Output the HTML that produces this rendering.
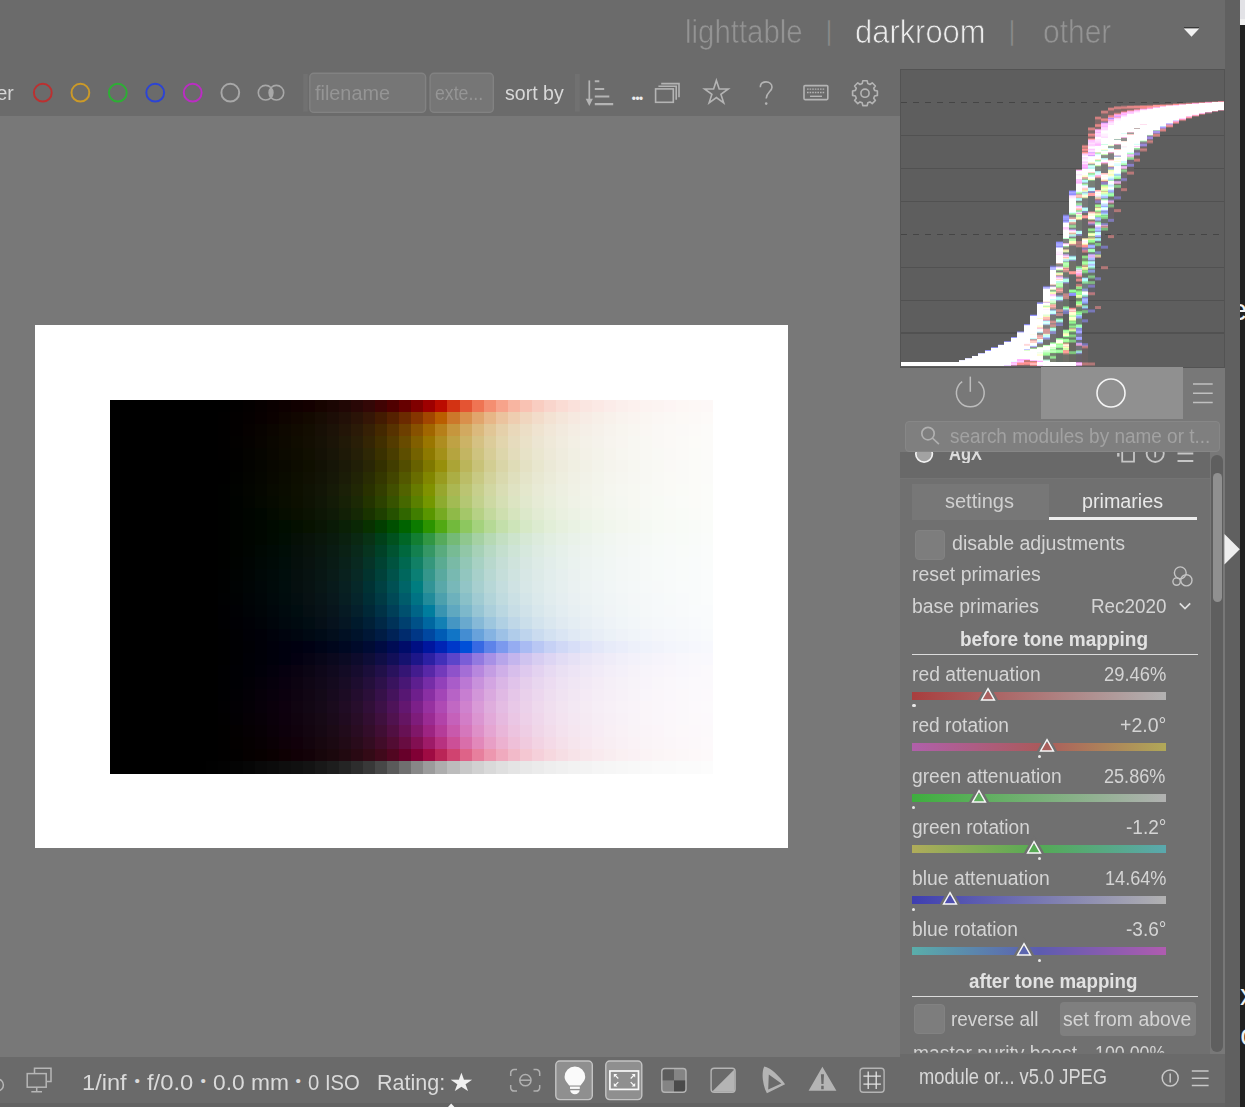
<!DOCTYPE html>
<html lang="en"><head><meta charset="utf-8"><title>darktable</title>
<style>
html,body{margin:0;padding:0}
body{width:1245px;height:1107px;position:relative;overflow:hidden;background:#787878;font-family:"Liberation Sans",sans-serif}
.a{position:absolute}
span.t{position:absolute;white-space:nowrap;line-height:1;transform-origin:0 0;display:block}
svg{position:absolute;overflow:visible}
.ic{fill:none;stroke:#b4b4b4;stroke-width:1.6}

</style></head><body>
<!-- top header -->
<div class="a" style="left:0;top:0;width:1225px;height:70px;background:#6b6b6b"></div>
<!-- filter bar -->
<div class="a" style="left:0;top:69px;width:900px;height:47px;background:#6b6b6b"></div>
<!-- right strip + other window -->
<div class="a" style="left:1240px;top:0;width:5px;height:1107px;background:#212121"></div>
<div class="a" style="left:1240px;top:0;width:5px;height:19px;background:#e2e2e6"></div>
<div class="a" style="left:1240px;top:19px;width:5px;height:6px;background:#f0f0f0"></div>
<!-- header dropdown triangle -->
<svg style="left:1183px;top:26px" width="18" height="12" viewBox="0 0 18 12"><path d="M1 1.6H16" stroke="#3a3a3a" stroke-width="1.2"/><path d="M0.8 2.4H16.2L8.5 10.8Z" fill="#f2f2f2"/></svg>

<!-- filter bar widgets -->
<svg style="left:0;top:70px" width="900" height="46" viewBox="0 70 900 46">
 <g fill="none" stroke-width="1.95">
  <circle cx="42.8" cy="92.7" r="8.9" stroke="#bc3030"/>
  <circle cx="80.4" cy="92.7" r="8.9" stroke="#cc9a28"/>
  <circle cx="117.8" cy="92.7" r="8.9" stroke="#2cb034"/>
  <circle cx="155.2" cy="92.7" r="8.9" stroke="#2c44d4"/>
  <circle cx="192.7" cy="92.7" r="8.9" stroke="#bc2cc4"/>
  <circle cx="230.3" cy="92.7" r="8.9" stroke="#a8a8a8"/>
 </g>
 <g fill="none" stroke="#a8a8a8" stroke-width="1.6">
  <circle cx="265.6" cy="92.7" r="7.3"/><circle cx="276.4" cy="92.7" r="7.3"/>
 </g>
 <path d="M271 87.8a7.3 7.3 0 0 1 0 9.8a7.3 7.3 0 0 1 0-9.8Z" fill="#a8a8a8"/>
 <rect x="303.1" y="74" width="4.6" height="37.6" fill="#717171"/>
 <rect x="309.8" y="73.3" width="115.8" height="39.1" rx="4" fill="#767676" stroke="#828282" stroke-width="1.4"/>
 <rect x="430.1" y="73.3" width="63.2" height="39.1" rx="4" fill="#767676" stroke="#828282" stroke-width="1.4"/>
 <rect x="575" y="74" width="4.8" height="37.6" fill="#717171"/>
 <!-- sort icon -->
 <path d="M589.3 80.4V100" stroke="#b4b4b4" stroke-width="1.7" fill="none"/>
 <path d="M585.7 98.8H592.9L589.3 106Z" fill="#b4b4b4"/>
 <path d="M594.8 81.3H599.3M594.8 89H604.2M594.8 96.5H609.3M594.8 104.1H613.2" stroke="#b4b4b4" stroke-width="2.1" fill="none"/>
 <!-- stack icon -->
 <g class="ic" stroke-width="1.7">
  <rect x="655.6" y="88.9" width="17.7" height="13.4"/>
  <path d="M658.4 86.2H676.2V99.8"/>
  <path d="M661.2 83.6H679V97.2"/>
 </g>
 <!-- star -->
 <path class="ic" stroke-width="1.85" stroke-linejoin="miter" stroke-miterlimit="10" d="M716.4 80.4L719.2 89.0L728.2 89.0L720.9 94.3L723.7 102.8L716.4 97.5L709.1 102.8L711.9 94.3L704.6 89.0L713.6 89.0Z"/>
 <!-- question -->
 <path class="ic" stroke-width="1.7" d="M760.3 87.3C760.3 83.5 763 81.9 766 81.9C769.3 81.9 772 84 772 87.2C772 91.6 766.2 92.3 766.2 98.6"/>
 <circle cx="766.2" cy="103.6" r="1.3" fill="#b4b4b4"/>
 <!-- keyboard -->
 <g class="ic" stroke-width="1.5">
  <rect x="804" y="85.6" width="23.8" height="14" rx="1"/>
  <path d="M807 89.2H825" stroke-dasharray="1.6 1" stroke-width="1.3"/>
  <path d="M807 92.5H825" stroke-dasharray="1.6 1" stroke-width="1.3"/>
  <path d="M810 96.3H822" stroke-width="1.4"/>
 </g>
 <!-- gear -->
 <g class="ic" stroke-width="1.6" transform="translate(865 93.2)">
  <circle r="4.1"/>
  <path id="gearp" d="M-2.2 -12.4H2.2L2.8 -9.6L5 -8.7L7.2 -10.4L10.4 -7.2L8.7 -5L9.6 -2.8L12.4 -2.2V2.2L9.6 2.8L8.7 5L10.4 7.2L7.2 10.4L5 8.7L2.8 9.6L2.2 12.4H-2.2L-2.8 9.6L-5 8.7L-7.2 10.4L-10.4 7.2L-8.7 5L-9.6 2.8L-12.4 2.2V-2.2L-9.6 -2.8L-8.7 -5L-10.4 -7.2L-7.2 -10.4L-5 -8.7L-2.8 -9.6Z" stroke-linejoin="round"/>
 </g>
</svg>

<!-- white canvas -->
<div class="a" style="left:34.6px;top:324.6px;width:753.5px;height:523.8px;background:#fff"></div>

<!-- right panel -->
<div class="a" style="left:900px;top:70px;width:325px;height:1037px;background:#787878"></div>
<svg style="left:900px;top:69px" width="325" height="299" viewBox="900 69 325 299" shape-rendering="crispEdges"><rect x="900" y="69.5" width="325" height="297.8" fill="#5e5e5e"/><path d="M901 102.5H1224" stroke="#454545" stroke-width="1.25" stroke-dasharray="5.9 6.1" fill="none"/><path d="M901 135.5H1224" stroke="#515151" stroke-width="1.2" fill="none"/><path d="M901 168.4H1224" stroke="#515151" stroke-width="1.2" fill="none"/><path d="M901 201.3H1224" stroke="#515151" stroke-width="1.2" fill="none"/><path d="M901 234.2H1224" stroke="#454545" stroke-width="1.25" stroke-dasharray="5.9 6.1" fill="none"/><path d="M901 267.2H1224" stroke="#515151" stroke-width="1.2" fill="none"/><path d="M901 300.1H1224" stroke="#515151" stroke-width="1.2" fill="none"/><path d="M901 333.0H1224" stroke="#515151" stroke-width="1.2" fill="none"/><g style="filter:blur(0.45px)"><rect x="900.5" y="362" width="6.53" height="4" fill="#ffffff"/><rect x="907.0" y="362" width="6.53" height="4" fill="#ffffff"/><rect x="913.5" y="362" width="6.53" height="4" fill="#ffffff"/><rect x="919.9" y="362" width="6.53" height="4" fill="#ffffff"/><rect x="926.4" y="362" width="6.53" height="4" fill="#ffffff"/><rect x="932.9" y="362" width="6.53" height="4" fill="#ffffff"/><rect x="939.4" y="362" width="6.53" height="4" fill="#ffffff"/><rect x="945.9" y="362" width="6.53" height="4" fill="#ffffff"/><rect x="952.3" y="362" width="6.53" height="4" fill="#ffffff"/><rect x="958.8" y="360" width="6.53" height="1" fill="#f0f0ff"/><rect x="958.8" y="361" width="6.53" height="5" fill="#ffffff"/><rect x="965.3" y="358" width="6.53" height="1" fill="#e0e0ff"/><rect x="965.3" y="359" width="6.53" height="7" fill="#ffffff"/><rect x="971.8" y="355" width="6.53" height="1" fill="#606070"/><rect x="971.8" y="356" width="6.53" height="10" fill="#ffffff"/><rect x="978.3" y="353" width="6.53" height="1" fill="#d0d0ff"/><rect x="978.3" y="354" width="6.53" height="12" fill="#ffffff"/><rect x="984.7" y="350" width="6.53" height="1" fill="#9898ff"/><rect x="984.7" y="351" width="6.53" height="15" fill="#ffffff"/><rect x="991.2" y="347" width="6.53" height="1" fill="#8888e8"/><rect x="991.2" y="348" width="6.53" height="18" fill="#ffffff"/><rect x="997.7" y="344" width="6.53" height="1" fill="#707098"/><rect x="997.7" y="345" width="6.53" height="21" fill="#ffffff"/><rect x="1004.2" y="341" width="6.53" height="1" fill="#8888e0"/><rect x="1004.2" y="342" width="6.53" height="23" fill="#ffffff"/><rect x="1004.2" y="365" width="6.53" height="1" fill="#e8d0ff"/><rect x="1010.7" y="337" width="6.53" height="1" fill="#9898ff"/><rect x="1010.7" y="338" width="6.53" height="23" fill="#ffffff"/><rect x="1010.7" y="361" width="6.53" height="1" fill="#f0ffff"/><rect x="1010.7" y="362" width="6.53" height="1" fill="#ffb8ff"/><rect x="1010.7" y="363" width="6.53" height="2" fill="#ffc8ff"/><rect x="1010.7" y="365" width="6.53" height="1" fill="#b880a0"/><rect x="1017.1" y="331" width="6.53" height="1" fill="#7878b0"/><rect x="1017.1" y="332" width="6.53" height="1" fill="#d0d0ff"/><rect x="1017.1" y="333" width="6.53" height="26" fill="#ffffff"/><rect x="1017.1" y="359" width="6.53" height="1" fill="#ffb8ff"/><rect x="1017.1" y="360" width="6.53" height="1" fill="#ffb0ff"/><rect x="1017.1" y="361" width="6.53" height="1" fill="#ffc8ff"/><rect x="1017.1" y="362" width="6.53" height="1" fill="#ffa8d0"/><rect x="1017.1" y="363" width="6.53" height="1" fill="#ff9090"/><rect x="1017.1" y="364" width="6.53" height="1" fill="#f89090"/><rect x="1017.1" y="365" width="6.53" height="1" fill="#886868"/><rect x="1023.6" y="324" width="6.53" height="1" fill="#8888e8"/><rect x="1023.6" y="325" width="6.53" height="1" fill="#e8e8ff"/><rect x="1023.6" y="326" width="6.53" height="17" fill="#ffffff"/><rect x="1023.6" y="343" width="6.53" height="1" fill="#fff8ff"/><rect x="1023.6" y="344" width="6.53" height="1" fill="#ffd8d8"/><rect x="1023.6" y="345" width="6.53" height="1" fill="#ffe0e0"/><rect x="1023.6" y="346" width="6.53" height="3" fill="#ffffff"/><rect x="1023.6" y="349" width="6.53" height="1" fill="#c0c8ff"/><rect x="1023.6" y="350" width="6.53" height="1" fill="#e0ffd0"/><rect x="1023.6" y="351" width="6.53" height="8" fill="#ffffff"/><rect x="1023.6" y="359" width="6.53" height="1" fill="#ffb8ff"/><rect x="1023.6" y="360" width="6.53" height="1" fill="#d08080"/><rect x="1023.6" y="361" width="6.53" height="1" fill="#c07878"/><rect x="1023.6" y="362" width="6.53" height="2" fill="#ff9090"/><rect x="1023.6" y="364" width="6.53" height="1" fill="#e08888"/><rect x="1023.6" y="365" width="6.53" height="1" fill="#886868"/><rect x="1030.1" y="314" width="6.53" height="1" fill="#686888"/><rect x="1030.1" y="315" width="6.53" height="1" fill="#9898ff"/><rect x="1030.1" y="316" width="6.53" height="18" fill="#ffffff"/><rect x="1030.1" y="334" width="6.53" height="1" fill="#fffff0"/><rect x="1030.1" y="335" width="6.53" height="3" fill="#ffffff"/><rect x="1030.1" y="338" width="6.53" height="1" fill="#c8ffff"/><rect x="1030.1" y="339" width="6.53" height="1" fill="#b8a8a8"/><rect x="1030.1" y="340" width="6.53" height="1" fill="#e8b0b0"/><rect x="1030.1" y="341" width="6.53" height="2" fill="#ffd0c8"/><rect x="1030.1" y="343" width="6.53" height="2" fill="#ffffff"/><rect x="1030.1" y="345" width="6.53" height="1" fill="#e8ffff"/><rect x="1030.1" y="346" width="6.53" height="1" fill="#b0b0f8"/><rect x="1030.1" y="347" width="6.53" height="1" fill="#909098"/><rect x="1030.1" y="348" width="6.53" height="1" fill="#a0d098"/><rect x="1030.1" y="349" width="6.53" height="1" fill="#fffff8"/><rect x="1030.1" y="350" width="6.53" height="10" fill="#ffffff"/><rect x="1030.1" y="360" width="6.53" height="1" fill="#ffc0ff"/><rect x="1030.1" y="361" width="6.53" height="1" fill="#c88080"/><rect x="1030.1" y="362" width="6.53" height="1" fill="#ff9090"/><rect x="1030.1" y="363" width="6.53" height="2" fill="#ffb8b8"/><rect x="1030.1" y="365" width="6.53" height="1" fill="#d88080"/><rect x="1036.6" y="302" width="6.53" height="1" fill="#8080c0"/><rect x="1036.6" y="303" width="6.53" height="1" fill="#a0a0ff"/><rect x="1036.6" y="304" width="6.53" height="14" fill="#ffffff"/><rect x="1036.6" y="318" width="6.53" height="1" fill="#ffffd8"/><rect x="1036.6" y="319" width="6.53" height="6" fill="#ffffff"/><rect x="1036.6" y="325" width="6.53" height="1" fill="#ffffe8"/><rect x="1036.6" y="326" width="6.53" height="1" fill="#ffffd8"/><rect x="1036.6" y="327" width="6.53" height="1" fill="#ffd8d0"/><rect x="1036.6" y="328" width="6.53" height="1" fill="#ffc8d8"/><rect x="1036.6" y="329" width="6.53" height="1" fill="#f0ffff"/><rect x="1036.6" y="330" width="6.53" height="1" fill="#ffffff"/><rect x="1036.6" y="331" width="6.53" height="1" fill="#e8ffff"/><rect x="1036.6" y="332" width="6.53" height="1" fill="#b0d8e8"/><rect x="1036.6" y="333" width="6.53" height="1" fill="#909090"/><rect x="1036.6" y="334" width="6.53" height="1" fill="#989090"/><rect x="1036.6" y="335" width="6.53" height="1" fill="#e0a8a0"/><rect x="1036.6" y="336" width="6.53" height="1" fill="#e8a8a8"/><rect x="1036.6" y="337" width="6.53" height="1" fill="#ffb8b8"/><rect x="1036.6" y="338" width="6.53" height="1" fill="#e8b0a8"/><rect x="1036.6" y="339" width="6.53" height="1" fill="#fffff0"/><rect x="1036.6" y="340" width="6.53" height="2" fill="#d8ffff"/><rect x="1036.6" y="342" width="6.53" height="1" fill="#b0c0ff"/><rect x="1036.6" y="343" width="6.53" height="1" fill="#9090c0"/><rect x="1036.6" y="344" width="6.53" height="2" fill="#808078"/><rect x="1036.6" y="346" width="6.53" height="1" fill="#809080"/><rect x="1036.6" y="347" width="6.53" height="1" fill="#e0ffc8"/><rect x="1036.6" y="348" width="6.53" height="4" fill="#ffffff"/><rect x="1036.6" y="352" width="6.53" height="1" fill="#f0fff0"/><rect x="1036.6" y="353" width="6.53" height="1" fill="#f8fff0"/><rect x="1036.6" y="354" width="6.53" height="2" fill="#ffffd8"/><rect x="1036.6" y="356" width="6.53" height="4" fill="#ffffff"/><rect x="1036.6" y="360" width="6.53" height="1" fill="#ffe8ff"/><rect x="1036.6" y="361" width="6.53" height="1" fill="#ffb0ff"/><rect x="1036.6" y="362" width="6.53" height="3" fill="#ffffff"/><rect x="1036.6" y="365" width="6.53" height="1" fill="#ffd8ff"/><rect x="1043.1" y="285" width="6.53" height="1" fill="#606068"/><rect x="1043.1" y="286" width="6.53" height="1" fill="#7878b8"/><rect x="1043.1" y="287" width="6.53" height="1" fill="#b0b0ff"/><rect x="1043.1" y="288" width="6.53" height="1" fill="#c8c8ff"/><rect x="1043.1" y="289" width="6.53" height="12" fill="#ffffff"/><rect x="1043.1" y="301" width="6.53" height="1" fill="#fff0e0"/><rect x="1043.1" y="302" width="6.53" height="1" fill="#e0c0e8"/><rect x="1043.1" y="303" width="6.53" height="2" fill="#ffffff"/><rect x="1043.1" y="305" width="6.53" height="1" fill="#f0ffd0"/><rect x="1043.1" y="306" width="6.53" height="1" fill="#c0f8b8"/><rect x="1043.1" y="307" width="6.53" height="1" fill="#ffffc8"/><rect x="1043.1" y="308" width="6.53" height="1" fill="#ffffff"/><rect x="1043.1" y="309" width="6.53" height="1" fill="#fff0ff"/><rect x="1043.1" y="310" width="6.53" height="4" fill="#ffffff"/><rect x="1043.1" y="314" width="6.53" height="1" fill="#f0ffe8"/><rect x="1043.1" y="315" width="6.53" height="1" fill="#e0ffd8"/><rect x="1043.1" y="316" width="6.53" height="1" fill="#f8f8b8"/><rect x="1043.1" y="317" width="6.53" height="2" fill="#ffc0b8"/><rect x="1043.1" y="319" width="6.53" height="1" fill="#f0b0a8"/><rect x="1043.1" y="320" width="6.53" height="1" fill="#c8b0d0"/><rect x="1043.1" y="321" width="6.53" height="1" fill="#c0ffff"/><rect x="1043.1" y="322" width="6.53" height="1" fill="#e8ffff"/><rect x="1043.1" y="323" width="6.53" height="1" fill="#d0ffff"/><rect x="1043.1" y="324" width="6.53" height="1" fill="#a8c8e0"/><rect x="1043.1" y="325" width="6.53" height="1" fill="#888890"/><rect x="1043.1" y="326" width="6.53" height="2" fill="#808080"/><rect x="1043.1" y="328" width="6.53" height="1" fill="#988888"/><rect x="1043.1" y="329" width="6.53" height="1" fill="#d09898"/><rect x="1043.1" y="330" width="6.53" height="1" fill="#d89898"/><rect x="1043.1" y="331" width="6.53" height="2" fill="#d09898"/><rect x="1043.1" y="333" width="6.53" height="1" fill="#d8a8a0"/><rect x="1043.1" y="334" width="6.53" height="1" fill="#e0ffd8"/><rect x="1043.1" y="335" width="6.53" height="1" fill="#c0ffff"/><rect x="1043.1" y="336" width="6.53" height="1" fill="#c8ffff"/><rect x="1043.1" y="337" width="6.53" height="1" fill="#a8c8ff"/><rect x="1043.1" y="338" width="6.53" height="1" fill="#9090d0"/><rect x="1043.1" y="339" width="6.53" height="1" fill="#8888a8"/><rect x="1043.1" y="340" width="6.53" height="4" fill="#707070"/><rect x="1043.1" y="344" width="6.53" height="1" fill="#787870"/><rect x="1043.1" y="345" width="6.53" height="1" fill="#b8ffb8"/><rect x="1043.1" y="346" width="6.53" height="1" fill="#fffff8"/><rect x="1043.1" y="347" width="6.53" height="3" fill="#ffffff"/><rect x="1043.1" y="350" width="6.53" height="1" fill="#e0ffe0"/><rect x="1043.1" y="351" width="6.53" height="1" fill="#d8ffd8"/><rect x="1043.1" y="352" width="6.53" height="1" fill="#c0ffb8"/><rect x="1043.1" y="353" width="6.53" height="1" fill="#a8ffa8"/><rect x="1043.1" y="354" width="6.53" height="1" fill="#a0ff98"/><rect x="1043.1" y="355" width="6.53" height="1" fill="#90d090"/><rect x="1043.1" y="356" width="6.53" height="1" fill="#788878"/><rect x="1043.1" y="357" width="6.53" height="2" fill="#788078"/><rect x="1043.1" y="359" width="6.53" height="1" fill="#90b8a0"/><rect x="1043.1" y="360" width="6.53" height="1" fill="#d0f8e8"/><rect x="1043.1" y="361" width="6.53" height="5" fill="#ffffff"/><rect x="1049.5" y="265" width="6.53" height="1" fill="#686880"/><rect x="1049.5" y="266" width="6.53" height="1" fill="#7878c0"/><rect x="1049.5" y="267" width="6.53" height="1" fill="#a8a8ff"/><rect x="1049.5" y="268" width="6.53" height="2" fill="#b8b8ff"/><rect x="1049.5" y="270" width="6.53" height="14" fill="#ffffff"/><rect x="1049.5" y="284" width="6.53" height="1" fill="#f0d0c8"/><rect x="1049.5" y="285" width="6.53" height="1" fill="#a09890"/><rect x="1049.5" y="286" width="6.53" height="1" fill="#b8a8d0"/><rect x="1049.5" y="287" width="6.53" height="1" fill="#fff8ff"/><rect x="1049.5" y="288" width="6.53" height="1" fill="#ffffff"/><rect x="1049.5" y="289" width="6.53" height="1" fill="#e0f0c0"/><rect x="1049.5" y="290" width="6.53" height="1" fill="#98b090"/><rect x="1049.5" y="291" width="6.53" height="1" fill="#a8e0a0"/><rect x="1049.5" y="292" width="6.53" height="1" fill="#f8ffc0"/><rect x="1049.5" y="293" width="6.53" height="1" fill="#fff8b8"/><rect x="1049.5" y="294" width="6.53" height="1" fill="#ffc8f0"/><rect x="1049.5" y="295" width="6.53" height="1" fill="#ffc8ff"/><rect x="1049.5" y="296" width="6.53" height="1" fill="#fff0ff"/><rect x="1049.5" y="297" width="6.53" height="2" fill="#ffffff"/><rect x="1049.5" y="299" width="6.53" height="1" fill="#d0ffff"/><rect x="1049.5" y="300" width="6.53" height="1" fill="#d8ffe8"/><rect x="1049.5" y="301" width="6.53" height="1" fill="#d8ffd0"/><rect x="1049.5" y="302" width="6.53" height="1" fill="#c8ffc8"/><rect x="1049.5" y="303" width="6.53" height="1" fill="#a8d898"/><rect x="1049.5" y="304" width="6.53" height="1" fill="#e0c0a8"/><rect x="1049.5" y="305" width="6.53" height="1" fill="#f8a8a0"/><rect x="1049.5" y="306" width="6.53" height="1" fill="#ffb0b0"/><rect x="1049.5" y="307" width="6.53" height="1" fill="#d8a098"/><rect x="1049.5" y="308" width="6.53" height="1" fill="#b89890"/><rect x="1049.5" y="309" width="6.53" height="1" fill="#8890a8"/><rect x="1049.5" y="310" width="6.53" height="1" fill="#a0c8e0"/><rect x="1049.5" y="311" width="6.53" height="1" fill="#c8ffff"/><rect x="1049.5" y="312" width="6.53" height="1" fill="#d0ffff"/><rect x="1049.5" y="313" width="6.53" height="1" fill="#b8fff8"/><rect x="1049.5" y="314" width="6.53" height="1" fill="#9090c0"/><rect x="1049.5" y="315" width="6.53" height="5" fill="#787878"/><rect x="1049.5" y="320" width="6.53" height="1" fill="#988080"/><rect x="1049.5" y="321" width="6.53" height="1" fill="#c89090"/><rect x="1049.5" y="322" width="6.53" height="1" fill="#d09090"/><rect x="1049.5" y="323" width="6.53" height="1" fill="#a08888"/><rect x="1049.5" y="324" width="6.53" height="1" fill="#b88888"/><rect x="1049.5" y="325" width="6.53" height="1" fill="#c89090"/><rect x="1049.5" y="326" width="6.53" height="1" fill="#c09090"/><rect x="1049.5" y="327" width="6.53" height="1" fill="#98c090"/><rect x="1049.5" y="328" width="6.53" height="1" fill="#b0ffe8"/><rect x="1049.5" y="329" width="6.53" height="1" fill="#b8fff8"/><rect x="1049.5" y="330" width="6.53" height="1" fill="#a0e8e0"/><rect x="1049.5" y="331" width="6.53" height="1" fill="#9098c8"/><rect x="1049.5" y="332" width="6.53" height="1" fill="#8888c8"/><rect x="1049.5" y="333" width="6.53" height="1" fill="#8888c0"/><rect x="1049.5" y="334" width="6.53" height="1" fill="#707078"/><rect x="1049.5" y="335" width="6.53" height="7" fill="#707070"/><rect x="1049.5" y="342" width="6.53" height="1" fill="#88c088"/><rect x="1049.5" y="343" width="6.53" height="1" fill="#b8ffb8"/><rect x="1049.5" y="344" width="6.53" height="2" fill="#ffffff"/><rect x="1049.5" y="346" width="6.53" height="1" fill="#fffff0"/><rect x="1049.5" y="347" width="6.53" height="1" fill="#d8ffd0"/><rect x="1049.5" y="348" width="6.53" height="1" fill="#e0ffd8"/><rect x="1049.5" y="349" width="6.53" height="1" fill="#a8ffa8"/><rect x="1049.5" y="350" width="6.53" height="1" fill="#b8ffb0"/><rect x="1049.5" y="351" width="6.53" height="1" fill="#c0ffc0"/><rect x="1049.5" y="352" width="6.53" height="1" fill="#a8ffa0"/><rect x="1049.5" y="353" width="6.53" height="1" fill="#789078"/><rect x="1049.5" y="354" width="6.53" height="1" fill="#788070"/><rect x="1049.5" y="355" width="6.53" height="1" fill="#789078"/><rect x="1049.5" y="356" width="6.53" height="1" fill="#90d088"/><rect x="1049.5" y="357" width="6.53" height="1" fill="#90e890"/><rect x="1049.5" y="358" width="6.53" height="1" fill="#88c088"/><rect x="1049.5" y="359" width="6.53" height="3" fill="#788070"/><rect x="1049.5" y="362" width="6.53" height="4" fill="#ffffff"/><rect x="1056.0" y="241" width="6.53" height="1" fill="#707098"/><rect x="1056.0" y="242" width="6.53" height="1" fill="#9090ff"/><rect x="1056.0" y="243" width="6.53" height="1" fill="#a0a0ff"/><rect x="1056.0" y="244" width="6.53" height="2" fill="#a8a8ff"/><rect x="1056.0" y="246" width="6.53" height="1" fill="#9090f8"/><rect x="1056.0" y="247" width="6.53" height="1" fill="#c8c8ff"/><rect x="1056.0" y="248" width="6.53" height="3" fill="#ffffff"/><rect x="1056.0" y="251" width="6.53" height="1" fill="#fff8ff"/><rect x="1056.0" y="252" width="6.53" height="2" fill="#fff0ff"/><rect x="1056.0" y="254" width="6.53" height="1" fill="#ffe0ff"/><rect x="1056.0" y="255" width="6.53" height="8" fill="#ffffff"/><rect x="1056.0" y="263" width="6.53" height="1" fill="#d0b0a8"/><rect x="1056.0" y="264" width="6.53" height="2" fill="#888880"/><rect x="1056.0" y="266" width="6.53" height="1" fill="#a8a0c0"/><rect x="1056.0" y="267" width="6.53" height="1" fill="#f8d8ff"/><rect x="1056.0" y="268" width="6.53" height="1" fill="#ffffff"/><rect x="1056.0" y="269" width="6.53" height="1" fill="#e8ffc8"/><rect x="1056.0" y="270" width="6.53" height="1" fill="#90b890"/><rect x="1056.0" y="271" width="6.53" height="1" fill="#888080"/><rect x="1056.0" y="272" width="6.53" height="1" fill="#a0d098"/><rect x="1056.0" y="273" width="6.53" height="1" fill="#f0f8b8"/><rect x="1056.0" y="274" width="6.53" height="1" fill="#f8f0b8"/><rect x="1056.0" y="275" width="6.53" height="1" fill="#d0a0a0"/><rect x="1056.0" y="276" width="6.53" height="1" fill="#b8a8d8"/><rect x="1056.0" y="277" width="6.53" height="1" fill="#f8b8f0"/><rect x="1056.0" y="278" width="6.53" height="1" fill="#ffe0ff"/><rect x="1056.0" y="279" width="6.53" height="1" fill="#ffe0c8"/><rect x="1056.0" y="280" width="6.53" height="1" fill="#ffffff"/><rect x="1056.0" y="281" width="6.53" height="1" fill="#c0f8f0"/><rect x="1056.0" y="282" width="6.53" height="1" fill="#b8ffe8"/><rect x="1056.0" y="283" width="6.53" height="2" fill="#c0ffb8"/><rect x="1056.0" y="285" width="6.53" height="1" fill="#c0ffc0"/><rect x="1056.0" y="286" width="6.53" height="1" fill="#a8ffa0"/><rect x="1056.0" y="287" width="6.53" height="1" fill="#a0d098"/><rect x="1056.0" y="288" width="6.53" height="1" fill="#d0a098"/><rect x="1056.0" y="289" width="6.53" height="1" fill="#e09898"/><rect x="1056.0" y="290" width="6.53" height="1" fill="#ffa8a8"/><rect x="1056.0" y="291" width="6.53" height="1" fill="#d09890"/><rect x="1056.0" y="292" width="6.53" height="1" fill="#c09090"/><rect x="1056.0" y="293" width="6.53" height="2" fill="#787878"/><rect x="1056.0" y="295" width="6.53" height="1" fill="#8888a8"/><rect x="1056.0" y="296" width="6.53" height="1" fill="#98b8d8"/><rect x="1056.0" y="297" width="6.53" height="1" fill="#b8fff0"/><rect x="1056.0" y="298" width="6.53" height="1" fill="#c0ffff"/><rect x="1056.0" y="299" width="6.53" height="1" fill="#b0fff0"/><rect x="1056.0" y="300" width="6.53" height="1" fill="#9098c8"/><rect x="1056.0" y="301" width="6.53" height="1" fill="#787888"/><rect x="1056.0" y="302" width="6.53" height="7" fill="#707070"/><rect x="1056.0" y="309" width="6.53" height="1" fill="#b08888"/><rect x="1056.0" y="310" width="6.53" height="1" fill="#c89088"/><rect x="1056.0" y="311" width="6.53" height="1" fill="#c08888"/><rect x="1056.0" y="312" width="6.53" height="1" fill="#807878"/><rect x="1056.0" y="313" width="6.53" height="1" fill="#b88888"/><rect x="1056.0" y="314" width="6.53" height="1" fill="#c08888"/><rect x="1056.0" y="315" width="6.53" height="1" fill="#b88888"/><rect x="1056.0" y="316" width="6.53" height="1" fill="#707070"/><rect x="1056.0" y="317" width="6.53" height="1" fill="#687070"/><rect x="1056.0" y="318" width="6.53" height="1" fill="#80b080"/><rect x="1056.0" y="319" width="6.53" height="1" fill="#98f0a8"/><rect x="1056.0" y="320" width="6.53" height="1" fill="#b0fff0"/><rect x="1056.0" y="321" width="6.53" height="1" fill="#a0e8e0"/><rect x="1056.0" y="322" width="6.53" height="1" fill="#88a8b0"/><rect x="1056.0" y="323" width="6.53" height="1" fill="#7878b0"/><rect x="1056.0" y="324" width="6.53" height="2" fill="#8080b8"/><rect x="1056.0" y="326" width="6.53" height="12" fill="#686868"/><rect x="1056.0" y="338" width="6.53" height="1" fill="#88d888"/><rect x="1056.0" y="339" width="6.53" height="1" fill="#c0ffc0"/><rect x="1056.0" y="340" width="6.53" height="1" fill="#ffffe8"/><rect x="1056.0" y="341" width="6.53" height="2" fill="#fffff0"/><rect x="1056.0" y="343" width="6.53" height="1" fill="#d8ffb0"/><rect x="1056.0" y="344" width="6.53" height="1" fill="#a0ff98"/><rect x="1056.0" y="345" width="6.53" height="1" fill="#b8ffb8"/><rect x="1056.0" y="346" width="6.53" height="1" fill="#b0ffb0"/><rect x="1056.0" y="347" width="6.53" height="1" fill="#90f090"/><rect x="1056.0" y="348" width="6.53" height="1" fill="#789878"/><rect x="1056.0" y="349" width="6.53" height="1" fill="#80b880"/><rect x="1056.0" y="350" width="6.53" height="1" fill="#a0ffa0"/><rect x="1056.0" y="351" width="6.53" height="1" fill="#a8ffa8"/><rect x="1056.0" y="352" width="6.53" height="1" fill="#90f090"/><rect x="1056.0" y="353" width="6.53" height="1" fill="#708870"/><rect x="1056.0" y="354" width="6.53" height="8" fill="#687068"/><rect x="1056.0" y="362" width="6.53" height="4" fill="#ffffff"/><rect x="1062.5" y="214" width="6.53" height="1" fill="#686888"/><rect x="1062.5" y="215" width="6.53" height="1" fill="#8080d0"/><rect x="1062.5" y="216" width="6.53" height="1" fill="#9898ff"/><rect x="1062.5" y="217" width="6.53" height="1" fill="#a0a0ff"/><rect x="1062.5" y="218" width="6.53" height="2" fill="#9898ff"/><rect x="1062.5" y="220" width="6.53" height="1" fill="#8888e0"/><rect x="1062.5" y="221" width="6.53" height="1" fill="#9898ff"/><rect x="1062.5" y="222" width="6.53" height="1" fill="#c8c8ff"/><rect x="1062.5" y="223" width="6.53" height="4" fill="#ffffff"/><rect x="1062.5" y="227" width="6.53" height="2" fill="#ffd0ff"/><rect x="1062.5" y="229" width="6.53" height="1" fill="#ffe0ff"/><rect x="1062.5" y="230" width="6.53" height="8" fill="#ffffff"/><rect x="1062.5" y="238" width="6.53" height="1" fill="#b8ffd0"/><rect x="1062.5" y="239" width="6.53" height="4" fill="#808080"/><rect x="1062.5" y="243" width="6.53" height="1" fill="#e0b0d8"/><rect x="1062.5" y="244" width="6.53" height="1" fill="#fff0ff"/><rect x="1062.5" y="245" width="6.53" height="1" fill="#ffffff"/><rect x="1062.5" y="246" width="6.53" height="1" fill="#a0d8a0"/><rect x="1062.5" y="247" width="6.53" height="1" fill="#889880"/><rect x="1062.5" y="248" width="6.53" height="1" fill="#808078"/><rect x="1062.5" y="249" width="6.53" height="1" fill="#c8b098"/><rect x="1062.5" y="250" width="6.53" height="1" fill="#f0e8b0"/><rect x="1062.5" y="251" width="6.53" height="1" fill="#e8f0b0"/><rect x="1062.5" y="252" width="6.53" height="1" fill="#98b090"/><rect x="1062.5" y="253" width="6.53" height="1" fill="#808088"/><rect x="1062.5" y="254" width="6.53" height="1" fill="#b0a0d0"/><rect x="1062.5" y="255" width="6.53" height="1" fill="#e8b0e8"/><rect x="1062.5" y="256" width="6.53" height="1" fill="#ffd8ff"/><rect x="1062.5" y="257" width="6.53" height="1" fill="#ffc0c0"/><rect x="1062.5" y="258" width="6.53" height="1" fill="#fff0c8"/><rect x="1062.5" y="259" width="6.53" height="1" fill="#c0f0e8"/><rect x="1062.5" y="260" width="6.53" height="1" fill="#b0e8e8"/><rect x="1062.5" y="261" width="6.53" height="1" fill="#98b8c0"/><rect x="1062.5" y="262" width="6.53" height="1" fill="#a0f098"/><rect x="1062.5" y="263" width="6.53" height="1" fill="#b8ffb8"/><rect x="1062.5" y="264" width="6.53" height="1" fill="#b8ffb0"/><rect x="1062.5" y="265" width="6.53" height="1" fill="#a8ffa8"/><rect x="1062.5" y="266" width="6.53" height="1" fill="#a0f898"/><rect x="1062.5" y="267" width="6.53" height="1" fill="#d8d0a0"/><rect x="1062.5" y="268" width="6.53" height="1" fill="#d09090"/><rect x="1062.5" y="269" width="6.53" height="1" fill="#ffa0a0"/><rect x="1062.5" y="270" width="6.53" height="1" fill="#d09090"/><rect x="1062.5" y="271" width="6.53" height="1" fill="#c09088"/><rect x="1062.5" y="272" width="6.53" height="1" fill="#888078"/><rect x="1062.5" y="273" width="6.53" height="4" fill="#707870"/><rect x="1062.5" y="277" width="6.53" height="1" fill="#8080a0"/><rect x="1062.5" y="278" width="6.53" height="1" fill="#98b0d0"/><rect x="1062.5" y="279" width="6.53" height="1" fill="#b0ffe8"/><rect x="1062.5" y="280" width="6.53" height="1" fill="#b8fff0"/><rect x="1062.5" y="281" width="6.53" height="1" fill="#b0ffe8"/><rect x="1062.5" y="282" width="6.53" height="1" fill="#90a0d0"/><rect x="1062.5" y="283" width="6.53" height="1" fill="#807898"/><rect x="1062.5" y="284" width="6.53" height="9" fill="#707070"/><rect x="1062.5" y="293" width="6.53" height="1" fill="#a08080"/><rect x="1062.5" y="294" width="6.53" height="2" fill="#c08888"/><rect x="1062.5" y="296" width="6.53" height="1" fill="#d08888"/><rect x="1062.5" y="297" width="6.53" height="1" fill="#c08888"/><rect x="1062.5" y="298" width="6.53" height="1" fill="#b88880"/><rect x="1062.5" y="299" width="6.53" height="1" fill="#787070"/><rect x="1062.5" y="300" width="6.53" height="6" fill="#687068"/><rect x="1062.5" y="306" width="6.53" height="1" fill="#80b880"/><rect x="1062.5" y="307" width="6.53" height="1" fill="#90f090"/><rect x="1062.5" y="308" width="6.53" height="1" fill="#a8ffd0"/><rect x="1062.5" y="309" width="6.53" height="1" fill="#98d0d0"/><rect x="1062.5" y="310" width="6.53" height="1" fill="#8898c0"/><rect x="1062.5" y="311" width="6.53" height="1" fill="#8080c8"/><rect x="1062.5" y="312" width="6.53" height="1" fill="#7878b8"/><rect x="1062.5" y="313" width="6.53" height="1" fill="#7878b0"/><rect x="1062.5" y="314" width="6.53" height="1" fill="#606068"/><rect x="1062.5" y="329" width="6.53" height="1" fill="#709070"/><rect x="1062.5" y="330" width="6.53" height="1" fill="#98ff98"/><rect x="1062.5" y="331" width="6.53" height="2" fill="#b8ffb0"/><rect x="1062.5" y="333" width="6.53" height="1" fill="#e8ffb0"/><rect x="1062.5" y="334" width="6.53" height="1" fill="#ffffc0"/><rect x="1062.5" y="335" width="6.53" height="1" fill="#ffffd0"/><rect x="1062.5" y="336" width="6.53" height="1" fill="#98ff98"/><rect x="1062.5" y="337" width="6.53" height="1" fill="#709870"/><rect x="1062.5" y="338" width="6.53" height="1" fill="#789870"/><rect x="1062.5" y="339" width="6.53" height="1" fill="#98ff98"/><rect x="1062.5" y="340" width="6.53" height="1" fill="#b0ffa8"/><rect x="1062.5" y="341" width="6.53" height="1" fill="#a0ff98"/><rect x="1062.5" y="342" width="6.53" height="1" fill="#98b080"/><rect x="1062.5" y="343" width="6.53" height="1" fill="#c0a080"/><rect x="1062.5" y="344" width="6.53" height="1" fill="#ffe0c8"/><rect x="1062.5" y="345" width="6.53" height="1" fill="#fff8e0"/><rect x="1062.5" y="346" width="6.53" height="1" fill="#ffe0c0"/><rect x="1062.5" y="347" width="6.53" height="1" fill="#ffffb8"/><rect x="1062.5" y="348" width="6.53" height="1" fill="#d0ffb0"/><rect x="1062.5" y="349" width="6.53" height="1" fill="#d8ffa8"/><rect x="1062.5" y="350" width="6.53" height="1" fill="#f0a890"/><rect x="1062.5" y="351" width="6.53" height="2" fill="#ffa098"/><rect x="1062.5" y="353" width="6.53" height="1" fill="#c08880"/><rect x="1062.5" y="354" width="6.53" height="1" fill="#907870"/><rect x="1062.5" y="355" width="6.53" height="7" fill="#707068"/><rect x="1062.5" y="362" width="6.53" height="4" fill="#ffffff"/><rect x="1069.0" y="190" width="6.53" height="1" fill="#7070a0"/><rect x="1069.0" y="191" width="6.53" height="1" fill="#9090ff"/><rect x="1069.0" y="192" width="6.53" height="1" fill="#a8a8ff"/><rect x="1069.0" y="193" width="6.53" height="1" fill="#9898ff"/><rect x="1069.0" y="194" width="6.53" height="1" fill="#9090ff"/><rect x="1069.0" y="195" width="6.53" height="1" fill="#e0c0ff"/><rect x="1069.0" y="196" width="6.53" height="1" fill="#ffe0ff"/><rect x="1069.0" y="197" width="6.53" height="1" fill="#ffe8ff"/><rect x="1069.0" y="198" width="6.53" height="1" fill="#fff8ff"/><rect x="1069.0" y="199" width="6.53" height="13" fill="#ffffff"/><rect x="1069.0" y="212" width="6.53" height="1" fill="#e0ffff"/><rect x="1069.0" y="213" width="6.53" height="1" fill="#a8f8c0"/><rect x="1069.0" y="214" width="6.53" height="1" fill="#98d898"/><rect x="1069.0" y="215" width="6.53" height="2" fill="#808880"/><rect x="1069.0" y="217" width="6.53" height="1" fill="#c09890"/><rect x="1069.0" y="218" width="6.53" height="1" fill="#d8a0a0"/><rect x="1069.0" y="219" width="6.53" height="1" fill="#f8f0f8"/><rect x="1069.0" y="220" width="6.53" height="1" fill="#c8fff8"/><rect x="1069.0" y="221" width="6.53" height="1" fill="#e0f8f0"/><rect x="1069.0" y="222" width="6.53" height="1" fill="#e0b0a0"/><rect x="1069.0" y="223" width="6.53" height="1" fill="#c89890"/><rect x="1069.0" y="224" width="6.53" height="1" fill="#a09888"/><rect x="1069.0" y="225" width="6.53" height="1" fill="#90d090"/><rect x="1069.0" y="226" width="6.53" height="1" fill="#98d898"/><rect x="1069.0" y="227" width="6.53" height="1" fill="#90c090"/><rect x="1069.0" y="228" width="6.53" height="1" fill="#808088"/><rect x="1069.0" y="229" width="6.53" height="1" fill="#a098d0"/><rect x="1069.0" y="230" width="6.53" height="1" fill="#ffc0ff"/><rect x="1069.0" y="231" width="6.53" height="1" fill="#fff0ff"/><rect x="1069.0" y="232" width="6.53" height="1" fill="#ffe0d8"/><rect x="1069.0" y="233" width="6.53" height="1" fill="#e0b8a0"/><rect x="1069.0" y="234" width="6.53" height="1" fill="#c8e8d0"/><rect x="1069.0" y="235" width="6.53" height="1" fill="#b0f0e8"/><rect x="1069.0" y="236" width="6.53" height="1" fill="#a0c0d0"/><rect x="1069.0" y="237" width="6.53" height="1" fill="#888890"/><rect x="1069.0" y="238" width="6.53" height="1" fill="#98d890"/><rect x="1069.0" y="239" width="6.53" height="2" fill="#b8ffb0"/><rect x="1069.0" y="241" width="6.53" height="2" fill="#ffffc0"/><rect x="1069.0" y="243" width="6.53" height="1" fill="#fff0b8"/><rect x="1069.0" y="244" width="6.53" height="1" fill="#d09090"/><rect x="1069.0" y="245" width="6.53" height="1" fill="#988080"/><rect x="1069.0" y="246" width="6.53" height="9" fill="#707070"/><rect x="1069.0" y="255" width="6.53" height="1" fill="#788090"/><rect x="1069.0" y="256" width="6.53" height="1" fill="#98d0d8"/><rect x="1069.0" y="257" width="6.53" height="1" fill="#b8fff8"/><rect x="1069.0" y="258" width="6.53" height="1" fill="#c8ffff"/><rect x="1069.0" y="259" width="6.53" height="1" fill="#a0e8e0"/><rect x="1069.0" y="260" width="6.53" height="1" fill="#8888c0"/><rect x="1069.0" y="261" width="6.53" height="1" fill="#707070"/><rect x="1069.0" y="262" width="6.53" height="9" fill="#707068"/><rect x="1069.0" y="271" width="6.53" height="1" fill="#e09090"/><rect x="1069.0" y="272" width="6.53" height="1" fill="#ffa098"/><rect x="1069.0" y="273" width="6.53" height="1" fill="#ff9898"/><rect x="1069.0" y="274" width="6.53" height="1" fill="#907878"/><rect x="1069.0" y="275" width="6.53" height="14" fill="#606868"/><rect x="1069.0" y="289" width="6.53" height="1" fill="#78a878"/><rect x="1069.0" y="290" width="6.53" height="2" fill="#90ff98"/><rect x="1069.0" y="292" width="6.53" height="1" fill="#80c890"/><rect x="1069.0" y="293" width="6.53" height="1" fill="#9098ff"/><rect x="1069.0" y="294" width="6.53" height="1" fill="#9090ff"/><rect x="1069.0" y="295" width="6.53" height="1" fill="#8888f0"/><rect x="1069.0" y="307" width="6.53" height="1" fill="#806868"/><rect x="1069.0" y="308" width="6.53" height="1" fill="#f08888"/><rect x="1069.0" y="309" width="6.53" height="1" fill="#ffc0c0"/><rect x="1069.0" y="310" width="6.53" height="1" fill="#ffd8d8"/><rect x="1069.0" y="311" width="6.53" height="1" fill="#ffb8b8"/><rect x="1069.0" y="312" width="6.53" height="1" fill="#ffffd0"/><rect x="1069.0" y="313" width="6.53" height="1" fill="#ffffd8"/><rect x="1069.0" y="314" width="6.53" height="1" fill="#ffffc8"/><rect x="1069.0" y="315" width="6.53" height="1" fill="#d0ffb8"/><rect x="1069.0" y="316" width="6.53" height="1" fill="#c0ffa8"/><rect x="1069.0" y="317" width="6.53" height="2" fill="#ffffd0"/><rect x="1069.0" y="319" width="6.53" height="1" fill="#ffffc8"/><rect x="1069.0" y="320" width="6.53" height="1" fill="#c8f098"/><rect x="1069.0" y="321" width="6.53" height="1" fill="#90e088"/><rect x="1069.0" y="322" width="6.53" height="1" fill="#90f890"/><rect x="1069.0" y="323" width="6.53" height="1" fill="#88d888"/><rect x="1069.0" y="324" width="6.53" height="1" fill="#78a878"/><rect x="1069.0" y="325" width="6.53" height="1" fill="#80c080"/><rect x="1069.0" y="326" width="6.53" height="1" fill="#90e888"/><rect x="1069.0" y="327" width="6.53" height="1" fill="#88d080"/><rect x="1069.0" y="328" width="6.53" height="1" fill="#c0b088"/><rect x="1069.0" y="329" width="6.53" height="1" fill="#d8e098"/><rect x="1069.0" y="330" width="6.53" height="1" fill="#d8f8a0"/><rect x="1069.0" y="331" width="6.53" height="1" fill="#90d080"/><rect x="1069.0" y="332" width="6.53" height="1" fill="#709070"/><rect x="1069.0" y="333" width="6.53" height="1" fill="#688068"/><rect x="1069.0" y="334" width="6.53" height="1" fill="#78a878"/><rect x="1069.0" y="335" width="6.53" height="1" fill="#88d880"/><rect x="1069.0" y="336" width="6.53" height="1" fill="#80c880"/><rect x="1069.0" y="337" width="6.53" height="1" fill="#789870"/><rect x="1069.0" y="338" width="6.53" height="1" fill="#687868"/><rect x="1069.0" y="339" width="6.53" height="1" fill="#709070"/><rect x="1069.0" y="340" width="6.53" height="2" fill="#80c880"/><rect x="1069.0" y="342" width="6.53" height="1" fill="#789870"/><rect x="1069.0" y="343" width="6.53" height="8" fill="#686860"/><rect x="1069.0" y="351" width="6.53" height="1" fill="#78b078"/><rect x="1069.0" y="352" width="6.53" height="1" fill="#80c880"/><rect x="1069.0" y="353" width="6.53" height="1" fill="#80c078"/><rect x="1069.0" y="354" width="6.53" height="1" fill="#687868"/><rect x="1069.0" y="355" width="6.53" height="7" fill="#686860"/><rect x="1069.0" y="362" width="6.53" height="4" fill="#ffffff"/><rect x="1075.5" y="169" width="6.53" height="1" fill="#a07888"/><rect x="1075.5" y="170" width="6.53" height="1" fill="#ffc0ff"/><rect x="1075.5" y="171" width="6.53" height="3" fill="#ffffff"/><rect x="1075.5" y="174" width="6.53" height="1" fill="#ffe8ff"/><rect x="1075.5" y="175" width="6.53" height="1" fill="#fff8ff"/><rect x="1075.5" y="176" width="6.53" height="3" fill="#ffffff"/><rect x="1075.5" y="179" width="6.53" height="2" fill="#ffc8ff"/><rect x="1075.5" y="181" width="6.53" height="1" fill="#ffc0ff"/><rect x="1075.5" y="182" width="6.53" height="1" fill="#ffb8ff"/><rect x="1075.5" y="183" width="6.53" height="1" fill="#ffd0ff"/><rect x="1075.5" y="184" width="6.53" height="7" fill="#ffffff"/><rect x="1075.5" y="191" width="6.53" height="1" fill="#e8ffff"/><rect x="1075.5" y="192" width="6.53" height="1" fill="#b8ffb8"/><rect x="1075.5" y="193" width="6.53" height="1" fill="#a0d8a0"/><rect x="1075.5" y="194" width="6.53" height="1" fill="#c8b0a0"/><rect x="1075.5" y="195" width="6.53" height="2" fill="#ffc0b8"/><rect x="1075.5" y="197" width="6.53" height="1" fill="#e8b8a8"/><rect x="1075.5" y="198" width="6.53" height="1" fill="#b0f0f0"/><rect x="1075.5" y="199" width="6.53" height="1" fill="#b8fff8"/><rect x="1075.5" y="200" width="6.53" height="1" fill="#a8d8e0"/><rect x="1075.5" y="201" width="6.53" height="1" fill="#808080"/><rect x="1075.5" y="202" width="6.53" height="1" fill="#88a088"/><rect x="1075.5" y="203" width="6.53" height="1" fill="#98d098"/><rect x="1075.5" y="204" width="6.53" height="1" fill="#98e0a0"/><rect x="1075.5" y="205" width="6.53" height="1" fill="#a8d0e0"/><rect x="1075.5" y="206" width="6.53" height="1" fill="#ffb8f8"/><rect x="1075.5" y="207" width="6.53" height="1" fill="#ffd8ff"/><rect x="1075.5" y="208" width="6.53" height="1" fill="#ffd0c8"/><rect x="1075.5" y="209" width="6.53" height="1" fill="#ffb8a8"/><rect x="1075.5" y="210" width="6.53" height="1" fill="#b0d898"/><rect x="1075.5" y="211" width="6.53" height="1" fill="#a0e0b8"/><rect x="1075.5" y="212" width="6.53" height="1" fill="#e8e8f0"/><rect x="1075.5" y="213" width="6.53" height="1" fill="#f0b0e8"/><rect x="1075.5" y="214" width="6.53" height="1" fill="#f8ffd8"/><rect x="1075.5" y="215" width="6.53" height="1" fill="#c8ffb8"/><rect x="1075.5" y="216" width="6.53" height="1" fill="#c0ffc0"/><rect x="1075.5" y="217" width="6.53" height="1" fill="#f0ffc0"/><rect x="1075.5" y="218" width="6.53" height="1" fill="#f8ffb8"/><rect x="1075.5" y="219" width="6.53" height="1" fill="#d0c098"/><rect x="1075.5" y="220" width="6.53" height="1" fill="#807878"/><rect x="1075.5" y="221" width="6.53" height="9" fill="#707870"/><rect x="1075.5" y="230" width="6.53" height="1" fill="#8088a0"/><rect x="1075.5" y="231" width="6.53" height="1" fill="#b8fff0"/><rect x="1075.5" y="232" width="6.53" height="2" fill="#c0ffff"/><rect x="1075.5" y="234" width="6.53" height="1" fill="#8888c0"/><rect x="1075.5" y="235" width="6.53" height="1" fill="#8080a8"/><rect x="1075.5" y="236" width="6.53" height="5" fill="#706868"/><rect x="1075.5" y="241" width="6.53" height="1" fill="#b08080"/><rect x="1075.5" y="242" width="6.53" height="1" fill="#c08080"/><rect x="1075.5" y="243" width="6.53" height="1" fill="#b88080"/><rect x="1075.5" y="244" width="6.53" height="1" fill="#a88078"/><rect x="1075.5" y="245" width="6.53" height="2" fill="#b88080"/><rect x="1075.5" y="247" width="6.53" height="1" fill="#807070"/><rect x="1075.5" y="248" width="6.53" height="17" fill="#686868"/><rect x="1075.5" y="265" width="6.53" height="1" fill="#687068"/><rect x="1075.5" y="266" width="6.53" height="1" fill="#80b880"/><rect x="1075.5" y="267" width="6.53" height="1" fill="#88e088"/><rect x="1075.5" y="268" width="6.53" height="1" fill="#a8ffd0"/><rect x="1075.5" y="269" width="6.53" height="1" fill="#c8d8e0"/><rect x="1075.5" y="270" width="6.53" height="1" fill="#ffd8f0"/><rect x="1075.5" y="271" width="6.53" height="1" fill="#ffc8d8"/><rect x="1075.5" y="272" width="6.53" height="1" fill="#ffd0f0"/><rect x="1075.5" y="273" width="6.53" height="1" fill="#ffb0e8"/><rect x="1075.5" y="274" width="6.53" height="1" fill="#f8a0d8"/><rect x="1075.5" y="275" width="6.53" height="1" fill="#ff98b0"/><rect x="1075.5" y="276" width="6.53" height="1" fill="#e08888"/><rect x="1075.5" y="277" width="6.53" height="1" fill="#907070"/><rect x="1075.5" y="278" width="6.53" height="1" fill="#a07070"/><rect x="1075.5" y="279" width="6.53" height="2" fill="#e08888"/><rect x="1075.5" y="281" width="6.53" height="1" fill="#a07070"/><rect x="1075.5" y="282" width="6.53" height="1" fill="#686060"/><rect x="1075.5" y="283" width="6.53" height="1" fill="#706868"/><rect x="1075.5" y="284" width="6.53" height="1" fill="#b87878"/><rect x="1075.5" y="285" width="6.53" height="1" fill="#c07878"/><rect x="1075.5" y="286" width="6.53" height="1" fill="#c0c088"/><rect x="1075.5" y="287" width="6.53" height="2" fill="#90e888"/><rect x="1075.5" y="289" width="6.53" height="1" fill="#789870"/><rect x="1075.5" y="290" width="6.53" height="1" fill="#80b878"/><rect x="1075.5" y="291" width="6.53" height="1" fill="#90e888"/><rect x="1075.5" y="292" width="6.53" height="2" fill="#98ff98"/><rect x="1075.5" y="294" width="6.53" height="1" fill="#a0f890"/><rect x="1075.5" y="295" width="6.53" height="1" fill="#f0ffb0"/><rect x="1075.5" y="296" width="6.53" height="1" fill="#e0ffa8"/><rect x="1075.5" y="297" width="6.53" height="1" fill="#d0e898"/><rect x="1075.5" y="298" width="6.53" height="1" fill="#789870"/><rect x="1075.5" y="299" width="6.53" height="1" fill="#708868"/><rect x="1075.5" y="300" width="6.53" height="1" fill="#789070"/><rect x="1075.5" y="301" width="6.53" height="1" fill="#88d880"/><rect x="1075.5" y="302" width="6.53" height="1" fill="#98ff90"/><rect x="1075.5" y="303" width="6.53" height="1" fill="#98ff98"/><rect x="1075.5" y="304" width="6.53" height="1" fill="#d0f8a0"/><rect x="1075.5" y="305" width="6.53" height="1" fill="#d0c090"/><rect x="1075.5" y="306" width="6.53" height="1" fill="#b89080"/><rect x="1075.5" y="307" width="6.53" height="1" fill="#708068"/><rect x="1075.5" y="308" width="6.53" height="2" fill="#687868"/><rect x="1075.5" y="310" width="6.53" height="1" fill="#688068"/><rect x="1075.5" y="311" width="6.53" height="1" fill="#80c880"/><rect x="1075.5" y="312" width="6.53" height="1" fill="#88e888"/><rect x="1075.5" y="313" width="6.53" height="1" fill="#98ff98"/><rect x="1075.5" y="314" width="6.53" height="1" fill="#90e0b0"/><rect x="1075.5" y="315" width="6.53" height="1" fill="#a0e0f0"/><rect x="1075.5" y="316" width="6.53" height="1" fill="#a0a8ff"/><rect x="1075.5" y="317" width="6.53" height="1" fill="#90a0f0"/><rect x="1075.5" y="318" width="6.53" height="1" fill="#8090b0"/><rect x="1075.5" y="319" width="6.53" height="5" fill="#708078"/><rect x="1075.5" y="324" width="6.53" height="1" fill="#80c090"/><rect x="1075.5" y="325" width="6.53" height="2" fill="#a0ffb0"/><rect x="1075.5" y="327" width="6.53" height="1" fill="#a0e0e0"/><rect x="1075.5" y="328" width="6.53" height="1" fill="#8888d0"/><rect x="1075.5" y="329" width="6.53" height="1" fill="#8888e0"/><rect x="1075.5" y="330" width="6.53" height="1" fill="#9090e8"/><rect x="1075.5" y="331" width="6.53" height="1" fill="#a8a8ff"/><rect x="1075.5" y="332" width="6.53" height="1" fill="#a0a0ff"/><rect x="1075.5" y="333" width="6.53" height="1" fill="#8080c0"/><rect x="1075.5" y="334" width="6.53" height="2" fill="#787898"/><rect x="1075.5" y="336" width="6.53" height="1" fill="#7878b0"/><rect x="1075.5" y="337" width="6.53" height="2" fill="#a8a8ff"/><rect x="1075.5" y="339" width="6.53" height="1" fill="#9898ff"/><rect x="1075.5" y="340" width="6.53" height="2" fill="#707080"/><rect x="1075.5" y="342" width="6.53" height="1" fill="#7880b0"/><rect x="1075.5" y="343" width="6.53" height="1" fill="#d0a0e8"/><rect x="1075.5" y="344" width="6.53" height="1" fill="#d8a0e0"/><rect x="1075.5" y="345" width="6.53" height="1" fill="#c890b0"/><rect x="1075.5" y="346" width="6.53" height="4" fill="#707078"/><rect x="1075.5" y="350" width="6.53" height="1" fill="#88b890"/><rect x="1075.5" y="351" width="6.53" height="1" fill="#98d0d8"/><rect x="1075.5" y="352" width="6.53" height="1" fill="#a0d0e0"/><rect x="1075.5" y="353" width="6.53" height="1" fill="#8080b8"/><rect x="1075.5" y="354" width="6.53" height="1" fill="#686870"/><rect x="1075.5" y="355" width="6.53" height="7" fill="#686068"/><rect x="1075.5" y="362" width="6.53" height="1" fill="#d090d0"/><rect x="1075.5" y="363" width="6.53" height="2" fill="#ffc0ff"/><rect x="1075.5" y="365" width="6.53" height="1" fill="#c890c8"/><rect x="1081.9" y="144" width="6.53" height="1" fill="#706060"/><rect x="1081.9" y="145" width="6.53" height="1" fill="#b07878"/><rect x="1081.9" y="146" width="6.53" height="1" fill="#e88888"/><rect x="1081.9" y="147" width="6.53" height="1" fill="#d88080"/><rect x="1081.9" y="148" width="6.53" height="1" fill="#c88080"/><rect x="1081.9" y="149" width="6.53" height="1" fill="#ff9090"/><rect x="1081.9" y="150" width="6.53" height="1" fill="#e88888"/><rect x="1081.9" y="151" width="6.53" height="1" fill="#b87878"/><rect x="1081.9" y="152" width="6.53" height="1" fill="#ff9090"/><rect x="1081.9" y="153" width="6.53" height="1" fill="#ffb8d0"/><rect x="1081.9" y="154" width="6.53" height="1" fill="#ffd0ff"/><rect x="1081.9" y="155" width="6.53" height="1" fill="#ffe8ff"/><rect x="1081.9" y="156" width="6.53" height="1" fill="#ffffff"/><rect x="1081.9" y="157" width="6.53" height="1" fill="#ffe0ff"/><rect x="1081.9" y="158" width="6.53" height="1" fill="#ffe8ff"/><rect x="1081.9" y="159" width="6.53" height="1" fill="#fff0ff"/><rect x="1081.9" y="160" width="6.53" height="1" fill="#fff8ff"/><rect x="1081.9" y="161" width="6.53" height="1" fill="#ffe0ff"/><rect x="1081.9" y="162" width="6.53" height="1" fill="#ffd0ff"/><rect x="1081.9" y="163" width="6.53" height="1" fill="#ffe8ff"/><rect x="1081.9" y="164" width="6.53" height="1" fill="#ffc0ff"/><rect x="1081.9" y="165" width="6.53" height="1" fill="#ffb0ff"/><rect x="1081.9" y="166" width="6.53" height="1" fill="#ffb8ff"/><rect x="1081.9" y="167" width="6.53" height="1" fill="#ffa8ff"/><rect x="1081.9" y="168" width="6.53" height="1" fill="#e8b8f8"/><rect x="1081.9" y="169" width="6.53" height="6" fill="#ffffff"/><rect x="1081.9" y="175" width="6.53" height="1" fill="#ffffe0"/><rect x="1081.9" y="176" width="6.53" height="1" fill="#ffffc8"/><rect x="1081.9" y="177" width="6.53" height="1" fill="#e8b0a8"/><rect x="1081.9" y="178" width="6.53" height="1" fill="#d0a8a0"/><rect x="1081.9" y="179" width="6.53" height="1" fill="#98c098"/><rect x="1081.9" y="180" width="6.53" height="1" fill="#b8fff8"/><rect x="1081.9" y="181" width="6.53" height="1" fill="#b8f8ff"/><rect x="1081.9" y="182" width="6.53" height="1" fill="#a8c8e0"/><rect x="1081.9" y="183" width="6.53" height="1" fill="#98b898"/><rect x="1081.9" y="184" width="6.53" height="1" fill="#a8f0b0"/><rect x="1081.9" y="185" width="6.53" height="1" fill="#d0f8f8"/><rect x="1081.9" y="186" width="6.53" height="1" fill="#fff8ff"/><rect x="1081.9" y="187" width="6.53" height="1" fill="#ffe8ff"/><rect x="1081.9" y="188" width="6.53" height="1" fill="#ffd0d0"/><rect x="1081.9" y="189" width="6.53" height="1" fill="#ffd0b8"/><rect x="1081.9" y="190" width="6.53" height="1" fill="#f8f0b0"/><rect x="1081.9" y="191" width="6.53" height="1" fill="#d8f8d0"/><rect x="1081.9" y="192" width="6.53" height="1" fill="#a8c8e0"/><rect x="1081.9" y="193" width="6.53" height="1" fill="#b8f0f0"/><rect x="1081.9" y="194" width="6.53" height="1" fill="#d0ffe8"/><rect x="1081.9" y="195" width="6.53" height="1" fill="#ffffe0"/><rect x="1081.9" y="196" width="6.53" height="1" fill="#ffffd8"/><rect x="1081.9" y="197" width="6.53" height="1" fill="#e0e0a8"/><rect x="1081.9" y="198" width="6.53" height="1" fill="#889880"/><rect x="1081.9" y="199" width="6.53" height="8" fill="#787878"/><rect x="1081.9" y="207" width="6.53" height="1" fill="#90b0c8"/><rect x="1081.9" y="208" width="6.53" height="1" fill="#c0fff8"/><rect x="1081.9" y="209" width="6.53" height="1" fill="#c0ffff"/><rect x="1081.9" y="210" width="6.53" height="1" fill="#b0fff0"/><rect x="1081.9" y="211" width="6.53" height="1" fill="#8888c0"/><rect x="1081.9" y="212" width="6.53" height="1" fill="#8080b0"/><rect x="1081.9" y="213" width="6.53" height="2" fill="#707068"/><rect x="1081.9" y="215" width="6.53" height="1" fill="#d88888"/><rect x="1081.9" y="216" width="6.53" height="1" fill="#ffa098"/><rect x="1081.9" y="217" width="6.53" height="1" fill="#ff9898"/><rect x="1081.9" y="218" width="6.53" height="1" fill="#a07878"/><rect x="1081.9" y="219" width="6.53" height="19" fill="#686868"/><rect x="1081.9" y="238" width="6.53" height="1" fill="#d8c098"/><rect x="1081.9" y="239" width="6.53" height="1" fill="#ffffd0"/><rect x="1081.9" y="240" width="6.53" height="1" fill="#ffffff"/><rect x="1081.9" y="241" width="6.53" height="1" fill="#fff0ff"/><rect x="1081.9" y="242" width="6.53" height="1" fill="#fff8f8"/><rect x="1081.9" y="243" width="6.53" height="1" fill="#ffffe0"/><rect x="1081.9" y="244" width="6.53" height="1" fill="#ffe0a8"/><rect x="1081.9" y="245" width="6.53" height="1" fill="#ff9898"/><rect x="1081.9" y="246" width="6.53" height="1" fill="#ff9090"/><rect x="1081.9" y="247" width="6.53" height="1" fill="#b888a8"/><rect x="1081.9" y="248" width="6.53" height="1" fill="#8078b0"/><rect x="1081.9" y="249" width="6.53" height="1" fill="#a080b8"/><rect x="1081.9" y="250" width="6.53" height="1" fill="#c88098"/><rect x="1081.9" y="251" width="6.53" height="1" fill="#c88080"/><rect x="1081.9" y="252" width="6.53" height="1" fill="#a07070"/><rect x="1081.9" y="253" width="6.53" height="2" fill="#686060"/><rect x="1081.9" y="255" width="6.53" height="1" fill="#789870"/><rect x="1081.9" y="256" width="6.53" height="2" fill="#90e088"/><rect x="1081.9" y="258" width="6.53" height="1" fill="#80a878"/><rect x="1081.9" y="259" width="6.53" height="1" fill="#789070"/><rect x="1081.9" y="260" width="6.53" height="1" fill="#789870"/><rect x="1081.9" y="261" width="6.53" height="1" fill="#90e088"/><rect x="1081.9" y="262" width="6.53" height="2" fill="#a8ffa0"/><rect x="1081.9" y="264" width="6.53" height="1" fill="#a8e090"/><rect x="1081.9" y="265" width="6.53" height="1" fill="#c8b088"/><rect x="1081.9" y="266" width="6.53" height="1" fill="#c8a088"/><rect x="1081.9" y="267" width="6.53" height="1" fill="#fff0a8"/><rect x="1081.9" y="268" width="6.53" height="1" fill="#e0ffa0"/><rect x="1081.9" y="269" width="6.53" height="1" fill="#d8e898"/><rect x="1081.9" y="270" width="6.53" height="1" fill="#90d080"/><rect x="1081.9" y="271" width="6.53" height="1" fill="#88e088"/><rect x="1081.9" y="272" width="6.53" height="1" fill="#80c880"/><rect x="1081.9" y="273" width="6.53" height="1" fill="#709070"/><rect x="1081.9" y="274" width="6.53" height="3" fill="#687868"/><rect x="1081.9" y="277" width="6.53" height="1" fill="#8090a0"/><rect x="1081.9" y="278" width="6.53" height="1" fill="#a8e8ff"/><rect x="1081.9" y="279" width="6.53" height="1" fill="#c0ffff"/><rect x="1081.9" y="280" width="6.53" height="1" fill="#b0ffff"/><rect x="1081.9" y="281" width="6.53" height="1" fill="#98e8c0"/><rect x="1081.9" y="282" width="6.53" height="1" fill="#90d898"/><rect x="1081.9" y="283" width="6.53" height="1" fill="#80b890"/><rect x="1081.9" y="284" width="6.53" height="4" fill="#708080"/><rect x="1081.9" y="288" width="6.53" height="1" fill="#7888a0"/><rect x="1081.9" y="289" width="6.53" height="1" fill="#8898d0"/><rect x="1081.9" y="290" width="6.53" height="1" fill="#9098d8"/><rect x="1081.9" y="291" width="6.53" height="1" fill="#c8d8d0"/><rect x="1081.9" y="292" width="6.53" height="2" fill="#ffffff"/><rect x="1081.9" y="294" width="6.53" height="1" fill="#e0ffff"/><rect x="1081.9" y="295" width="6.53" height="1" fill="#98e8d0"/><rect x="1081.9" y="296" width="6.53" height="1" fill="#88c0b8"/><rect x="1081.9" y="297" width="6.53" height="1" fill="#8088b8"/><rect x="1081.9" y="298" width="6.53" height="1" fill="#90a0f8"/><rect x="1081.9" y="299" width="6.53" height="2" fill="#a8b8ff"/><rect x="1081.9" y="301" width="6.53" height="1" fill="#a0b0ff"/><rect x="1081.9" y="302" width="6.53" height="1" fill="#90a0f8"/><rect x="1081.9" y="303" width="6.53" height="1" fill="#8090c8"/><rect x="1081.9" y="304" width="6.53" height="1" fill="#707888"/><rect x="1081.9" y="305" width="6.53" height="1" fill="#80c098"/><rect x="1081.9" y="306" width="6.53" height="1" fill="#98d8d0"/><rect x="1081.9" y="307" width="6.53" height="1" fill="#98d8e8"/><rect x="1081.9" y="308" width="6.53" height="1" fill="#8090c0"/><rect x="1081.9" y="309" width="6.53" height="1" fill="#707088"/><rect x="1081.9" y="310" width="6.53" height="1" fill="#78a878"/><rect x="1081.9" y="311" width="6.53" height="1" fill="#78b880"/><rect x="1081.9" y="312" width="6.53" height="1" fill="#78b080"/><rect x="1081.9" y="313" width="6.53" height="1" fill="#687068"/><rect x="1081.9" y="319" width="6.53" height="1" fill="#707098"/><rect x="1081.9" y="320" width="6.53" height="2" fill="#7878b8"/><rect x="1081.9" y="322" width="6.53" height="1" fill="#686880"/><rect x="1081.9" y="343" width="6.53" height="1" fill="#7070a0"/><rect x="1081.9" y="344" width="6.53" height="1" fill="#7878b8"/><rect x="1081.9" y="345" width="6.53" height="1" fill="#a080b8"/><rect x="1081.9" y="346" width="6.53" height="1" fill="#c08090"/><rect x="1081.9" y="347" width="6.53" height="1" fill="#b87878"/><rect x="1081.9" y="348" width="6.53" height="1" fill="#886868"/><rect x="1081.9" y="349" width="6.53" height="13" fill="#686060"/><rect x="1081.9" y="362" width="6.53" height="1" fill="#907070"/><rect x="1081.9" y="363" width="6.53" height="2" fill="#b87878"/><rect x="1081.9" y="365" width="6.53" height="1" fill="#886868"/><rect x="1088.4" y="127" width="6.53" height="1" fill="#987070"/><rect x="1088.4" y="128" width="6.53" height="2" fill="#d08080"/><rect x="1088.4" y="130" width="6.53" height="1" fill="#987070"/><rect x="1088.4" y="131" width="6.53" height="2" fill="#806868"/><rect x="1088.4" y="133" width="6.53" height="1" fill="#a87878"/><rect x="1088.4" y="134" width="6.53" height="1" fill="#f08888"/><rect x="1088.4" y="135" width="6.53" height="1" fill="#d88080"/><rect x="1088.4" y="136" width="6.53" height="1" fill="#b07878"/><rect x="1088.4" y="137" width="6.53" height="1" fill="#886868"/><rect x="1088.4" y="138" width="6.53" height="1" fill="#c07878"/><rect x="1088.4" y="139" width="6.53" height="1" fill="#ffa8b0"/><rect x="1088.4" y="140" width="6.53" height="1" fill="#ffc0ff"/><rect x="1088.4" y="141" width="6.53" height="1" fill="#ffc8ff"/><rect x="1088.4" y="142" width="6.53" height="1" fill="#ffd0ff"/><rect x="1088.4" y="143" width="6.53" height="1" fill="#ffe0ff"/><rect x="1088.4" y="144" width="6.53" height="2" fill="#ffd0ff"/><rect x="1088.4" y="146" width="6.53" height="1" fill="#fff0ff"/><rect x="1088.4" y="147" width="6.53" height="1" fill="#ffffff"/><rect x="1088.4" y="148" width="6.53" height="1" fill="#fff0ff"/><rect x="1088.4" y="149" width="6.53" height="1" fill="#ffc8ff"/><rect x="1088.4" y="150" width="6.53" height="2" fill="#ffe0ff"/><rect x="1088.4" y="152" width="6.53" height="1" fill="#e0b0ff"/><rect x="1088.4" y="153" width="6.53" height="1" fill="#ffb0ff"/><rect x="1088.4" y="154" width="6.53" height="1" fill="#ffc0ff"/><rect x="1088.4" y="155" width="6.53" height="1" fill="#d8a0ff"/><rect x="1088.4" y="156" width="6.53" height="1" fill="#f8f0ff"/><rect x="1088.4" y="157" width="6.53" height="5" fill="#ffffff"/><rect x="1088.4" y="162" width="6.53" height="1" fill="#ffffd8"/><rect x="1088.4" y="163" width="6.53" height="1" fill="#e8d0b8"/><rect x="1088.4" y="164" width="6.53" height="1" fill="#98b0a0"/><rect x="1088.4" y="165" width="6.53" height="1" fill="#b8f8d8"/><rect x="1088.4" y="166" width="6.53" height="1" fill="#d0ffff"/><rect x="1088.4" y="167" width="6.53" height="1" fill="#c0f8f8"/><rect x="1088.4" y="168" width="6.53" height="1" fill="#c0f8f0"/><rect x="1088.4" y="169" width="6.53" height="3" fill="#ffffff"/><rect x="1088.4" y="172" width="6.53" height="1" fill="#ffd8d0"/><rect x="1088.4" y="173" width="6.53" height="1" fill="#a0e0a0"/><rect x="1088.4" y="174" width="6.53" height="1" fill="#a8f0b0"/><rect x="1088.4" y="175" width="6.53" height="1" fill="#c0fff0"/><rect x="1088.4" y="176" width="6.53" height="1" fill="#d0ffff"/><rect x="1088.4" y="177" width="6.53" height="1" fill="#ffffff"/><rect x="1088.4" y="178" width="6.53" height="1" fill="#fffff0"/><rect x="1088.4" y="179" width="6.53" height="1" fill="#ffffc8"/><rect x="1088.4" y="180" width="6.53" height="1" fill="#88b888"/><rect x="1088.4" y="181" width="6.53" height="6" fill="#788078"/><rect x="1088.4" y="187" width="6.53" height="1" fill="#90a8c0"/><rect x="1088.4" y="188" width="6.53" height="1" fill="#c0ffff"/><rect x="1088.4" y="189" width="6.53" height="1" fill="#c8ffff"/><rect x="1088.4" y="190" width="6.53" height="1" fill="#c0ffff"/><rect x="1088.4" y="191" width="6.53" height="1" fill="#9088c8"/><rect x="1088.4" y="192" width="6.53" height="1" fill="#8888b8"/><rect x="1088.4" y="193" width="6.53" height="3" fill="#ffa0a0"/><rect x="1088.4" y="196" width="6.53" height="1" fill="#707070"/><rect x="1088.4" y="197" width="6.53" height="14" fill="#687070"/><rect x="1088.4" y="211" width="6.53" height="1" fill="#a08080"/><rect x="1088.4" y="212" width="6.53" height="1" fill="#ffb8b8"/><rect x="1088.4" y="213" width="6.53" height="1" fill="#ffe8d8"/><rect x="1088.4" y="214" width="6.53" height="1" fill="#ffffe8"/><rect x="1088.4" y="215" width="6.53" height="1" fill="#ffffd8"/><rect x="1088.4" y="216" width="6.53" height="2" fill="#ffffff"/><rect x="1088.4" y="218" width="6.53" height="1" fill="#fffff0"/><rect x="1088.4" y="219" width="6.53" height="1" fill="#c0c890"/><rect x="1088.4" y="220" width="6.53" height="1" fill="#887870"/><rect x="1088.4" y="221" width="6.53" height="1" fill="#c08080"/><rect x="1088.4" y="222" width="6.53" height="1" fill="#e090b8"/><rect x="1088.4" y="223" width="6.53" height="1" fill="#c090c8"/><rect x="1088.4" y="224" width="6.53" height="1" fill="#8078b0"/><rect x="1088.4" y="225" width="6.53" height="1" fill="#706880"/><rect x="1088.4" y="226" width="6.53" height="1" fill="#686060"/><rect x="1088.4" y="227" width="6.53" height="1" fill="#686860"/><rect x="1088.4" y="228" width="6.53" height="1" fill="#80b078"/><rect x="1088.4" y="229" width="6.53" height="1" fill="#90e888"/><rect x="1088.4" y="230" width="6.53" height="1" fill="#90e088"/><rect x="1088.4" y="231" width="6.53" height="1" fill="#789870"/><rect x="1088.4" y="232" width="6.53" height="1" fill="#80b078"/><rect x="1088.4" y="233" width="6.53" height="1" fill="#e0ffa8"/><rect x="1088.4" y="234" width="6.53" height="1" fill="#ffffc8"/><rect x="1088.4" y="235" width="6.53" height="1" fill="#f0ffb0"/><rect x="1088.4" y="236" width="6.53" height="1" fill="#90b880"/><rect x="1088.4" y="237" width="6.53" height="1" fill="#b8a880"/><rect x="1088.4" y="238" width="6.53" height="1" fill="#d0d090"/><rect x="1088.4" y="239" width="6.53" height="1" fill="#e0ffa0"/><rect x="1088.4" y="240" width="6.53" height="1" fill="#a0ff98"/><rect x="1088.4" y="241" width="6.53" height="1" fill="#98ff90"/><rect x="1088.4" y="242" width="6.53" height="1" fill="#88d080"/><rect x="1088.4" y="243" width="6.53" height="1" fill="#709070"/><rect x="1088.4" y="244" width="6.53" height="1" fill="#809098"/><rect x="1088.4" y="245" width="6.53" height="1" fill="#98a8ff"/><rect x="1088.4" y="246" width="6.53" height="1" fill="#a8b8ff"/><rect x="1088.4" y="247" width="6.53" height="1" fill="#98a8f8"/><rect x="1088.4" y="248" width="6.53" height="1" fill="#8090a0"/><rect x="1088.4" y="249" width="6.53" height="1" fill="#a0ffb0"/><rect x="1088.4" y="250" width="6.53" height="1" fill="#b0ffb8"/><rect x="1088.4" y="251" width="6.53" height="1" fill="#a0ffb0"/><rect x="1088.4" y="252" width="6.53" height="1" fill="#789888"/><rect x="1088.4" y="253" width="6.53" height="1" fill="#788090"/><rect x="1088.4" y="254" width="6.53" height="1" fill="#b0a0e0"/><rect x="1088.4" y="255" width="6.53" height="1" fill="#e0b0f8"/><rect x="1088.4" y="256" width="6.53" height="1" fill="#e0b0f0"/><rect x="1088.4" y="257" width="6.53" height="1" fill="#d0b8ff"/><rect x="1088.4" y="258" width="6.53" height="1" fill="#b0c0ff"/><rect x="1088.4" y="259" width="6.53" height="1" fill="#a8b8ff"/><rect x="1088.4" y="260" width="6.53" height="1" fill="#8898c0"/><rect x="1088.4" y="261" width="6.53" height="1" fill="#a0e0d8"/><rect x="1088.4" y="262" width="6.53" height="1" fill="#b0ffff"/><rect x="1088.4" y="263" width="6.53" height="1" fill="#b8f0ff"/><rect x="1088.4" y="264" width="6.53" height="1" fill="#b0c0ff"/><rect x="1088.4" y="265" width="6.53" height="1" fill="#b8d0ff"/><rect x="1088.4" y="266" width="6.53" height="1" fill="#b0f8ff"/><rect x="1088.4" y="267" width="6.53" height="1" fill="#98e0c8"/><rect x="1088.4" y="268" width="6.53" height="1" fill="#80b898"/><rect x="1088.4" y="269" width="6.53" height="1" fill="#788098"/><rect x="1088.4" y="270" width="6.53" height="2" fill="#8898d8"/><rect x="1088.4" y="272" width="6.53" height="1" fill="#8088b0"/><rect x="1088.4" y="273" width="6.53" height="2" fill="#687868"/><rect x="1088.4" y="275" width="6.53" height="1" fill="#78a078"/><rect x="1088.4" y="276" width="6.53" height="1" fill="#80c888"/><rect x="1088.4" y="277" width="6.53" height="1" fill="#80b880"/><rect x="1088.4" y="278" width="6.53" height="1" fill="#709078"/><rect x="1088.4" y="279" width="6.53" height="2" fill="#686868"/><rect x="1088.4" y="281" width="6.53" height="1" fill="#78a880"/><rect x="1088.4" y="282" width="6.53" height="1" fill="#80b880"/><rect x="1088.4" y="283" width="6.53" height="1" fill="#80b080"/><rect x="1088.4" y="284" width="6.53" height="1" fill="#707888"/><rect x="1088.4" y="285" width="6.53" height="1" fill="#8078b8"/><rect x="1088.4" y="286" width="6.53" height="1" fill="#8078c0"/><rect x="1088.4" y="287" width="6.53" height="1" fill="#707098"/><rect x="1088.4" y="288" width="6.53" height="4" fill="#606068"/><rect x="1088.4" y="292" width="6.53" height="1" fill="#a07078"/><rect x="1088.4" y="293" width="6.53" height="1" fill="#b87880"/><rect x="1088.4" y="294" width="6.53" height="1" fill="#b07878"/><rect x="1088.4" y="295" width="6.53" height="1" fill="#706868"/><rect x="1088.4" y="309" width="6.53" height="1" fill="#686890"/><rect x="1088.4" y="310" width="6.53" height="2" fill="#7878b8"/><rect x="1088.4" y="312" width="6.53" height="1" fill="#686888"/><rect x="1088.4" y="362" width="6.53" height="1" fill="#886868"/><rect x="1088.4" y="363" width="6.53" height="2" fill="#b07878"/><rect x="1088.4" y="365" width="6.53" height="1" fill="#886868"/><rect x="1094.9" y="116" width="6.53" height="1" fill="#886868"/><rect x="1094.9" y="117" width="6.53" height="2" fill="#d08080"/><rect x="1094.9" y="119" width="6.53" height="1" fill="#a07070"/><rect x="1094.9" y="120" width="6.53" height="3" fill="#806868"/><rect x="1094.9" y="123" width="6.53" height="1" fill="#886868"/><rect x="1094.9" y="124" width="6.53" height="1" fill="#d08080"/><rect x="1094.9" y="125" width="6.53" height="1" fill="#e88888"/><rect x="1094.9" y="126" width="6.53" height="1" fill="#d08080"/><rect x="1094.9" y="127" width="6.53" height="1" fill="#886868"/><rect x="1094.9" y="128" width="6.53" height="1" fill="#887078"/><rect x="1094.9" y="129" width="6.53" height="1" fill="#e898d0"/><rect x="1094.9" y="130" width="6.53" height="1" fill="#ffc8ff"/><rect x="1094.9" y="131" width="6.53" height="1" fill="#ffd0ff"/><rect x="1094.9" y="132" width="6.53" height="1" fill="#ffb8ff"/><rect x="1094.9" y="133" width="6.53" height="2" fill="#ffd8ff"/><rect x="1094.9" y="135" width="6.53" height="1" fill="#ffd0ff"/><rect x="1094.9" y="136" width="6.53" height="1" fill="#ffd8ff"/><rect x="1094.9" y="137" width="6.53" height="2" fill="#ffffff"/><rect x="1094.9" y="139" width="6.53" height="2" fill="#ffe8ff"/><rect x="1094.9" y="141" width="6.53" height="1" fill="#ffe0ff"/><rect x="1094.9" y="142" width="6.53" height="1" fill="#ffd8ff"/><rect x="1094.9" y="143" width="6.53" height="1" fill="#ffc8ff"/><rect x="1094.9" y="144" width="6.53" height="1" fill="#ffb8ff"/><rect x="1094.9" y="145" width="6.53" height="1" fill="#ffc0ff"/><rect x="1094.9" y="146" width="6.53" height="6" fill="#ffffff"/><rect x="1094.9" y="152" width="6.53" height="1" fill="#e0e8c0"/><rect x="1094.9" y="153" width="6.53" height="1" fill="#b8f0c0"/><rect x="1094.9" y="154" width="6.53" height="1" fill="#d8ffff"/><rect x="1094.9" y="155" width="6.53" height="1" fill="#f8ffff"/><rect x="1094.9" y="156" width="6.53" height="3" fill="#ffffff"/><rect x="1094.9" y="159" width="6.53" height="1" fill="#ffe8c8"/><rect x="1094.9" y="160" width="6.53" height="1" fill="#b0f0a8"/><rect x="1094.9" y="161" width="6.53" height="1" fill="#c8ffe8"/><rect x="1094.9" y="162" width="6.53" height="3" fill="#ffffff"/><rect x="1094.9" y="165" width="6.53" height="1" fill="#d0f8b0"/><rect x="1094.9" y="166" width="6.53" height="1" fill="#88a888"/><rect x="1094.9" y="167" width="6.53" height="3" fill="#808880"/><rect x="1094.9" y="170" width="6.53" height="1" fill="#808888"/><rect x="1094.9" y="171" width="6.53" height="1" fill="#b0e8e8"/><rect x="1094.9" y="172" width="6.53" height="1" fill="#c8ffff"/><rect x="1094.9" y="173" width="6.53" height="1" fill="#d8ffff"/><rect x="1094.9" y="174" width="6.53" height="1" fill="#e8f8ff"/><rect x="1094.9" y="175" width="6.53" height="1" fill="#ffb8f0"/><rect x="1094.9" y="176" width="6.53" height="1" fill="#ffb0c8"/><rect x="1094.9" y="177" width="6.53" height="1" fill="#d89090"/><rect x="1094.9" y="178" width="6.53" height="1" fill="#807878"/><rect x="1094.9" y="179" width="6.53" height="10" fill="#707070"/><rect x="1094.9" y="189" width="6.53" height="1" fill="#787070"/><rect x="1094.9" y="190" width="6.53" height="1" fill="#ffb0b0"/><rect x="1094.9" y="191" width="6.53" height="1" fill="#ffd8d8"/><rect x="1094.9" y="192" width="6.53" height="1" fill="#ffffff"/><rect x="1094.9" y="193" width="6.53" height="1" fill="#ffffe8"/><rect x="1094.9" y="194" width="6.53" height="1" fill="#ffffff"/><rect x="1094.9" y="195" width="6.53" height="1" fill="#fff0ff"/><rect x="1094.9" y="196" width="6.53" height="1" fill="#e8e8e8"/><rect x="1094.9" y="197" width="6.53" height="1" fill="#d8d8b8"/><rect x="1094.9" y="198" width="6.53" height="1" fill="#e8c0a0"/><rect x="1094.9" y="199" width="6.53" height="1" fill="#c08088"/><rect x="1094.9" y="200" width="6.53" height="1" fill="#9878a8"/><rect x="1094.9" y="201" width="6.53" height="1" fill="#8880c0"/><rect x="1094.9" y="202" width="6.53" height="1" fill="#8880b8"/><rect x="1094.9" y="203" width="6.53" height="1" fill="#787080"/><rect x="1094.9" y="204" width="6.53" height="1" fill="#88b880"/><rect x="1094.9" y="205" width="6.53" height="2" fill="#a0f890"/><rect x="1094.9" y="207" width="6.53" height="1" fill="#c8b890"/><rect x="1094.9" y="208" width="6.53" height="1" fill="#f8ffb0"/><rect x="1094.9" y="209" width="6.53" height="1" fill="#ffffc8"/><rect x="1094.9" y="210" width="6.53" height="1" fill="#c0ffb0"/><rect x="1094.9" y="211" width="6.53" height="1" fill="#98d888"/><rect x="1094.9" y="212" width="6.53" height="1" fill="#c8b090"/><rect x="1094.9" y="213" width="6.53" height="1" fill="#d8e8a0"/><rect x="1094.9" y="214" width="6.53" height="1" fill="#f0ffb8"/><rect x="1094.9" y="215" width="6.53" height="1" fill="#a8ffa8"/><rect x="1094.9" y="216" width="6.53" height="1" fill="#90f090"/><rect x="1094.9" y="217" width="6.53" height="1" fill="#98b8d8"/><rect x="1094.9" y="218" width="6.53" height="1" fill="#a8b8ff"/><rect x="1094.9" y="219" width="6.53" height="1" fill="#a8c0ff"/><rect x="1094.9" y="220" width="6.53" height="1" fill="#90a0d0"/><rect x="1094.9" y="221" width="6.53" height="1" fill="#809890"/><rect x="1094.9" y="222" width="6.53" height="1" fill="#90e0a8"/><rect x="1094.9" y="223" width="6.53" height="1" fill="#a8ffc0"/><rect x="1094.9" y="224" width="6.53" height="1" fill="#c8ffd0"/><rect x="1094.9" y="225" width="6.53" height="1" fill="#f8ffff"/><rect x="1094.9" y="226" width="6.53" height="1" fill="#f0d0ff"/><rect x="1094.9" y="227" width="6.53" height="1" fill="#c8b8ff"/><rect x="1094.9" y="228" width="6.53" height="1" fill="#a8b8ff"/><rect x="1094.9" y="229" width="6.53" height="1" fill="#b8c8ff"/><rect x="1094.9" y="230" width="6.53" height="1" fill="#a8b8ff"/><rect x="1094.9" y="231" width="6.53" height="1" fill="#90a0d0"/><rect x="1094.9" y="232" width="6.53" height="1" fill="#b8ffff"/><rect x="1094.9" y="233" width="6.53" height="1" fill="#c8ffff"/><rect x="1094.9" y="234" width="6.53" height="1" fill="#d8ffff"/><rect x="1094.9" y="235" width="6.53" height="1" fill="#b8c0ff"/><rect x="1094.9" y="236" width="6.53" height="1" fill="#a0a8ff"/><rect x="1094.9" y="237" width="6.53" height="1" fill="#788898"/><rect x="1094.9" y="238" width="6.53" height="1" fill="#a0e0e0"/><rect x="1094.9" y="239" width="6.53" height="1" fill="#a8f8ff"/><rect x="1094.9" y="240" width="6.53" height="1" fill="#a0e0d8"/><rect x="1094.9" y="241" width="6.53" height="1" fill="#788090"/><rect x="1094.9" y="242" width="6.53" height="1" fill="#687870"/><rect x="1094.9" y="243" width="6.53" height="1" fill="#80c080"/><rect x="1094.9" y="244" width="6.53" height="1" fill="#80c888"/><rect x="1094.9" y="245" width="6.53" height="1" fill="#80b880"/><rect x="1094.9" y="246" width="6.53" height="1" fill="#687870"/><rect x="1094.9" y="247" width="6.53" height="4" fill="#686868"/><rect x="1094.9" y="251" width="6.53" height="1" fill="#7880a8"/><rect x="1094.9" y="252" width="6.53" height="1" fill="#8088c0"/><rect x="1094.9" y="253" width="6.53" height="1" fill="#8080b8"/><rect x="1094.9" y="254" width="6.53" height="1" fill="#88b090"/><rect x="1094.9" y="255" width="6.53" height="1" fill="#d0d098"/><rect x="1094.9" y="256" width="6.53" height="1" fill="#d0c898"/><rect x="1094.9" y="257" width="6.53" height="1" fill="#b08880"/><rect x="1094.9" y="277" width="6.53" height="1" fill="#707098"/><rect x="1094.9" y="278" width="6.53" height="1" fill="#7878b8"/><rect x="1094.9" y="279" width="6.53" height="1" fill="#7878b0"/><rect x="1094.9" y="280" width="6.53" height="1" fill="#686878"/><rect x="1094.9" y="306" width="6.53" height="1" fill="#a87878"/><rect x="1094.9" y="307" width="6.53" height="2" fill="#b07878"/><rect x="1101.4" y="110" width="6.53" height="1" fill="#886868"/><rect x="1101.4" y="111" width="6.53" height="2" fill="#c88080"/><rect x="1101.4" y="113" width="6.53" height="1" fill="#a07070"/><rect x="1101.4" y="114" width="6.53" height="4" fill="#786868"/><rect x="1101.4" y="118" width="6.53" height="1" fill="#b87878"/><rect x="1101.4" y="119" width="6.53" height="1" fill="#e88888"/><rect x="1101.4" y="120" width="6.53" height="1" fill="#d88080"/><rect x="1101.4" y="121" width="6.53" height="1" fill="#a07888"/><rect x="1101.4" y="122" width="6.53" height="1" fill="#a080b8"/><rect x="1101.4" y="123" width="6.53" height="1" fill="#f0a8ff"/><rect x="1101.4" y="124" width="6.53" height="2" fill="#ffc0ff"/><rect x="1101.4" y="126" width="6.53" height="1" fill="#ffb8ff"/><rect x="1101.4" y="127" width="6.53" height="1" fill="#ffd0ff"/><rect x="1101.4" y="128" width="6.53" height="2" fill="#ffd8ff"/><rect x="1101.4" y="130" width="6.53" height="1" fill="#fff0ff"/><rect x="1101.4" y="131" width="6.53" height="2" fill="#ffffff"/><rect x="1101.4" y="133" width="6.53" height="1" fill="#fff8ff"/><rect x="1101.4" y="134" width="6.53" height="2" fill="#fff0ff"/><rect x="1101.4" y="136" width="6.53" height="1" fill="#ffe8ff"/><rect x="1101.4" y="137" width="6.53" height="1" fill="#ffe0ff"/><rect x="1101.4" y="138" width="6.53" height="6" fill="#ffffff"/><rect x="1101.4" y="144" width="6.53" height="1" fill="#d0ffe8"/><rect x="1101.4" y="145" width="6.53" height="4" fill="#ffffff"/><rect x="1101.4" y="149" width="6.53" height="1" fill="#ffffe0"/><rect x="1101.4" y="150" width="6.53" height="1" fill="#d0ffe0"/><rect x="1101.4" y="151" width="6.53" height="3" fill="#ffffff"/><rect x="1101.4" y="154" width="6.53" height="1" fill="#c8f8b0"/><rect x="1101.4" y="155" width="6.53" height="1" fill="#909890"/><rect x="1101.4" y="156" width="6.53" height="2" fill="#889088"/><rect x="1101.4" y="158" width="6.53" height="1" fill="#b8f0f0"/><rect x="1101.4" y="159" width="6.53" height="1" fill="#d8ffff"/><rect x="1101.4" y="160" width="6.53" height="2" fill="#ffffff"/><rect x="1101.4" y="162" width="6.53" height="1" fill="#ffc0f8"/><rect x="1101.4" y="163" width="6.53" height="1" fill="#c890a0"/><rect x="1101.4" y="164" width="6.53" height="1" fill="#908080"/><rect x="1101.4" y="165" width="6.53" height="8" fill="#787878"/><rect x="1101.4" y="173" width="6.53" height="1" fill="#ffc0b8"/><rect x="1101.4" y="174" width="6.53" height="1" fill="#ffe0e0"/><rect x="1101.4" y="175" width="6.53" height="1" fill="#ffffff"/><rect x="1101.4" y="176" width="6.53" height="1" fill="#fffff0"/><rect x="1101.4" y="177" width="6.53" height="2" fill="#ffffff"/><rect x="1101.4" y="179" width="6.53" height="1" fill="#fff0e0"/><rect x="1101.4" y="180" width="6.53" height="1" fill="#f8d8a8"/><rect x="1101.4" y="181" width="6.53" height="1" fill="#b07890"/><rect x="1101.4" y="182" width="6.53" height="2" fill="#9080c0"/><rect x="1101.4" y="184" width="6.53" height="1" fill="#98a8b8"/><rect x="1101.4" y="185" width="6.53" height="1" fill="#a8ff98"/><rect x="1101.4" y="186" width="6.53" height="1" fill="#d8ffa8"/><rect x="1101.4" y="187" width="6.53" height="1" fill="#f8ffa8"/><rect x="1101.4" y="188" width="6.53" height="1" fill="#ffffc8"/><rect x="1101.4" y="189" width="6.53" height="1" fill="#f0ffd0"/><rect x="1101.4" y="190" width="6.53" height="1" fill="#d8ffb0"/><rect x="1101.4" y="191" width="6.53" height="1" fill="#d8c898"/><rect x="1101.4" y="192" width="6.53" height="1" fill="#f0ffb0"/><rect x="1101.4" y="193" width="6.53" height="1" fill="#d8ffb8"/><rect x="1101.4" y="194" width="6.53" height="1" fill="#c0ffd8"/><rect x="1101.4" y="195" width="6.53" height="1" fill="#b8f8ff"/><rect x="1101.4" y="196" width="6.53" height="1" fill="#b0c8ff"/><rect x="1101.4" y="197" width="6.53" height="1" fill="#a8b8ff"/><rect x="1101.4" y="198" width="6.53" height="1" fill="#88a8a8"/><rect x="1101.4" y="199" width="6.53" height="1" fill="#98e8b0"/><rect x="1101.4" y="200" width="6.53" height="1" fill="#e8ffe0"/><rect x="1101.4" y="201" width="6.53" height="2" fill="#ffffff"/><rect x="1101.4" y="203" width="6.53" height="1" fill="#d8f8ff"/><rect x="1101.4" y="204" width="6.53" height="1" fill="#c8d8ff"/><rect x="1101.4" y="205" width="6.53" height="1" fill="#c0d0ff"/><rect x="1101.4" y="206" width="6.53" height="1" fill="#a0b0ff"/><rect x="1101.4" y="207" width="6.53" height="1" fill="#c0ffff"/><rect x="1101.4" y="208" width="6.53" height="1" fill="#f0ffff"/><rect x="1101.4" y="209" width="6.53" height="1" fill="#e0ffff"/><rect x="1101.4" y="210" width="6.53" height="1" fill="#b0b8ff"/><rect x="1101.4" y="211" width="6.53" height="1" fill="#8898d0"/><rect x="1101.4" y="212" width="6.53" height="1" fill="#90a0f0"/><rect x="1101.4" y="213" width="6.53" height="1" fill="#a0c0f8"/><rect x="1101.4" y="214" width="6.53" height="1" fill="#a0e8d8"/><rect x="1101.4" y="215" width="6.53" height="1" fill="#88d890"/><rect x="1101.4" y="216" width="6.53" height="1" fill="#90f098"/><rect x="1101.4" y="217" width="6.53" height="1" fill="#88d088"/><rect x="1101.4" y="218" width="6.53" height="1" fill="#80c088"/><rect x="1101.4" y="219" width="6.53" height="1" fill="#707870"/><rect x="1101.4" y="220" width="6.53" height="3" fill="#687070"/><rect x="1101.4" y="223" width="6.53" height="1" fill="#8080b0"/><rect x="1101.4" y="224" width="6.53" height="1" fill="#8888c8"/><rect x="1101.4" y="225" width="6.53" height="1" fill="#d0a0d0"/><rect x="1101.4" y="226" width="6.53" height="1" fill="#c08890"/><rect x="1101.4" y="227" width="6.53" height="1" fill="#b8a088"/><rect x="1101.4" y="228" width="6.53" height="2" fill="#78b880"/><rect x="1101.4" y="230" width="6.53" height="1" fill="#709070"/><rect x="1101.4" y="245" width="6.53" height="1" fill="#686878"/><rect x="1101.4" y="246" width="6.53" height="2" fill="#7878b8"/><rect x="1101.4" y="248" width="6.53" height="1" fill="#707098"/><rect x="1101.4" y="266" width="6.53" height="1" fill="#a07070"/><rect x="1101.4" y="267" width="6.53" height="2" fill="#b07878"/><rect x="1101.4" y="269" width="6.53" height="1" fill="#706060"/><rect x="1107.9" y="107" width="6.53" height="1" fill="#886868"/><rect x="1107.9" y="108" width="6.53" height="2" fill="#d08080"/><rect x="1107.9" y="110" width="6.53" height="1" fill="#a87070"/><rect x="1107.9" y="111" width="6.53" height="3" fill="#806868"/><rect x="1107.9" y="114" width="6.53" height="1" fill="#886868"/><rect x="1107.9" y="115" width="6.53" height="1" fill="#d08080"/><rect x="1107.9" y="116" width="6.53" height="1" fill="#f08888"/><rect x="1107.9" y="117" width="6.53" height="1" fill="#e898c8"/><rect x="1107.9" y="118" width="6.53" height="1" fill="#b090f0"/><rect x="1107.9" y="119" width="6.53" height="1" fill="#e8a8ff"/><rect x="1107.9" y="120" width="6.53" height="1" fill="#ffb0d8"/><rect x="1107.9" y="121" width="6.53" height="1" fill="#ffc8ff"/><rect x="1107.9" y="122" width="6.53" height="1" fill="#ffd8ff"/><rect x="1107.9" y="123" width="6.53" height="1" fill="#ffe8ff"/><rect x="1107.9" y="124" width="6.53" height="1" fill="#ffe0ff"/><rect x="1107.9" y="125" width="6.53" height="20" fill="#ffffff"/><rect x="1107.9" y="145" width="6.53" height="1" fill="#f0ffd0"/><rect x="1107.9" y="146" width="6.53" height="1" fill="#98b0a0"/><rect x="1107.9" y="147" width="6.53" height="1" fill="#98a8a0"/><rect x="1107.9" y="148" width="6.53" height="1" fill="#d0ffff"/><rect x="1107.9" y="149" width="6.53" height="3" fill="#ffffff"/><rect x="1107.9" y="152" width="6.53" height="1" fill="#e0a8c8"/><rect x="1107.9" y="153" width="6.53" height="1" fill="#a08888"/><rect x="1107.9" y="154" width="6.53" height="5" fill="#808080"/><rect x="1107.9" y="159" width="6.53" height="1" fill="#b89090"/><rect x="1107.9" y="160" width="6.53" height="1" fill="#ffd8d8"/><rect x="1107.9" y="161" width="6.53" height="4" fill="#ffffff"/><rect x="1107.9" y="165" width="6.53" height="1" fill="#fffff0"/><rect x="1107.9" y="166" width="6.53" height="1" fill="#e8c8a8"/><rect x="1107.9" y="167" width="6.53" height="1" fill="#a088c8"/><rect x="1107.9" y="168" width="6.53" height="1" fill="#a0a0d0"/><rect x="1107.9" y="169" width="6.53" height="1" fill="#a8d0c8"/><rect x="1107.9" y="170" width="6.53" height="1" fill="#f8ffb8"/><rect x="1107.9" y="171" width="6.53" height="1" fill="#ffffd0"/><rect x="1107.9" y="172" width="6.53" height="1" fill="#ffffe0"/><rect x="1107.9" y="173" width="6.53" height="1" fill="#ffffd8"/><rect x="1107.9" y="174" width="6.53" height="1" fill="#f8ffb8"/><rect x="1107.9" y="175" width="6.53" height="1" fill="#ffffc8"/><rect x="1107.9" y="176" width="6.53" height="1" fill="#f0fff0"/><rect x="1107.9" y="177" width="6.53" height="1" fill="#d8ffff"/><rect x="1107.9" y="178" width="6.53" height="1" fill="#c0f0ff"/><rect x="1107.9" y="179" width="6.53" height="1" fill="#b0d0ff"/><rect x="1107.9" y="180" width="6.53" height="1" fill="#a8f0c8"/><rect x="1107.9" y="181" width="6.53" height="3" fill="#ffffff"/><rect x="1107.9" y="184" width="6.53" height="1" fill="#d8ffff"/><rect x="1107.9" y="185" width="6.53" height="1" fill="#d0e0ff"/><rect x="1107.9" y="186" width="6.53" height="1" fill="#d0f8ff"/><rect x="1107.9" y="187" width="6.53" height="1" fill="#f0ffff"/><rect x="1107.9" y="188" width="6.53" height="1" fill="#ffffff"/><rect x="1107.9" y="189" width="6.53" height="1" fill="#d0ffff"/><rect x="1107.9" y="190" width="6.53" height="1" fill="#b0c0ff"/><rect x="1107.9" y="191" width="6.53" height="1" fill="#a0b0ff"/><rect x="1107.9" y="192" width="6.53" height="1" fill="#98c0d0"/><rect x="1107.9" y="193" width="6.53" height="1" fill="#98f0b8"/><rect x="1107.9" y="194" width="6.53" height="1" fill="#a8ffa8"/><rect x="1107.9" y="195" width="6.53" height="1" fill="#98ffa0"/><rect x="1107.9" y="196" width="6.53" height="1" fill="#80b888"/><rect x="1107.9" y="197" width="6.53" height="2" fill="#707070"/><rect x="1107.9" y="199" width="6.53" height="1" fill="#787888"/><rect x="1107.9" y="200" width="6.53" height="1" fill="#a890c8"/><rect x="1107.9" y="201" width="6.53" height="1" fill="#d8a0e0"/><rect x="1107.9" y="202" width="6.53" height="1" fill="#d098b8"/><rect x="1107.9" y="203" width="6.53" height="1" fill="#987878"/><rect x="1107.9" y="204" width="6.53" height="1" fill="#789878"/><rect x="1107.9" y="205" width="6.53" height="1" fill="#80c080"/><rect x="1107.9" y="206" width="6.53" height="1" fill="#80b080"/><rect x="1107.9" y="207" width="6.53" height="1" fill="#708870"/><rect x="1107.9" y="208" width="6.53" height="10" fill="#686068"/><rect x="1107.9" y="218" width="6.53" height="1" fill="#686870"/><rect x="1107.9" y="219" width="6.53" height="2" fill="#8078b8"/><rect x="1107.9" y="221" width="6.53" height="1" fill="#7878a8"/><rect x="1107.9" y="235" width="6.53" height="1" fill="#a87070"/><rect x="1107.9" y="236" width="6.53" height="2" fill="#b07878"/><rect x="1107.9" y="238" width="6.53" height="1" fill="#686060"/><rect x="1114.3" y="106" width="6.53" height="1" fill="#a07070"/><rect x="1114.3" y="107" width="6.53" height="2" fill="#d08080"/><rect x="1114.3" y="109" width="6.53" height="1" fill="#907070"/><rect x="1114.3" y="110" width="6.53" height="2" fill="#806868"/><rect x="1114.3" y="112" width="6.53" height="1" fill="#907070"/><rect x="1114.3" y="113" width="6.53" height="1" fill="#d08080"/><rect x="1114.3" y="114" width="6.53" height="1" fill="#ffa0d0"/><rect x="1114.3" y="115" width="6.53" height="1" fill="#f8a8ff"/><rect x="1114.3" y="116" width="6.53" height="1" fill="#e0a0ff"/><rect x="1114.3" y="117" width="6.53" height="1" fill="#ffa8d8"/><rect x="1114.3" y="118" width="6.53" height="1" fill="#ffd8ff"/><rect x="1114.3" y="119" width="6.53" height="1" fill="#fff0ff"/><rect x="1114.3" y="120" width="6.53" height="1" fill="#fff8ff"/><rect x="1114.3" y="121" width="6.53" height="17" fill="#ffffff"/><rect x="1114.3" y="138" width="6.53" height="1" fill="#fffff8"/><rect x="1114.3" y="139" width="6.53" height="1" fill="#a8c0b8"/><rect x="1114.3" y="140" width="6.53" height="3" fill="#ffffff"/><rect x="1114.3" y="143" width="6.53" height="1" fill="#fff8ff"/><rect x="1114.3" y="144" width="6.53" height="1" fill="#d8a0b8"/><rect x="1114.3" y="145" width="6.53" height="4" fill="#888888"/><rect x="1114.3" y="149" width="6.53" height="1" fill="#ffc0c0"/><rect x="1114.3" y="150" width="6.53" height="4" fill="#ffffff"/><rect x="1114.3" y="154" width="6.53" height="1" fill="#fffff8"/><rect x="1114.3" y="155" width="6.53" height="1" fill="#e0c8e8"/><rect x="1114.3" y="156" width="6.53" height="1" fill="#b0c0e0"/><rect x="1114.3" y="157" width="6.53" height="1" fill="#ffffff"/><rect x="1114.3" y="158" width="6.53" height="1" fill="#ffffe0"/><rect x="1114.3" y="159" width="6.53" height="1" fill="#ffffe8"/><rect x="1114.3" y="160" width="6.53" height="1" fill="#ffffff"/><rect x="1114.3" y="161" width="6.53" height="1" fill="#ffffe0"/><rect x="1114.3" y="162" width="6.53" height="1" fill="#ffffff"/><rect x="1114.3" y="163" width="6.53" height="1" fill="#e8ffff"/><rect x="1114.3" y="164" width="6.53" height="1" fill="#e0ffff"/><rect x="1114.3" y="165" width="6.53" height="1" fill="#d8ffff"/><rect x="1114.3" y="166" width="6.53" height="7" fill="#ffffff"/><rect x="1114.3" y="173" width="6.53" height="1" fill="#e0ffff"/><rect x="1114.3" y="174" width="6.53" height="1" fill="#b0d0ff"/><rect x="1114.3" y="175" width="6.53" height="1" fill="#a0e0e0"/><rect x="1114.3" y="176" width="6.53" height="1" fill="#b8ffd0"/><rect x="1114.3" y="177" width="6.53" height="1" fill="#a8ffb0"/><rect x="1114.3" y="178" width="6.53" height="1" fill="#98f098"/><rect x="1114.3" y="179" width="6.53" height="1" fill="#788078"/><rect x="1114.3" y="180" width="6.53" height="1" fill="#788088"/><rect x="1114.3" y="181" width="6.53" height="1" fill="#c8a0d8"/><rect x="1114.3" y="182" width="6.53" height="1" fill="#e0b0e8"/><rect x="1114.3" y="183" width="6.53" height="1" fill="#d0a0c0"/><rect x="1114.3" y="184" width="6.53" height="1" fill="#808078"/><rect x="1114.3" y="185" width="6.53" height="1" fill="#80c088"/><rect x="1114.3" y="186" width="6.53" height="1" fill="#80c888"/><rect x="1114.3" y="187" width="6.53" height="1" fill="#80b080"/><rect x="1114.3" y="188" width="6.53" height="1" fill="#686868"/><rect x="1114.3" y="189" width="6.53" height="7" fill="#686068"/><rect x="1114.3" y="196" width="6.53" height="1" fill="#787098"/><rect x="1114.3" y="197" width="6.53" height="1" fill="#8078b8"/><rect x="1114.3" y="198" width="6.53" height="1" fill="#7878b0"/><rect x="1114.3" y="199" width="6.53" height="1" fill="#706880"/><rect x="1114.3" y="209" width="6.53" height="1" fill="#a87070"/><rect x="1114.3" y="210" width="6.53" height="2" fill="#b07878"/><rect x="1114.3" y="212" width="6.53" height="1" fill="#686060"/><rect x="1120.8" y="105" width="6.53" height="1" fill="#786868"/><rect x="1120.8" y="106" width="6.53" height="1" fill="#b07878"/><rect x="1120.8" y="107" width="6.53" height="1" fill="#d88080"/><rect x="1120.8" y="108" width="6.53" height="1" fill="#c07878"/><rect x="1120.8" y="109" width="6.53" height="2" fill="#886868"/><rect x="1120.8" y="111" width="6.53" height="1" fill="#c07878"/><rect x="1120.8" y="112" width="6.53" height="1" fill="#ffa0d0"/><rect x="1120.8" y="113" width="6.53" height="1" fill="#ffb8ff"/><rect x="1120.8" y="114" width="6.53" height="1" fill="#ffb0ff"/><rect x="1120.8" y="115" width="6.53" height="1" fill="#ffd0ff"/><rect x="1120.8" y="116" width="6.53" height="1" fill="#ffe8ff"/><rect x="1120.8" y="117" width="6.53" height="16" fill="#ffffff"/><rect x="1120.8" y="133" width="6.53" height="1" fill="#e0fff8"/><rect x="1120.8" y="134" width="6.53" height="3" fill="#ffffff"/><rect x="1120.8" y="137" width="6.53" height="1" fill="#f0b8e0"/><rect x="1120.8" y="138" width="6.53" height="1" fill="#989090"/><rect x="1120.8" y="139" width="6.53" height="2" fill="#909090"/><rect x="1120.8" y="141" width="6.53" height="1" fill="#ffe8e0"/><rect x="1120.8" y="142" width="6.53" height="4" fill="#ffffff"/><rect x="1120.8" y="146" width="6.53" height="1" fill="#fff0f8"/><rect x="1120.8" y="147" width="6.53" height="1" fill="#f8f8ff"/><rect x="1120.8" y="148" width="6.53" height="13" fill="#ffffff"/><rect x="1120.8" y="161" width="6.53" height="2" fill="#d0ffff"/><rect x="1120.8" y="163" width="6.53" height="1" fill="#c0ffc8"/><rect x="1120.8" y="164" width="6.53" height="1" fill="#a8ffb0"/><rect x="1120.8" y="165" width="6.53" height="1" fill="#889098"/><rect x="1120.8" y="166" width="6.53" height="1" fill="#d8b0e8"/><rect x="1120.8" y="167" width="6.53" height="1" fill="#f0b8f8"/><rect x="1120.8" y="168" width="6.53" height="1" fill="#d8a8d0"/><rect x="1120.8" y="169" width="6.53" height="1" fill="#90b088"/><rect x="1120.8" y="170" width="6.53" height="1" fill="#90d090"/><rect x="1120.8" y="171" width="6.53" height="1" fill="#88b888"/><rect x="1120.8" y="172" width="6.53" height="1" fill="#788878"/><rect x="1120.8" y="173" width="6.53" height="5" fill="#706870"/><rect x="1120.8" y="178" width="6.53" height="1" fill="#8078b0"/><rect x="1120.8" y="179" width="6.53" height="1" fill="#8880c0"/><rect x="1120.8" y="180" width="6.53" height="1" fill="#8078b0"/><rect x="1120.8" y="181" width="6.53" height="1" fill="#706870"/><rect x="1120.8" y="182" width="6.53" height="6" fill="#686060"/><rect x="1120.8" y="188" width="6.53" height="1" fill="#a87070"/><rect x="1120.8" y="189" width="6.53" height="1" fill="#b87878"/><rect x="1120.8" y="190" width="6.53" height="1" fill="#b07878"/><rect x="1120.8" y="191" width="6.53" height="1" fill="#706060"/><rect x="1127.3" y="105" width="6.53" height="1" fill="#886868"/><rect x="1127.3" y="106" width="6.53" height="2" fill="#e08888"/><rect x="1127.3" y="108" width="6.53" height="1" fill="#b87878"/><rect x="1127.3" y="109" width="6.53" height="1" fill="#907070"/><rect x="1127.3" y="110" width="6.53" height="1" fill="#d88890"/><rect x="1127.3" y="111" width="6.53" height="1" fill="#ffb0e8"/><rect x="1127.3" y="112" width="6.53" height="1" fill="#ffc0ff"/><rect x="1127.3" y="113" width="6.53" height="1" fill="#ffd0ff"/><rect x="1127.3" y="114" width="6.53" height="18" fill="#ffffff"/><rect x="1127.3" y="132" width="6.53" height="1" fill="#d8b0c0"/><rect x="1127.3" y="133" width="6.53" height="1" fill="#98a098"/><rect x="1127.3" y="134" width="6.53" height="1" fill="#ffc8c8"/><rect x="1127.3" y="135" width="6.53" height="17" fill="#ffffff"/><rect x="1127.3" y="152" width="6.53" height="1" fill="#d8ffff"/><rect x="1127.3" y="153" width="6.53" height="1" fill="#b0ffb8"/><rect x="1127.3" y="154" width="6.53" height="1" fill="#d8c0e8"/><rect x="1127.3" y="155" width="6.53" height="1" fill="#f8c0ff"/><rect x="1127.3" y="156" width="6.53" height="1" fill="#e0b8e8"/><rect x="1127.3" y="157" width="6.53" height="1" fill="#b0e0a8"/><rect x="1127.3" y="158" width="6.53" height="1" fill="#90d898"/><rect x="1127.3" y="159" width="6.53" height="1" fill="#88b890"/><rect x="1127.3" y="160" width="6.53" height="3" fill="#706878"/><rect x="1127.3" y="163" width="6.53" height="1" fill="#786880"/><rect x="1127.3" y="164" width="6.53" height="2" fill="#8880c8"/><rect x="1127.3" y="166" width="6.53" height="1" fill="#8078a8"/><rect x="1127.3" y="167" width="6.53" height="4" fill="#686060"/><rect x="1127.3" y="171" width="6.53" height="1" fill="#886868"/><rect x="1127.3" y="172" width="6.53" height="2" fill="#b87878"/><rect x="1127.3" y="174" width="6.53" height="1" fill="#907070"/><rect x="1133.8" y="105" width="6.53" height="1" fill="#987070"/><rect x="1133.8" y="106" width="6.53" height="2" fill="#e88888"/><rect x="1133.8" y="108" width="6.53" height="1" fill="#b07878"/><rect x="1133.8" y="109" width="6.53" height="1" fill="#e08898"/><rect x="1133.8" y="110" width="6.53" height="1" fill="#ffb8f0"/><rect x="1133.8" y="111" width="6.53" height="1" fill="#ffd8ff"/><rect x="1133.8" y="112" width="6.53" height="1" fill="#fff0ff"/><rect x="1133.8" y="113" width="6.53" height="15" fill="#ffffff"/><rect x="1133.8" y="128" width="6.53" height="1" fill="#c0b0b0"/><rect x="1133.8" y="129" width="6.53" height="14" fill="#ffffff"/><rect x="1133.8" y="143" width="6.53" height="1" fill="#f8ffff"/><rect x="1133.8" y="144" width="6.53" height="1" fill="#d8fff8"/><rect x="1133.8" y="145" width="6.53" height="1" fill="#ffffff"/><rect x="1133.8" y="146" width="6.53" height="1" fill="#ffd0ff"/><rect x="1133.8" y="147" width="6.53" height="1" fill="#f8fff8"/><rect x="1133.8" y="148" width="6.53" height="1" fill="#98e0a0"/><rect x="1133.8" y="149" width="6.53" height="1" fill="#90b898"/><rect x="1133.8" y="150" width="6.53" height="1" fill="#787880"/><rect x="1133.8" y="151" width="6.53" height="1" fill="#786880"/><rect x="1133.8" y="152" width="6.53" height="1" fill="#8078a0"/><rect x="1133.8" y="153" width="6.53" height="2" fill="#9080d0"/><rect x="1133.8" y="155" width="6.53" height="1" fill="#787090"/><rect x="1133.8" y="156" width="6.53" height="2" fill="#706060"/><rect x="1133.8" y="158" width="6.53" height="1" fill="#886868"/><rect x="1133.8" y="159" width="6.53" height="2" fill="#c07878"/><rect x="1133.8" y="161" width="6.53" height="1" fill="#987070"/><rect x="1140.3" y="105" width="6.53" height="1" fill="#a87878"/><rect x="1140.3" y="106" width="6.53" height="2" fill="#f88888"/><rect x="1140.3" y="108" width="6.53" height="1" fill="#e890a0"/><rect x="1140.3" y="109" width="6.53" height="1" fill="#ffc0f8"/><rect x="1140.3" y="110" width="6.53" height="1" fill="#fff8ff"/><rect x="1140.3" y="111" width="6.53" height="13" fill="#ffffff"/><rect x="1140.3" y="124" width="6.53" height="1" fill="#ffe0f0"/><rect x="1140.3" y="125" width="6.53" height="15" fill="#ffffff"/><rect x="1140.3" y="140" width="6.53" height="1" fill="#e0ffe0"/><rect x="1140.3" y="141" width="6.53" height="1" fill="#98c0a0"/><rect x="1140.3" y="142" width="6.53" height="1" fill="#888890"/><rect x="1140.3" y="143" width="6.53" height="1" fill="#8878a0"/><rect x="1140.3" y="144" width="6.53" height="2" fill="#9888d8"/><rect x="1140.3" y="146" width="6.53" height="1" fill="#807098"/><rect x="1140.3" y="147" width="6.53" height="1" fill="#706868"/><rect x="1140.3" y="148" width="6.53" height="1" fill="#a07070"/><rect x="1140.3" y="149" width="6.53" height="1" fill="#c08080"/><rect x="1140.3" y="150" width="6.53" height="1" fill="#b07878"/><rect x="1140.3" y="151" width="6.53" height="1" fill="#886868"/><rect x="1146.7" y="104" width="6.53" height="1" fill="#706060"/><rect x="1146.7" y="105" width="6.53" height="1" fill="#b07878"/><rect x="1146.7" y="106" width="6.53" height="1" fill="#ff9090"/><rect x="1146.7" y="107" width="6.53" height="1" fill="#ff98a8"/><rect x="1146.7" y="108" width="6.53" height="1" fill="#ffa8e0"/><rect x="1146.7" y="109" width="6.53" height="1" fill="#fff8ff"/><rect x="1146.7" y="110" width="6.53" height="24" fill="#ffffff"/><rect x="1146.7" y="134" width="6.53" height="1" fill="#f8fff8"/><rect x="1146.7" y="135" width="6.53" height="1" fill="#a0c0a8"/><rect x="1146.7" y="136" width="6.53" height="1" fill="#9080b8"/><rect x="1146.7" y="137" width="6.53" height="2" fill="#a088e0"/><rect x="1146.7" y="139" width="6.53" height="1" fill="#887090"/><rect x="1146.7" y="140" width="6.53" height="1" fill="#a87878"/><rect x="1146.7" y="141" width="6.53" height="1" fill="#c88080"/><rect x="1146.7" y="142" width="6.53" height="1" fill="#b07878"/><rect x="1146.7" y="143" width="6.53" height="1" fill="#806868"/><rect x="1153.2" y="104" width="6.53" height="1" fill="#886868"/><rect x="1153.2" y="105" width="6.53" height="1" fill="#ff9898"/><rect x="1153.2" y="106" width="6.53" height="1" fill="#ffa0a0"/><rect x="1153.2" y="107" width="6.53" height="1" fill="#ffb8f0"/><rect x="1153.2" y="108" width="6.53" height="22" fill="#ffffff"/><rect x="1153.2" y="130" width="6.53" height="1" fill="#a8c8c0"/><rect x="1153.2" y="131" width="6.53" height="2" fill="#a890e8"/><rect x="1153.2" y="133" width="6.53" height="1" fill="#9880a8"/><rect x="1153.2" y="134" width="6.53" height="2" fill="#d08080"/><rect x="1153.2" y="136" width="6.53" height="1" fill="#a87878"/><rect x="1159.7" y="104" width="6.53" height="1" fill="#a87070"/><rect x="1159.7" y="105" width="6.53" height="1" fill="#ff9898"/><rect x="1159.7" y="106" width="6.53" height="1" fill="#ffc8f0"/><rect x="1159.7" y="107" width="6.53" height="19" fill="#ffffff"/><rect x="1159.7" y="126" width="6.53" height="1" fill="#c0d8ff"/><rect x="1159.7" y="127" width="6.53" height="1" fill="#b098f8"/><rect x="1159.7" y="128" width="6.53" height="1" fill="#b088c0"/><rect x="1159.7" y="129" width="6.53" height="1" fill="#d88890"/><rect x="1159.7" y="130" width="6.53" height="1" fill="#d88080"/><rect x="1159.7" y="131" width="6.53" height="1" fill="#987070"/><rect x="1166.2" y="103" width="6.53" height="1" fill="#706060"/><rect x="1166.2" y="104" width="6.53" height="1" fill="#b07878"/><rect x="1166.2" y="105" width="6.53" height="1" fill="#ffc0d0"/><rect x="1166.2" y="106" width="6.53" height="17" fill="#ffffff"/><rect x="1166.2" y="123" width="6.53" height="1" fill="#c8c0ff"/><rect x="1166.2" y="124" width="6.53" height="1" fill="#c890c8"/><rect x="1166.2" y="125" width="6.53" height="1" fill="#e890a8"/><rect x="1166.2" y="126" width="6.53" height="1" fill="#e08888"/><rect x="1166.2" y="127" width="6.53" height="1" fill="#886868"/><rect x="1172.7" y="103" width="6.53" height="1" fill="#907070"/><rect x="1172.7" y="104" width="6.53" height="1" fill="#ff9090"/><rect x="1172.7" y="105" width="6.53" height="1" fill="#ffd8ff"/><rect x="1172.7" y="106" width="6.53" height="14" fill="#ffffff"/><rect x="1172.7" y="120" width="6.53" height="1" fill="#e0d8ff"/><rect x="1172.7" y="121" width="6.53" height="1" fill="#f8a0d8"/><rect x="1172.7" y="122" width="6.53" height="1" fill="#f090a0"/><rect x="1172.7" y="123" width="6.53" height="1" fill="#b07878"/><rect x="1179.1" y="103" width="6.53" height="1" fill="#b07878"/><rect x="1179.1" y="104" width="6.53" height="1" fill="#ffb8d8"/><rect x="1179.1" y="105" width="6.53" height="13" fill="#ffffff"/><rect x="1179.1" y="118" width="6.53" height="1" fill="#ffd8ff"/><rect x="1179.1" y="119" width="6.53" height="1" fill="#ff98c0"/><rect x="1179.1" y="120" width="6.53" height="1" fill="#b07878"/><rect x="1179.1" y="121" width="6.53" height="1" fill="#686060"/><rect x="1185.6" y="102" width="6.53" height="1" fill="#786868"/><rect x="1185.6" y="103" width="6.53" height="1" fill="#d08088"/><rect x="1185.6" y="104" width="6.53" height="12" fill="#ffffff"/><rect x="1185.6" y="116" width="6.53" height="1" fill="#ffc0e8"/><rect x="1185.6" y="117" width="6.53" height="1" fill="#ff98b0"/><rect x="1185.6" y="118" width="6.53" height="1" fill="#987070"/><rect x="1192.1" y="102" width="6.53" height="1" fill="#987070"/><rect x="1192.1" y="103" width="6.53" height="1" fill="#ffb0e0"/><rect x="1192.1" y="104" width="6.53" height="10" fill="#ffffff"/><rect x="1192.1" y="114" width="6.53" height="1" fill="#fff0ff"/><rect x="1192.1" y="115" width="6.53" height="1" fill="#ffa0c0"/><rect x="1192.1" y="116" width="6.53" height="1" fill="#907070"/><rect x="1198.6" y="102" width="6.53" height="1" fill="#c88088"/><rect x="1198.6" y="103" width="6.53" height="10" fill="#ffffff"/><rect x="1198.6" y="113" width="6.53" height="1" fill="#ffb8e8"/><rect x="1198.6" y="114" width="6.53" height="1" fill="#a87070"/><rect x="1205.1" y="101" width="6.53" height="1" fill="#786868"/><rect x="1205.1" y="102" width="6.53" height="1" fill="#ffa8d0"/><rect x="1205.1" y="103" width="6.53" height="9" fill="#ffffff"/><rect x="1205.1" y="112" width="6.53" height="1" fill="#c088a8"/><rect x="1205.1" y="113" width="6.53" height="1" fill="#806868"/><rect x="1211.5" y="101" width="6.53" height="1" fill="#987070"/><rect x="1211.5" y="102" width="6.53" height="9" fill="#ffffff"/><rect x="1211.5" y="111" width="6.53" height="1" fill="#b88090"/><rect x="1218.0" y="101" width="6.53" height="1" fill="#e08898"/><rect x="1218.0" y="102" width="6.53" height="8" fill="#ffffff"/><rect x="1218.0" y="110" width="6.53" height="1" fill="#b08090"/></g><rect x="900.5" y="69.5" width="324" height="297.5" fill="none" stroke="#535353" stroke-width="1"/></svg>
<!-- tabs row -->
<div class="a" style="left:1041px;top:367px;width:141.5px;height:52px;background:#909090"></div>
<svg style="left:900px;top:367px" width="325" height="90" viewBox="900 367 325 90">
 <g fill="none" stroke="#bdbdbd" stroke-width="1.5">
  <path d="M962.2 381.6A13.9 13.9 0 1 0 978.4 381.6"/>
  <path d="M970.3 376.6V391.8"/>
 </g>
 <circle cx="1111" cy="393" r="14" fill="none" stroke="#f4f4f4" stroke-width="1.6"/>
 <path d="M1193 383.9H1212.7M1193 393.2H1212.7M1193 402.5H1212.7" stroke="#c0c0c0" stroke-width="1.5"/>
</svg>
<!-- module header (AgX) -->
<div class="a" style="left:900px;top:452px;width:310px;height:26px;background:#696969"></div>
<div class="a" style="left:900px;top:478px;width:310px;height:1.2px;background:#747474"></div>
<!-- module body -->
<div class="a" style="left:900px;top:479.2px;width:310px;height:574.8px;background:#707070"></div>
<svg style="left:900px;top:452px" width="310" height="26" viewBox="900 452 310 26">
 <circle cx="924.1" cy="453.8" r="8.3" fill="#a2a2a2" stroke="#f2f2f2" stroke-width="1.7"/>
 <g fill="none" stroke="#c6c6c6" stroke-width="1.8">
  <path d="M1122.2 452V461.6H1134V452"/>
  <path d="M1118.3 453V456.6" stroke-width="2.4"/>
  <circle cx="1155.2" cy="453.4" r="8.6"/>
  <path d="M1155.2 450V457.4"/>
  <path d="M1177.5 453.5H1193.3M1177.5 460.9H1193.3" stroke-width="2"/>
 </g>
</svg>
<!-- search box -->
<div class="a" style="left:905.4px;top:421.3px;width:312.3px;height:28.3px;background:#7f7f7f;border:1px solid #878787;border-radius:4px;box-sizing:content-box"></div>
<svg style="left:915px;top:424px" width="30" height="26" viewBox="915 424 30 26"><g fill="none" stroke="#b0b0b0" stroke-width="1.7"><circle cx="928" cy="433.6" r="6.2"/><path d="M932.4 438L938.9 444.2"/></g></svg>

<!-- tabs settings/primaries -->
<div class="a" style="left:912px;top:484px;width:137px;height:35.5px;background:#777777"></div>
<div class="a" style="left:1049px;top:517.2px;width:148.4px;height:2.6px;background:#ededed"></div>
<!-- checkbox 1 -->
<div class="a" style="left:914.5px;top:529.5px;width:28.5px;height:28.5px;background:#7d7d7d;border:1px solid #828282;border-radius:4px"></div>
<!-- reset primaries icon -->
<svg style="left:1170px;top:564px" width="26" height="26" viewBox="1170 564 26 26"><g fill="none" stroke="#c4c4c4" stroke-width="1.4"><circle cx="1180.3" cy="572.8" r="5.9"/><circle cx="1186.4" cy="580.3" r="5.6"/><circle cx="1176.6" cy="581.6" r="3.7"/></g></svg>
<!-- chevron -->
<svg style="left:1177px;top:600px" width="16" height="12" viewBox="1177 600 16 12"><path d="M1179.8 603.3L1185 608.6L1190.2 603.3" fill="none" stroke="#e0e0e0" stroke-width="1.7"/></svg>
<!-- section lines -->
<div class="a" style="left:912.3px;top:653.6px;width:285.3px;height:1.7px;background:#dcdcdc"></div>
<div class="a" style="left:912.3px;top:995.7px;width:285.3px;height:1.6px;background:#dcdcdc"></div>
<div class="a" style="left:912.3px;top:692.0px;width:253.7px;height:7.8px;background:linear-gradient(90deg,#a83e3e 0%,#b2b2b2 100%)"></div>
<svg style="left:976.0px;top:684.0px" width="24" height="20" viewBox="-12 -8 24 20"><defs><linearGradient id="mg1" gradientUnits="userSpaceOnUse" x1="0" y1="-4" x2="0" y2="8"><stop offset="0.34" stop-color="#707070"/><stop offset="0.34" stop-color="#ab6161"/></linearGradient></defs><path d="M0 -3.3L6.4 7.95H-6.4Z" fill="none" stroke="#707070" stroke-width="6.4" stroke-linejoin="miter"/><path d="M0 -3.3L6.4 7.95H-6.4Z" fill="url(#mg1)" stroke="#f6f6f6" stroke-width="1.5" stroke-linejoin="miter"/></svg>
<div class="a" style="left:912.3px;top:703.8px;width:3.4px;height:3.4px;border-radius:50%;background:#e8e8e8"></div>
<div class="a" style="left:912.3px;top:743.0px;width:253.7px;height:7.8px;background:linear-gradient(90deg,#b060aa 0%,#aa5a5c 50%,#b0a858 100%)"></div>
<svg style="left:1035.3px;top:735.0px" width="24" height="20" viewBox="-12 -8 24 20"><defs><linearGradient id="mg4" gradientUnits="userSpaceOnUse" x1="0" y1="-4" x2="0" y2="8"><stop offset="0.34" stop-color="#707070"/><stop offset="0.34" stop-color="#aa5f5c"/></linearGradient></defs><path d="M0 -3.3L6.4 7.95H-6.4Z" fill="none" stroke="#707070" stroke-width="6.4" stroke-linejoin="miter"/><path d="M0 -3.3L6.4 7.95H-6.4Z" fill="url(#mg4)" stroke="#f6f6f6" stroke-width="1.5" stroke-linejoin="miter"/></svg>
<div class="a" style="left:1037.8px;top:754.8px;width:3.4px;height:3.4px;border-radius:50%;background:#e8e8e8"></div>
<div class="a" style="left:912.3px;top:794.0px;width:253.7px;height:7.8px;background:linear-gradient(90deg,#3eae3e 0%,#b2b2b2 100%)"></div>
<svg style="left:966.9px;top:786.0px" width="24" height="20" viewBox="-12 -8 24 20"><defs><linearGradient id="mg7" gradientUnits="userSpaceOnUse" x1="0" y1="-4" x2="0" y2="8"><stop offset="0.34" stop-color="#707070"/><stop offset="0.34" stop-color="#5caf5c"/></linearGradient></defs><path d="M0 -3.3L6.4 7.95H-6.4Z" fill="none" stroke="#707070" stroke-width="6.4" stroke-linejoin="miter"/><path d="M0 -3.3L6.4 7.95H-6.4Z" fill="url(#mg7)" stroke="#f6f6f6" stroke-width="1.5" stroke-linejoin="miter"/></svg>
<div class="a" style="left:912.1px;top:805.8px;width:3.4px;height:3.4px;border-radius:50%;background:#e8e8e8"></div>
<div class="a" style="left:912.3px;top:845.0px;width:253.7px;height:7.8px;background:linear-gradient(90deg,#b0ac5a 0%,#54aa54 50%,#5aa8ae 100%)"></div>
<svg style="left:1022.4px;top:837.0px" width="24" height="20" viewBox="-12 -8 24 20"><defs><linearGradient id="mg10" gradientUnits="userSpaceOnUse" x1="0" y1="-4" x2="0" y2="8"><stop offset="0.34" stop-color="#707070"/><stop offset="0.34" stop-color="#57aa54"/></linearGradient></defs><path d="M0 -3.3L6.4 7.95H-6.4Z" fill="none" stroke="#707070" stroke-width="6.4" stroke-linejoin="miter"/><path d="M0 -3.3L6.4 7.95H-6.4Z" fill="url(#mg10)" stroke="#f6f6f6" stroke-width="1.5" stroke-linejoin="miter"/></svg>
<div class="a" style="left:1037.6px;top:856.8px;width:3.4px;height:3.4px;border-radius:50%;background:#e8e8e8"></div>
<div class="a" style="left:912.3px;top:896.0px;width:253.7px;height:7.8px;background:linear-gradient(90deg,#3e3eb0 0%,#b2b2b2 100%)"></div>
<svg style="left:937.8px;top:888.0px" width="24" height="20" viewBox="-12 -8 24 20"><defs><linearGradient id="mg13" gradientUnits="userSpaceOnUse" x1="0" y1="-4" x2="0" y2="8"><stop offset="0.34" stop-color="#707070"/><stop offset="0.34" stop-color="#4f4fb0"/></linearGradient></defs><path d="M0 -3.3L6.4 7.95H-6.4Z" fill="none" stroke="#707070" stroke-width="6.4" stroke-linejoin="miter"/><path d="M0 -3.3L6.4 7.95H-6.4Z" fill="url(#mg13)" stroke="#f6f6f6" stroke-width="1.5" stroke-linejoin="miter"/></svg>
<div class="a" style="left:912.1px;top:907.8px;width:3.4px;height:3.4px;border-radius:50%;background:#e8e8e8"></div>
<div class="a" style="left:912.3px;top:947.0px;width:253.7px;height:7.8px;background:linear-gradient(90deg,#5aaeaa 0%,#5c5cb0 50%,#b05cb0 100%)"></div>
<svg style="left:1012.0px;top:939.0px" width="24" height="20" viewBox="-12 -8 24 20"><defs><linearGradient id="mg16" gradientUnits="userSpaceOnUse" x1="0" y1="-4" x2="0" y2="8"><stop offset="0.34" stop-color="#707070"/><stop offset="0.34" stop-color="#5c66af"/></linearGradient></defs><path d="M0 -3.3L6.4 7.95H-6.4Z" fill="none" stroke="#707070" stroke-width="6.4" stroke-linejoin="miter"/><path d="M0 -3.3L6.4 7.95H-6.4Z" fill="url(#mg16)" stroke="#f6f6f6" stroke-width="1.5" stroke-linejoin="miter"/></svg>
<div class="a" style="left:1037.6px;top:958.8px;width:3.4px;height:3.4px;border-radius:50%;background:#e8e8e8"></div>
<!-- checkbox 2 + button -->
<div class="a" style="left:914.2px;top:1003.6px;width:28.5px;height:28.5px;background:#7d7d7d;border:1px solid #828282;border-radius:4px"></div>
<div class="a" style="left:1059.5px;top:1001.6px;width:136.5px;height:34.6px;background:#7f7f7f;border-radius:4px"></div>

<!-- scrollbar -->
<div class="a" style="left:1211px;top:455px;width:12px;height:597px;background:#5f5f5f;border-radius:6px"></div>
<div class="a" style="left:1212.5px;top:473px;width:9px;height:129px;background:#909090;border-radius:4.5px"></div>

<!-- bottom right panel (module order) -->
<div class="a" style="left:900px;top:1053.6px;width:325px;height:49.4px;background:#6a6a6a"></div>
<svg style="left:1155px;top:1065px" width="60" height="26" viewBox="1155 1065 60 26">
 <g fill="none" stroke="#c8c8c8" stroke-width="1.5">
  <circle cx="1170.2" cy="1078" r="8"/><path d="M1170.2 1073.6V1082.4"/>
  <path d="M1191.8 1071H1208.6M1191.8 1078.2H1208.6M1191.8 1085.4H1208.6"/>
 </g>
</svg>

<!-- bottom bar left -->
<div class="a" style="left:0;top:1057px;width:900px;height:46px;background:#6a6a6a"></div>
<div class="a" style="left:0;top:1103px;width:1225px;height:4px;background:#636363"></div>
<svg style="left:0;top:1057px" width="900" height="50" viewBox="0 1057 900 50">
 <g fill="none" stroke="#b6b6b6" stroke-width="1.5">
  <circle cx="-2.6" cy="1085" r="6"/>
  <path d="M34.5 1073V1068.2H51V1081.6H46.6"/>
  <rect x="27.2" y="1073.6" width="19" height="13.6"/>
  <path d="M36.7 1087.2V1091.8M31.3 1091.8H42"/>
 </g>
 <path d="M446.4 1108.8L451.2 1103.4L456 1108.8Z" fill="#f2f2f2"/>
 <!-- focus icon -->
 <g fill="none" stroke="#b0b0b0" stroke-width="1.5">
  <path d="M510.7 1076V1073A3.4 3.4 0 0 1 514.1 1069.6H517"/>
  <path d="M533.5 1069.6H536.3A3.4 3.4 0 0 1 539.7 1073V1076"/>
  <path d="M539.7 1085V1087.7A3.4 3.4 0 0 1 536.3 1091.1H533.5"/>
  <path d="M517 1091.1H514.1A3.4 3.4 0 0 1 510.7 1087.7V1085"/>
  <circle cx="525.4" cy="1080.2" r="5.6"/><path d="M519.8 1080.2H531"/>
 </g>
 <!-- bulb button -->
 <rect x="555.8" y="1061" width="36.5" height="38.6" rx="4" fill="#8f8f8f" stroke="#c4c4c4" stroke-width="1.4"/>
 <path d="M574.9 1066.4A10.3 10.3 0 0 1 585.2 1076.7C585.2 1080.6 582.4 1082.6 580.6 1085.4H569.2C567.4 1082.6 564.6 1080.6 564.6 1076.7A10.3 10.3 0 0 1 574.9 1066.4Z" fill="#fafafa"/>
 <rect x="570" y="1086.6" width="9.8" height="2.3" fill="#fafafa"/>
 <path d="M570.2 1090.2H579.6A4.7 4 0 0 1 570.2 1090.2Z" fill="#fafafa"/>
 <!-- fullscreen button -->
 <rect x="605.8" y="1061" width="36" height="38.6" rx="4" fill="#8f8f8f" stroke="#c4c4c4" stroke-width="1.4"/>
 <rect x="609.9" y="1071" width="28.6" height="18.4" fill="none" stroke="#fafafa" stroke-width="1.7"/>
 <g fill="#fafafa" stroke="none">
  <path d="M613.8 1074H617.4L613.8 1077.6Z"/><path d="M635.2 1074H631.6L635.2 1077.6Z"/>
  <path d="M613.8 1086.6H617.4L613.8 1083Z"/><path d="M635.2 1086.6H631.6L635.2 1083Z"/>
 </g>
 <path d="M615 1075.2L618.3 1078.5M634 1075.2L630.7 1078.5M615 1085.4L618.3 1082.1M634 1085.4L630.7 1082.1" stroke="#fafafa" stroke-width="1.2" fill="none"/>
 <!-- checker -->
 <rect x="661.8" y="1068.5" width="12.2" height="12" fill="#5c5c5c"/>
 <rect x="674" y="1068.5" width="12" height="12" fill="#848484"/>
 <rect x="661.8" y="1080.5" width="12.2" height="11.8" fill="#848484"/>
 <rect x="674" y="1080.5" width="12" height="11.8" fill="#4a4a4a"/>
 <rect x="661.8" y="1068.5" width="24.2" height="23.8" rx="3" fill="none" stroke="#b4b4b4" stroke-width="1.4"/>
 <!-- diagonal -->
 <path d="M734.6 1069.2V1089.3A2.5 2.5 0 0 1 732.1 1091.8H712Z" fill="#b4b4b4"/>
 <rect x="711.1" y="1068.3" width="24" height="24" rx="3" fill="none" stroke="#b4b4b4" stroke-width="1.4"/>
 <!-- gamut -->
 <path fill-rule="evenodd" fill="#b4b4b4" d="M764.3 1066.6C770.5 1067.5 779 1076 785.1 1084.2L766.9 1093.3C762.5 1085 761.2 1072 764.3 1066.6ZM768.8 1074.4L768.2 1089.6L781.4 1083.6Z"/>
 <!-- warning -->
 <path fill-rule="evenodd" fill="#b4b4b4" d="M822.4 1066.8L836.4 1090.8H808.6ZM820.9 1074.2H824L823.5 1084H821.4ZM821.2 1085.8H823.7V1089.2H821.2Z"/>
 <!-- grid -->
 <rect x="860.1" y="1068.3" width="24" height="24" rx="3" fill="none" stroke="#b4b4b4" stroke-width="1.4"/>
 <path d="M868.2 1071.5V1089M876.2 1071.5V1089M863.4 1076.2H880.9M863.4 1084.2H880.9" stroke="#e4e4e4" stroke-width="1.3" fill="none"/>
</svg>


<svg style="position:absolute;left:109.8px;top:399.8px" width="602.7" height="373.6" viewBox="0 0 602.7 373.6" shape-rendering="crispEdges"><rect width="602.7" height="373.6" fill="#000"/><rect x="0.0" y="0.0" width="120.8" height="12.4" fill="#000000"/><rect x="120.5" y="0.0" width="12.4" height="12.4" fill="#020000"/><rect x="132.6" y="0.0" width="12.4" height="12.4" fill="#040000"/><rect x="144.6" y="0.0" width="12.4" height="12.4" fill="#070000"/><rect x="156.7" y="0.0" width="12.4" height="12.4" fill="#0a0000"/><rect x="168.8" y="0.0" width="12.4" height="12.4" fill="#0d0000"/><rect x="180.8" y="0.0" width="12.4" height="12.4" fill="#110000"/><rect x="192.9" y="0.0" width="12.4" height="12.4" fill="#140000"/><rect x="204.9" y="0.0" width="12.4" height="12.4" fill="#170400"/><rect x="217.0" y="0.0" width="12.4" height="12.4" fill="#1b0603"/><rect x="229.0" y="0.0" width="12.4" height="12.4" fill="#210705"/><rect x="241.1" y="0.0" width="12.4" height="12.4" fill="#290706"/><rect x="253.1" y="0.0" width="12.4" height="12.4" fill="#330706"/><rect x="265.2" y="0.0" width="12.4" height="12.4" fill="#400303"/><rect x="277.2" y="0.0" width="12.4" height="12.4" fill="#500000"/><rect x="289.3" y="0.0" width="12.4" height="12.4" fill="#660000"/><rect x="301.4" y="0.0" width="12.4" height="12.4" fill="#800000"/><rect x="313.4" y="0.0" width="12.4" height="12.4" fill="#9e0000"/><rect x="325.5" y="0.0" width="12.4" height="12.4" fill="#bb0c00"/><rect x="337.5" y="0.0" width="12.4" height="12.4" fill="#d33313"/><rect x="349.6" y="0.0" width="12.4" height="12.4" fill="#e45433"/><rect x="361.6" y="0.0" width="12.4" height="12.4" fill="#ef7453"/><rect x="373.7" y="0.0" width="12.4" height="12.4" fill="#f48e71"/><rect x="385.7" y="0.0" width="12.4" height="12.4" fill="#f7a38b"/><rect x="397.8" y="0.0" width="12.4" height="12.4" fill="#f8b5a1"/><rect x="409.8" y="0.0" width="12.4" height="12.4" fill="#f9c2b3"/><rect x="421.9" y="0.0" width="12.4" height="12.4" fill="#f9cdc1"/><rect x="433.9" y="0.0" width="12.4" height="12.4" fill="#f9d5cc"/><rect x="446.0" y="0.0" width="12.4" height="12.4" fill="#fadcd4"/><rect x="458.1" y="0.0" width="12.4" height="12.4" fill="#fae1db"/><rect x="470.1" y="0.0" width="12.4" height="12.4" fill="#fae6e1"/><rect x="482.2" y="0.0" width="12.4" height="12.4" fill="#fbe9e5"/><rect x="494.2" y="0.0" width="12.4" height="12.4" fill="#fbece9"/><rect x="506.3" y="0.0" width="12.4" height="12.4" fill="#fbefec"/><rect x="518.3" y="0.0" width="12.4" height="12.4" fill="#fcf1ee"/><rect x="530.4" y="0.0" width="12.4" height="12.4" fill="#fcf3f1"/><rect x="542.4" y="0.0" width="12.4" height="12.4" fill="#fcf4f2"/><rect x="554.5" y="0.0" width="12.4" height="12.4" fill="#fdf5f4"/><rect x="566.5" y="0.0" width="12.4" height="12.4" fill="#fdf7f5"/><rect x="578.6" y="0.0" width="12.4" height="12.4" fill="#fdf8f6"/><rect x="590.6" y="0.0" width="12.4" height="12.4" fill="#fdf8f7"/><rect x="0.0" y="12.1" width="108.8" height="12.4" fill="#000000"/><rect x="108.5" y="12.1" width="12.4" height="12.4" fill="#010000"/><rect x="120.5" y="12.1" width="12.4" height="12.4" fill="#030000"/><rect x="132.6" y="12.1" width="12.4" height="12.4" fill="#050000"/><rect x="144.6" y="12.1" width="12.4" height="12.4" fill="#080000"/><rect x="156.7" y="12.1" width="12.4" height="12.4" fill="#0b0100"/><rect x="168.8" y="12.1" width="12.4" height="12.4" fill="#0e0400"/><rect x="180.8" y="12.1" width="12.4" height="12.4" fill="#110600"/><rect x="192.9" y="12.1" width="12.4" height="12.4" fill="#130900"/><rect x="204.9" y="12.1" width="12.4" height="12.4" fill="#170c03"/><rect x="217.0" y="12.1" width="12.4" height="12.4" fill="#1c0d06"/><rect x="229.0" y="12.1" width="12.4" height="12.4" fill="#221007"/><rect x="241.1" y="12.1" width="12.4" height="12.4" fill="#2a1307"/><rect x="253.1" y="12.1" width="12.4" height="12.4" fill="#351606"/><rect x="265.2" y="12.1" width="12.4" height="12.4" fill="#431b01"/><rect x="277.2" y="12.1" width="12.4" height="12.4" fill="#552100"/><rect x="289.3" y="12.1" width="12.4" height="12.4" fill="#6b2a00"/><rect x="301.4" y="12.1" width="12.4" height="12.4" fill="#853500"/><rect x="313.4" y="12.1" width="12.4" height="12.4" fill="#a24600"/><rect x="325.5" y="12.1" width="12.4" height="12.4" fill="#ba5e00"/><rect x="337.5" y="12.1" width="12.4" height="12.4" fill="#cc782a"/><rect x="349.6" y="12.1" width="12.4" height="12.4" fill="#d9904c"/><rect x="361.6" y="12.1" width="12.4" height="12.4" fill="#e1a56c"/><rect x="373.7" y="12.1" width="12.4" height="12.4" fill="#e7b687"/><rect x="385.7" y="12.1" width="12.4" height="12.4" fill="#ebc39e"/><rect x="397.8" y="12.1" width="12.4" height="12.4" fill="#eecdb0"/><rect x="409.8" y="12.1" width="12.4" height="12.4" fill="#f0d6bf"/><rect x="421.9" y="12.1" width="12.4" height="12.4" fill="#f2dcca"/><rect x="433.9" y="12.1" width="12.4" height="12.4" fill="#f3e2d3"/><rect x="446.0" y="12.1" width="12.4" height="12.4" fill="#f4e6da"/><rect x="458.1" y="12.1" width="12.4" height="12.4" fill="#f6e9e0"/><rect x="470.1" y="12.1" width="12.4" height="12.4" fill="#f7ece5"/><rect x="482.2" y="12.1" width="12.4" height="12.4" fill="#f7efe8"/><rect x="494.2" y="12.1" width="12.4" height="12.4" fill="#f8f1eb"/><rect x="506.3" y="12.1" width="12.4" height="12.4" fill="#f9f3ee"/><rect x="518.3" y="12.1" width="12.4" height="12.4" fill="#faf4f0"/><rect x="530.4" y="12.1" width="12.4" height="12.4" fill="#faf6f2"/><rect x="542.4" y="12.1" width="12.4" height="12.4" fill="#fbf7f4"/><rect x="554.5" y="12.1" width="12.4" height="12.4" fill="#fbf8f5"/><rect x="566.5" y="12.1" width="12.4" height="12.4" fill="#fcf9f6"/><rect x="578.6" y="12.1" width="12.4" height="12.4" fill="#fcf9f7"/><rect x="590.6" y="12.1" width="12.4" height="12.4" fill="#fdfaf8"/><rect x="0.0" y="24.1" width="108.8" height="12.4" fill="#000000"/><rect x="108.5" y="24.1" width="12.4" height="12.4" fill="#010000"/><rect x="120.5" y="24.1" width="12.4" height="12.4" fill="#030000"/><rect x="132.6" y="24.1" width="12.4" height="12.4" fill="#060100"/><rect x="144.6" y="24.1" width="12.4" height="12.4" fill="#080300"/><rect x="156.7" y="24.1" width="12.4" height="12.4" fill="#0b0500"/><rect x="168.8" y="24.1" width="12.4" height="12.4" fill="#0e0800"/><rect x="180.8" y="24.1" width="12.4" height="12.4" fill="#110a00"/><rect x="192.9" y="24.1" width="12.4" height="12.4" fill="#130d01"/><rect x="204.9" y="24.1" width="12.4" height="12.4" fill="#170f05"/><rect x="217.0" y="24.1" width="12.4" height="12.4" fill="#1c1207"/><rect x="229.0" y="24.1" width="12.4" height="12.4" fill="#231507"/><rect x="241.1" y="24.1" width="12.4" height="12.4" fill="#2b1a07"/><rect x="253.1" y="24.1" width="12.4" height="12.4" fill="#362005"/><rect x="265.2" y="24.1" width="12.4" height="12.4" fill="#442800"/><rect x="277.2" y="24.1" width="12.4" height="12.4" fill="#573200"/><rect x="289.3" y="24.1" width="12.4" height="12.4" fill="#6d3f00"/><rect x="301.4" y="24.1" width="12.4" height="12.4" fill="#875100"/><rect x="313.4" y="24.1" width="12.4" height="12.4" fill="#a16600"/><rect x="325.5" y="24.1" width="12.4" height="12.4" fill="#b67f19"/><rect x="337.5" y="24.1" width="12.4" height="12.4" fill="#c6963d"/><rect x="349.6" y="24.1" width="12.4" height="12.4" fill="#d2a960"/><rect x="361.6" y="24.1" width="12.4" height="12.4" fill="#dbb97d"/><rect x="373.7" y="24.1" width="12.4" height="12.4" fill="#e1c696"/><rect x="385.7" y="24.1" width="12.4" height="12.4" fill="#e5d0aa"/><rect x="397.8" y="24.1" width="12.4" height="12.4" fill="#e9d8ba"/><rect x="409.8" y="24.1" width="12.4" height="12.4" fill="#ecdec6"/><rect x="421.9" y="24.1" width="12.4" height="12.4" fill="#efe3d0"/><rect x="433.9" y="24.1" width="12.4" height="12.4" fill="#f1e7d8"/><rect x="446.0" y="24.1" width="12.4" height="12.4" fill="#f2eade"/><rect x="458.1" y="24.1" width="12.4" height="12.4" fill="#f4ede3"/><rect x="470.1" y="24.1" width="12.4" height="12.4" fill="#f5efe7"/><rect x="482.2" y="24.1" width="12.4" height="12.4" fill="#f6f1ea"/><rect x="494.2" y="24.1" width="12.4" height="12.4" fill="#f7f3ed"/><rect x="506.3" y="24.1" width="12.4" height="12.4" fill="#f8f5ef"/><rect x="518.3" y="24.1" width="12.4" height="12.4" fill="#f9f6f1"/><rect x="530.4" y="24.1" width="12.4" height="12.4" fill="#faf7f3"/><rect x="542.4" y="24.1" width="12.4" height="12.4" fill="#faf8f5"/><rect x="554.5" y="24.1" width="12.4" height="12.4" fill="#fbf9f6"/><rect x="566.5" y="24.1" width="12.4" height="12.4" fill="#fbf9f7"/><rect x="578.6" y="24.1" width="12.4" height="12.4" fill="#fcfaf8"/><rect x="590.6" y="24.1" width="12.4" height="12.4" fill="#fcfbf9"/><rect x="0.0" y="36.2" width="108.8" height="12.4" fill="#000000"/><rect x="108.5" y="36.2" width="12.4" height="12.4" fill="#010000"/><rect x="120.5" y="36.2" width="12.4" height="12.4" fill="#030100"/><rect x="132.6" y="36.2" width="12.4" height="12.4" fill="#050200"/><rect x="144.6" y="36.2" width="12.4" height="12.4" fill="#080400"/><rect x="156.7" y="36.2" width="12.4" height="12.4" fill="#0a0700"/><rect x="168.8" y="36.2" width="12.4" height="12.4" fill="#0d0900"/><rect x="180.8" y="36.2" width="12.4" height="12.4" fill="#100c00"/><rect x="192.9" y="36.2" width="12.4" height="12.4" fill="#130e02"/><rect x="204.9" y="36.2" width="12.4" height="12.4" fill="#161105"/><rect x="217.0" y="36.2" width="12.4" height="12.4" fill="#1b1407"/><rect x="229.0" y="36.2" width="12.4" height="12.4" fill="#211907"/><rect x="241.1" y="36.2" width="12.4" height="12.4" fill="#291e07"/><rect x="253.1" y="36.2" width="12.4" height="12.4" fill="#342504"/><rect x="265.2" y="36.2" width="12.4" height="12.4" fill="#412f00"/><rect x="277.2" y="36.2" width="12.4" height="12.4" fill="#533b00"/><rect x="289.3" y="36.2" width="12.4" height="12.4" fill="#684b00"/><rect x="301.4" y="36.2" width="12.4" height="12.4" fill="#815f00"/><rect x="313.4" y="36.2" width="12.4" height="12.4" fill="#9a7600"/><rect x="325.5" y="36.2" width="12.4" height="12.4" fill="#ae8d20"/><rect x="337.5" y="36.2" width="12.4" height="12.4" fill="#bfa244"/><rect x="349.6" y="36.2" width="12.4" height="12.4" fill="#ccb366"/><rect x="361.6" y="36.2" width="12.4" height="12.4" fill="#d5c183"/><rect x="373.7" y="36.2" width="12.4" height="12.4" fill="#dccc9a"/><rect x="385.7" y="36.2" width="12.4" height="12.4" fill="#e2d5ad"/><rect x="397.8" y="36.2" width="12.4" height="12.4" fill="#e6dbbd"/><rect x="409.8" y="36.2" width="12.4" height="12.4" fill="#eae1c8"/><rect x="421.9" y="36.2" width="12.4" height="12.4" fill="#ece5d2"/><rect x="433.9" y="36.2" width="12.4" height="12.4" fill="#efe9d9"/><rect x="446.0" y="36.2" width="12.4" height="12.4" fill="#f1ecdf"/><rect x="458.1" y="36.2" width="12.4" height="12.4" fill="#f3efe4"/><rect x="470.1" y="36.2" width="12.4" height="12.4" fill="#f4f1e8"/><rect x="482.2" y="36.2" width="12.4" height="12.4" fill="#f5f2eb"/><rect x="494.2" y="36.2" width="12.4" height="12.4" fill="#f7f4ee"/><rect x="506.3" y="36.2" width="12.4" height="12.4" fill="#f8f5f0"/><rect x="518.3" y="36.2" width="12.4" height="12.4" fill="#f8f7f2"/><rect x="530.4" y="36.2" width="12.4" height="12.4" fill="#f9f8f3"/><rect x="542.4" y="36.2" width="12.4" height="12.4" fill="#faf8f5"/><rect x="554.5" y="36.2" width="12.4" height="12.4" fill="#fbf9f6"/><rect x="566.5" y="36.2" width="12.4" height="12.4" fill="#fbfaf7"/><rect x="578.6" y="36.2" width="12.4" height="12.4" fill="#fcfbf8"/><rect x="590.6" y="36.2" width="12.4" height="12.4" fill="#fcfbf9"/><rect x="0.0" y="48.2" width="108.8" height="12.4" fill="#000000"/><rect x="108.5" y="48.2" width="12.4" height="12.4" fill="#010000"/><rect x="120.5" y="48.2" width="12.4" height="12.4" fill="#020100"/><rect x="132.6" y="48.2" width="12.4" height="12.4" fill="#040300"/><rect x="144.6" y="48.2" width="12.4" height="12.4" fill="#060500"/><rect x="156.7" y="48.2" width="12.4" height="12.4" fill="#090700"/><rect x="168.8" y="48.2" width="12.4" height="12.4" fill="#0c0a00"/><rect x="180.8" y="48.2" width="12.4" height="12.4" fill="#0e0c00"/><rect x="192.9" y="48.2" width="12.4" height="12.4" fill="#110f01"/><rect x="204.9" y="48.2" width="12.4" height="12.4" fill="#141105"/><rect x="217.0" y="48.2" width="12.4" height="12.4" fill="#181507"/><rect x="229.0" y="48.2" width="12.4" height="12.4" fill="#1e1907"/><rect x="241.1" y="48.2" width="12.4" height="12.4" fill="#251f07"/><rect x="253.1" y="48.2" width="12.4" height="12.4" fill="#2e2705"/><rect x="265.2" y="48.2" width="12.4" height="12.4" fill="#3a3100"/><rect x="277.2" y="48.2" width="12.4" height="12.4" fill="#493d00"/><rect x="289.3" y="48.2" width="12.4" height="12.4" fill="#5d4e00"/><rect x="301.4" y="48.2" width="12.4" height="12.4" fill="#746200"/><rect x="313.4" y="48.2" width="12.4" height="12.4" fill="#8d7900"/><rect x="325.5" y="48.2" width="12.4" height="12.4" fill="#a39019"/><rect x="337.5" y="48.2" width="12.4" height="12.4" fill="#b5a43f"/><rect x="349.6" y="48.2" width="12.4" height="12.4" fill="#c3b562"/><rect x="361.6" y="48.2" width="12.4" height="12.4" fill="#cec37f"/><rect x="373.7" y="48.2" width="12.4" height="12.4" fill="#d7cd97"/><rect x="385.7" y="48.2" width="12.4" height="12.4" fill="#ddd6ab"/><rect x="397.8" y="48.2" width="12.4" height="12.4" fill="#e3dcbb"/><rect x="409.8" y="48.2" width="12.4" height="12.4" fill="#e7e2c7"/><rect x="421.9" y="48.2" width="12.4" height="12.4" fill="#eae6d0"/><rect x="433.9" y="48.2" width="12.4" height="12.4" fill="#ede9d8"/><rect x="446.0" y="48.2" width="12.4" height="12.4" fill="#efecde"/><rect x="458.1" y="48.2" width="12.4" height="12.4" fill="#f1efe3"/><rect x="470.1" y="48.2" width="12.4" height="12.4" fill="#f3f1e7"/><rect x="482.2" y="48.2" width="12.4" height="12.4" fill="#f4f3ea"/><rect x="494.2" y="48.2" width="12.4" height="12.4" fill="#f6f4ed"/><rect x="506.3" y="48.2" width="12.4" height="12.4" fill="#f7f6f0"/><rect x="518.3" y="48.2" width="12.4" height="12.4" fill="#f8f7f2"/><rect x="530.4" y="48.2" width="12.4" height="12.4" fill="#f9f8f3"/><rect x="542.4" y="48.2" width="12.4" height="12.4" fill="#f9f9f5"/><rect x="554.5" y="48.2" width="12.4" height="12.4" fill="#faf9f6"/><rect x="566.5" y="48.2" width="12.4" height="12.4" fill="#fbfaf7"/><rect x="578.6" y="48.2" width="12.4" height="12.4" fill="#fbfbf8"/><rect x="590.6" y="48.2" width="12.4" height="12.4" fill="#fcfbf9"/><rect x="0.0" y="60.3" width="120.8" height="12.4" fill="#000000"/><rect x="120.5" y="60.3" width="12.4" height="12.4" fill="#010100"/><rect x="132.6" y="60.3" width="12.4" height="12.4" fill="#030300"/><rect x="144.6" y="60.3" width="12.4" height="12.4" fill="#050500"/><rect x="156.7" y="60.3" width="12.4" height="12.4" fill="#080700"/><rect x="168.8" y="60.3" width="12.4" height="12.4" fill="#0a0900"/><rect x="180.8" y="60.3" width="12.4" height="12.4" fill="#0d0c00"/><rect x="192.9" y="60.3" width="12.4" height="12.4" fill="#0f0f00"/><rect x="204.9" y="60.3" width="12.4" height="12.4" fill="#121104"/><rect x="217.0" y="60.3" width="12.4" height="12.4" fill="#161507"/><rect x="229.0" y="60.3" width="12.4" height="12.4" fill="#1b1907"/><rect x="241.1" y="60.3" width="12.4" height="12.4" fill="#211f07"/><rect x="253.1" y="60.3" width="12.4" height="12.4" fill="#292605"/><rect x="265.2" y="60.3" width="12.4" height="12.4" fill="#333000"/><rect x="277.2" y="60.3" width="12.4" height="12.4" fill="#413d00"/><rect x="289.3" y="60.3" width="12.4" height="12.4" fill="#524d00"/><rect x="301.4" y="60.3" width="12.4" height="12.4" fill="#676100"/><rect x="313.4" y="60.3" width="12.4" height="12.4" fill="#7f7800"/><rect x="325.5" y="60.3" width="12.4" height="12.4" fill="#978f0b"/><rect x="337.5" y="60.3" width="12.4" height="12.4" fill="#aba436"/><rect x="349.6" y="60.3" width="12.4" height="12.4" fill="#bbb55a"/><rect x="361.6" y="60.3" width="12.4" height="12.4" fill="#c8c278"/><rect x="373.7" y="60.3" width="12.4" height="12.4" fill="#d2cd92"/><rect x="385.7" y="60.3" width="12.4" height="12.4" fill="#d9d5a7"/><rect x="397.8" y="60.3" width="12.4" height="12.4" fill="#dfdcb7"/><rect x="409.8" y="60.3" width="12.4" height="12.4" fill="#e4e1c4"/><rect x="421.9" y="60.3" width="12.4" height="12.4" fill="#e8e6ce"/><rect x="433.9" y="60.3" width="12.4" height="12.4" fill="#ebe9d7"/><rect x="446.0" y="60.3" width="12.4" height="12.4" fill="#eeecdd"/><rect x="458.1" y="60.3" width="12.4" height="12.4" fill="#f0efe2"/><rect x="470.1" y="60.3" width="12.4" height="12.4" fill="#f2f1e6"/><rect x="482.2" y="60.3" width="12.4" height="12.4" fill="#f3f3ea"/><rect x="494.2" y="60.3" width="12.4" height="12.4" fill="#f5f4ed"/><rect x="506.3" y="60.3" width="12.4" height="12.4" fill="#f6f5ef"/><rect x="518.3" y="60.3" width="12.4" height="12.4" fill="#f7f7f1"/><rect x="530.4" y="60.3" width="12.4" height="12.4" fill="#f8f8f3"/><rect x="542.4" y="60.3" width="12.4" height="12.4" fill="#f9f9f4"/><rect x="554.5" y="60.3" width="12.4" height="12.4" fill="#faf9f6"/><rect x="566.5" y="60.3" width="12.4" height="12.4" fill="#fafaf7"/><rect x="578.6" y="60.3" width="12.4" height="12.4" fill="#fbfbf8"/><rect x="590.6" y="60.3" width="12.4" height="12.4" fill="#fbfbf9"/><rect x="0.0" y="72.3" width="120.8" height="12.4" fill="#000000"/><rect x="120.5" y="72.3" width="12.4" height="12.4" fill="#010200"/><rect x="132.6" y="72.3" width="12.4" height="12.4" fill="#030400"/><rect x="144.6" y="72.3" width="12.4" height="12.4" fill="#050600"/><rect x="156.7" y="72.3" width="12.4" height="12.4" fill="#080800"/><rect x="168.8" y="72.3" width="12.4" height="12.4" fill="#0a0b00"/><rect x="180.8" y="72.3" width="12.4" height="12.4" fill="#0d0e00"/><rect x="192.9" y="72.3" width="12.4" height="12.4" fill="#101002"/><rect x="204.9" y="72.3" width="12.4" height="12.4" fill="#121305"/><rect x="217.0" y="72.3" width="12.4" height="12.4" fill="#161707"/><rect x="229.0" y="72.3" width="12.4" height="12.4" fill="#1b1c07"/><rect x="241.1" y="72.3" width="12.4" height="12.4" fill="#212306"/><rect x="253.1" y="72.3" width="12.4" height="12.4" fill="#292c03"/><rect x="265.2" y="72.3" width="12.4" height="12.4" fill="#343700"/><rect x="277.2" y="72.3" width="12.4" height="12.4" fill="#424500"/><rect x="289.3" y="72.3" width="12.4" height="12.4" fill="#535800"/><rect x="301.4" y="72.3" width="12.4" height="12.4" fill="#696d00"/><rect x="313.4" y="72.3" width="12.4" height="12.4" fill="#818600"/><rect x="325.5" y="72.3" width="12.4" height="12.4" fill="#989b1f"/><rect x="337.5" y="72.3" width="12.4" height="12.4" fill="#abae44"/><rect x="349.6" y="72.3" width="12.4" height="12.4" fill="#bbbd67"/><rect x="361.6" y="72.3" width="12.4" height="12.4" fill="#c8c983"/><rect x="373.7" y="72.3" width="12.4" height="12.4" fill="#d2d29b"/><rect x="385.7" y="72.3" width="12.4" height="12.4" fill="#d9d9ae"/><rect x="397.8" y="72.3" width="12.4" height="12.4" fill="#dfdfbd"/><rect x="409.8" y="72.3" width="12.4" height="12.4" fill="#e4e4c9"/><rect x="421.9" y="72.3" width="12.4" height="12.4" fill="#e8e8d2"/><rect x="433.9" y="72.3" width="12.4" height="12.4" fill="#ebebd9"/><rect x="446.0" y="72.3" width="12.4" height="12.4" fill="#eeeedf"/><rect x="458.1" y="72.3" width="12.4" height="12.4" fill="#f0f0e4"/><rect x="470.1" y="72.3" width="12.4" height="12.4" fill="#f2f2e8"/><rect x="482.2" y="72.3" width="12.4" height="12.4" fill="#f3f4eb"/><rect x="494.2" y="72.3" width="12.4" height="12.4" fill="#f5f5ee"/><rect x="506.3" y="72.3" width="12.4" height="12.4" fill="#f6f6f0"/><rect x="518.3" y="72.3" width="12.4" height="12.4" fill="#f7f7f2"/><rect x="530.4" y="72.3" width="12.4" height="12.4" fill="#f8f8f3"/><rect x="542.4" y="72.3" width="12.4" height="12.4" fill="#f9f9f5"/><rect x="554.5" y="72.3" width="12.4" height="12.4" fill="#fafaf6"/><rect x="566.5" y="72.3" width="12.4" height="12.4" fill="#fafaf7"/><rect x="578.6" y="72.3" width="12.4" height="12.4" fill="#fbfbf8"/><rect x="590.6" y="72.3" width="12.4" height="12.4" fill="#fbfbf9"/><rect x="0.0" y="84.4" width="108.8" height="12.4" fill="#000000"/><rect x="108.5" y="84.4" width="12.4" height="12.4" fill="#000100"/><rect x="120.5" y="84.4" width="12.4" height="12.4" fill="#010300"/><rect x="132.6" y="84.4" width="12.4" height="12.4" fill="#030500"/><rect x="144.6" y="84.4" width="12.4" height="12.4" fill="#050700"/><rect x="156.7" y="84.4" width="12.4" height="12.4" fill="#080a00"/><rect x="168.8" y="84.4" width="12.4" height="12.4" fill="#0a0c00"/><rect x="180.8" y="84.4" width="12.4" height="12.4" fill="#0d0f00"/><rect x="192.9" y="84.4" width="12.4" height="12.4" fill="#0f1203"/><rect x="204.9" y="84.4" width="12.4" height="12.4" fill="#121506"/><rect x="217.0" y="84.4" width="12.4" height="12.4" fill="#161a07"/><rect x="229.0" y="84.4" width="12.4" height="12.4" fill="#1b2007"/><rect x="241.1" y="84.4" width="12.4" height="12.4" fill="#212705"/><rect x="253.1" y="84.4" width="12.4" height="12.4" fill="#293100"/><rect x="265.2" y="84.4" width="12.4" height="12.4" fill="#333e00"/><rect x="277.2" y="84.4" width="12.4" height="12.4" fill="#414f00"/><rect x="289.3" y="84.4" width="12.4" height="12.4" fill="#526300"/><rect x="301.4" y="84.4" width="12.4" height="12.4" fill="#677b00"/><rect x="313.4" y="84.4" width="12.4" height="12.4" fill="#809200"/><rect x="325.5" y="84.4" width="12.4" height="12.4" fill="#97a62d"/><rect x="337.5" y="84.4" width="12.4" height="12.4" fill="#abb752"/><rect x="349.6" y="84.4" width="12.4" height="12.4" fill="#bbc472"/><rect x="361.6" y="84.4" width="12.4" height="12.4" fill="#c7cf8c"/><rect x="373.7" y="84.4" width="12.4" height="12.4" fill="#d1d7a2"/><rect x="385.7" y="84.4" width="12.4" height="12.4" fill="#d9ddb4"/><rect x="397.8" y="84.4" width="12.4" height="12.4" fill="#dfe2c2"/><rect x="409.8" y="84.4" width="12.4" height="12.4" fill="#e4e7cc"/><rect x="421.9" y="84.4" width="12.4" height="12.4" fill="#e8ead5"/><rect x="433.9" y="84.4" width="12.4" height="12.4" fill="#ebeddc"/><rect x="446.0" y="84.4" width="12.4" height="12.4" fill="#edefe1"/><rect x="458.1" y="84.4" width="12.4" height="12.4" fill="#f0f1e5"/><rect x="470.1" y="84.4" width="12.4" height="12.4" fill="#f2f3e9"/><rect x="482.2" y="84.4" width="12.4" height="12.4" fill="#f3f4ec"/><rect x="494.2" y="84.4" width="12.4" height="12.4" fill="#f5f6ef"/><rect x="506.3" y="84.4" width="12.4" height="12.4" fill="#f6f7f1"/><rect x="518.3" y="84.4" width="12.4" height="12.4" fill="#f7f8f2"/><rect x="530.4" y="84.4" width="12.4" height="12.4" fill="#f8f9f4"/><rect x="542.4" y="84.4" width="12.4" height="12.4" fill="#f9f9f5"/><rect x="554.5" y="84.4" width="12.4" height="12.4" fill="#fafaf6"/><rect x="566.5" y="84.4" width="12.4" height="12.4" fill="#fafbf7"/><rect x="578.6" y="84.4" width="12.4" height="12.4" fill="#fbfbf8"/><rect x="590.6" y="84.4" width="12.4" height="12.4" fill="#fbfcf9"/><rect x="0.0" y="96.4" width="108.8" height="12.4" fill="#000000"/><rect x="108.5" y="96.4" width="12.4" height="12.4" fill="#000100"/><rect x="120.5" y="96.4" width="12.4" height="12.4" fill="#000300"/><rect x="132.6" y="96.4" width="12.4" height="12.4" fill="#020500"/><rect x="144.6" y="96.4" width="12.4" height="12.4" fill="#040800"/><rect x="156.7" y="96.4" width="12.4" height="12.4" fill="#060a00"/><rect x="168.8" y="96.4" width="12.4" height="12.4" fill="#090d00"/><rect x="180.8" y="96.4" width="12.4" height="12.4" fill="#0c0f00"/><rect x="192.9" y="96.4" width="12.4" height="12.4" fill="#0e1203"/><rect x="204.9" y="96.4" width="12.4" height="12.4" fill="#101606"/><rect x="217.0" y="96.4" width="12.4" height="12.4" fill="#131b07"/><rect x="229.0" y="96.4" width="12.4" height="12.4" fill="#172106"/><rect x="241.1" y="96.4" width="12.4" height="12.4" fill="#1c2905"/><rect x="253.1" y="96.4" width="12.4" height="12.4" fill="#233400"/><rect x="265.2" y="96.4" width="12.4" height="12.4" fill="#2c4200"/><rect x="277.2" y="96.4" width="12.4" height="12.4" fill="#375300"/><rect x="289.3" y="96.4" width="12.4" height="12.4" fill="#466800"/><rect x="301.4" y="96.4" width="12.4" height="12.4" fill="#5a8000"/><rect x="313.4" y="96.4" width="12.4" height="12.4" fill="#749700"/><rect x="325.5" y="96.4" width="12.4" height="12.4" fill="#8dab2f"/><rect x="337.5" y="96.4" width="12.4" height="12.4" fill="#a2bb53"/><rect x="349.6" y="96.4" width="12.4" height="12.4" fill="#b4c773"/><rect x="361.6" y="96.4" width="12.4" height="12.4" fill="#c2d18d"/><rect x="373.7" y="96.4" width="12.4" height="12.4" fill="#cdd9a3"/><rect x="385.7" y="96.4" width="12.4" height="12.4" fill="#d5dfb4"/><rect x="397.8" y="96.4" width="12.4" height="12.4" fill="#dce4c2"/><rect x="409.8" y="96.4" width="12.4" height="12.4" fill="#e1e8cd"/><rect x="421.9" y="96.4" width="12.4" height="12.4" fill="#e6ebd5"/><rect x="433.9" y="96.4" width="12.4" height="12.4" fill="#e9eedc"/><rect x="446.0" y="96.4" width="12.4" height="12.4" fill="#ecf0e1"/><rect x="458.1" y="96.4" width="12.4" height="12.4" fill="#eff2e6"/><rect x="470.1" y="96.4" width="12.4" height="12.4" fill="#f1f3e9"/><rect x="482.2" y="96.4" width="12.4" height="12.4" fill="#f3f5ec"/><rect x="494.2" y="96.4" width="12.4" height="12.4" fill="#f4f6ef"/><rect x="506.3" y="96.4" width="12.4" height="12.4" fill="#f5f7f1"/><rect x="518.3" y="96.4" width="12.4" height="12.4" fill="#f7f8f2"/><rect x="530.4" y="96.4" width="12.4" height="12.4" fill="#f8f9f4"/><rect x="542.4" y="96.4" width="12.4" height="12.4" fill="#f8faf5"/><rect x="554.5" y="96.4" width="12.4" height="12.4" fill="#f9faf7"/><rect x="566.5" y="96.4" width="12.4" height="12.4" fill="#fafbf8"/><rect x="578.6" y="96.4" width="12.4" height="12.4" fill="#fbfbf8"/><rect x="590.6" y="96.4" width="12.4" height="12.4" fill="#fbfcf9"/><rect x="0.0" y="108.5" width="108.8" height="12.4" fill="#000000"/><rect x="108.5" y="108.5" width="12.4" height="12.4" fill="#000100"/><rect x="120.5" y="108.5" width="12.4" height="12.4" fill="#000300"/><rect x="132.6" y="108.5" width="12.4" height="12.4" fill="#000500"/><rect x="144.6" y="108.5" width="12.4" height="12.4" fill="#000700"/><rect x="156.7" y="108.5" width="12.4" height="12.4" fill="#030a00"/><rect x="168.8" y="108.5" width="12.4" height="12.4" fill="#060d00"/><rect x="180.8" y="108.5" width="12.4" height="12.4" fill="#090f00"/><rect x="192.9" y="108.5" width="12.4" height="12.4" fill="#0b1202"/><rect x="204.9" y="108.5" width="12.4" height="12.4" fill="#0d1605"/><rect x="217.0" y="108.5" width="12.4" height="12.4" fill="#0f1a07"/><rect x="229.0" y="108.5" width="12.4" height="12.4" fill="#122006"/><rect x="241.1" y="108.5" width="12.4" height="12.4" fill="#152805"/><rect x="253.1" y="108.5" width="12.4" height="12.4" fill="#193300"/><rect x="265.2" y="108.5" width="12.4" height="12.4" fill="#1e4000"/><rect x="277.2" y="108.5" width="12.4" height="12.4" fill="#255100"/><rect x="289.3" y="108.5" width="12.4" height="12.4" fill="#306600"/><rect x="301.4" y="108.5" width="12.4" height="12.4" fill="#407e00"/><rect x="313.4" y="108.5" width="12.4" height="12.4" fill="#599600"/><rect x="325.5" y="108.5" width="12.4" height="12.4" fill="#76aa22"/><rect x="337.5" y="108.5" width="12.4" height="12.4" fill="#8fba48"/><rect x="349.6" y="108.5" width="12.4" height="12.4" fill="#a4c769"/><rect x="361.6" y="108.5" width="12.4" height="12.4" fill="#b6d185"/><rect x="373.7" y="108.5" width="12.4" height="12.4" fill="#c3d99d"/><rect x="385.7" y="108.5" width="12.4" height="12.4" fill="#cedfaf"/><rect x="397.8" y="108.5" width="12.4" height="12.4" fill="#d6e4be"/><rect x="409.8" y="108.5" width="12.4" height="12.4" fill="#dce8ca"/><rect x="421.9" y="108.5" width="12.4" height="12.4" fill="#e2ebd3"/><rect x="433.9" y="108.5" width="12.4" height="12.4" fill="#e6eeda"/><rect x="446.0" y="108.5" width="12.4" height="12.4" fill="#eaf0e0"/><rect x="458.1" y="108.5" width="12.4" height="12.4" fill="#ecf2e4"/><rect x="470.1" y="108.5" width="12.4" height="12.4" fill="#eff3e8"/><rect x="482.2" y="108.5" width="12.4" height="12.4" fill="#f1f5eb"/><rect x="494.2" y="108.5" width="12.4" height="12.4" fill="#f3f6ee"/><rect x="506.3" y="108.5" width="12.4" height="12.4" fill="#f4f7f0"/><rect x="518.3" y="108.5" width="12.4" height="12.4" fill="#f6f8f2"/><rect x="530.4" y="108.5" width="12.4" height="12.4" fill="#f7f9f4"/><rect x="542.4" y="108.5" width="12.4" height="12.4" fill="#f8faf5"/><rect x="554.5" y="108.5" width="12.4" height="12.4" fill="#f9faf6"/><rect x="566.5" y="108.5" width="12.4" height="12.4" fill="#f9fbf7"/><rect x="578.6" y="108.5" width="12.4" height="12.4" fill="#fafbf8"/><rect x="590.6" y="108.5" width="12.4" height="12.4" fill="#fbfcf9"/><rect x="0.0" y="120.5" width="108.8" height="12.4" fill="#000000"/><rect x="108.5" y="120.5" width="12.4" height="12.4" fill="#000100"/><rect x="120.5" y="120.5" width="12.4" height="12.4" fill="#000300"/><rect x="132.6" y="120.5" width="12.4" height="12.4" fill="#000500"/><rect x="144.6" y="120.5" width="12.4" height="12.4" fill="#000700"/><rect x="156.7" y="120.5" width="12.4" height="12.4" fill="#000a00"/><rect x="168.8" y="120.5" width="12.4" height="12.4" fill="#000d00"/><rect x="180.8" y="120.5" width="12.4" height="12.4" fill="#040f00"/><rect x="192.9" y="120.5" width="12.4" height="12.4" fill="#071200"/><rect x="204.9" y="120.5" width="12.4" height="12.4" fill="#091504"/><rect x="217.0" y="120.5" width="12.4" height="12.4" fill="#091a06"/><rect x="229.0" y="120.5" width="12.4" height="12.4" fill="#0a2006"/><rect x="241.1" y="120.5" width="12.4" height="12.4" fill="#0a2705"/><rect x="253.1" y="120.5" width="12.4" height="12.4" fill="#083100"/><rect x="265.2" y="120.5" width="12.4" height="12.4" fill="#023e00"/><rect x="277.2" y="120.5" width="12.4" height="12.4" fill="#004f00"/><rect x="289.3" y="120.5" width="12.4" height="12.4" fill="#006300"/><rect x="301.4" y="120.5" width="12.4" height="12.4" fill="#0c7b00"/><rect x="313.4" y="120.5" width="12.4" height="12.4" fill="#2c9400"/><rect x="325.5" y="120.5" width="12.4" height="12.4" fill="#51a913"/><rect x="337.5" y="120.5" width="12.4" height="12.4" fill="#72ba3c"/><rect x="349.6" y="120.5" width="12.4" height="12.4" fill="#8dc75f"/><rect x="361.6" y="120.5" width="12.4" height="12.4" fill="#a4d27d"/><rect x="373.7" y="120.5" width="12.4" height="12.4" fill="#b5d995"/><rect x="385.7" y="120.5" width="12.4" height="12.4" fill="#c3dfaa"/><rect x="397.8" y="120.5" width="12.4" height="12.4" fill="#cde4b9"/><rect x="409.8" y="120.5" width="12.4" height="12.4" fill="#d6e8c6"/><rect x="421.9" y="120.5" width="12.4" height="12.4" fill="#dcebd0"/><rect x="433.9" y="120.5" width="12.4" height="12.4" fill="#e2eed8"/><rect x="446.0" y="120.5" width="12.4" height="12.4" fill="#e6f0de"/><rect x="458.1" y="120.5" width="12.4" height="12.4" fill="#e9f2e3"/><rect x="470.1" y="120.5" width="12.4" height="12.4" fill="#ecf4e7"/><rect x="482.2" y="120.5" width="12.4" height="12.4" fill="#eff5ea"/><rect x="494.2" y="120.5" width="12.4" height="12.4" fill="#f1f6ed"/><rect x="506.3" y="120.5" width="12.4" height="12.4" fill="#f3f7ef"/><rect x="518.3" y="120.5" width="12.4" height="12.4" fill="#f4f8f1"/><rect x="530.4" y="120.5" width="12.4" height="12.4" fill="#f5f9f3"/><rect x="542.4" y="120.5" width="12.4" height="12.4" fill="#f7faf5"/><rect x="554.5" y="120.5" width="12.4" height="12.4" fill="#f8faf6"/><rect x="566.5" y="120.5" width="12.4" height="12.4" fill="#f8fbf7"/><rect x="578.6" y="120.5" width="12.4" height="12.4" fill="#f9fbf8"/><rect x="590.6" y="120.5" width="12.4" height="12.4" fill="#fafcf9"/><rect x="0.0" y="132.6" width="108.8" height="12.4" fill="#000000"/><rect x="108.5" y="132.6" width="12.4" height="12.4" fill="#000100"/><rect x="120.5" y="132.6" width="12.4" height="12.4" fill="#000300"/><rect x="132.6" y="132.6" width="12.4" height="12.4" fill="#000500"/><rect x="144.6" y="132.6" width="12.4" height="12.4" fill="#000700"/><rect x="156.7" y="132.6" width="12.4" height="12.4" fill="#000a01"/><rect x="168.8" y="132.6" width="12.4" height="12.4" fill="#000d03"/><rect x="180.8" y="132.6" width="12.4" height="12.4" fill="#050f06"/><rect x="192.9" y="132.6" width="12.4" height="12.4" fill="#081209"/><rect x="204.9" y="132.6" width="12.4" height="12.4" fill="#09160b"/><rect x="217.0" y="132.6" width="12.4" height="12.4" fill="#091a0d"/><rect x="229.0" y="132.6" width="12.4" height="12.4" fill="#0a200f"/><rect x="241.1" y="132.6" width="12.4" height="12.4" fill="#0a2812"/><rect x="253.1" y="132.6" width="12.4" height="12.4" fill="#083215"/><rect x="265.2" y="132.6" width="12.4" height="12.4" fill="#004019"/><rect x="277.2" y="132.6" width="12.4" height="12.4" fill="#00511e"/><rect x="289.3" y="132.6" width="12.4" height="12.4" fill="#006626"/><rect x="301.4" y="132.6" width="12.4" height="12.4" fill="#127e32"/><rect x="313.4" y="132.6" width="12.4" height="12.4" fill="#319643"/><rect x="325.5" y="132.6" width="12.4" height="12.4" fill="#56aa5b"/><rect x="337.5" y="132.6" width="12.4" height="12.4" fill="#74ba76"/><rect x="349.6" y="132.6" width="12.4" height="12.4" fill="#8fc78e"/><rect x="361.6" y="132.6" width="12.4" height="12.4" fill="#a5d1a3"/><rect x="373.7" y="132.6" width="12.4" height="12.4" fill="#b6d9b4"/><rect x="385.7" y="132.6" width="12.4" height="12.4" fill="#c3dfc2"/><rect x="397.8" y="132.6" width="12.4" height="12.4" fill="#cde4cc"/><rect x="409.8" y="132.6" width="12.4" height="12.4" fill="#d6e8d5"/><rect x="421.9" y="132.6" width="12.4" height="12.4" fill="#dcebdc"/><rect x="433.9" y="132.6" width="12.4" height="12.4" fill="#e2eee1"/><rect x="446.0" y="132.6" width="12.4" height="12.4" fill="#e6f0e5"/><rect x="458.1" y="132.6" width="12.4" height="12.4" fill="#e9f2e9"/><rect x="470.1" y="132.6" width="12.4" height="12.4" fill="#ecf3ec"/><rect x="482.2" y="132.6" width="12.4" height="12.4" fill="#eff5ef"/><rect x="494.2" y="132.6" width="12.4" height="12.4" fill="#f1f6f1"/><rect x="506.3" y="132.6" width="12.4" height="12.4" fill="#f3f7f3"/><rect x="518.3" y="132.6" width="12.4" height="12.4" fill="#f4f8f4"/><rect x="530.4" y="132.6" width="12.4" height="12.4" fill="#f5f9f5"/><rect x="542.4" y="132.6" width="12.4" height="12.4" fill="#f7faf7"/><rect x="554.5" y="132.6" width="12.4" height="12.4" fill="#f8faf8"/><rect x="566.5" y="132.6" width="12.4" height="12.4" fill="#f8fbf8"/><rect x="578.6" y="132.6" width="12.4" height="12.4" fill="#f9fbf9"/><rect x="590.6" y="132.6" width="12.4" height="12.4" fill="#fafcfa"/><rect x="0.0" y="144.6" width="108.8" height="12.4" fill="#000000"/><rect x="108.5" y="144.6" width="12.4" height="12.4" fill="#000100"/><rect x="120.5" y="144.6" width="12.4" height="12.4" fill="#000300"/><rect x="132.6" y="144.6" width="12.4" height="12.4" fill="#000501"/><rect x="144.6" y="144.6" width="12.4" height="12.4" fill="#000803"/><rect x="156.7" y="144.6" width="12.4" height="12.4" fill="#000a05"/><rect x="168.8" y="144.6" width="12.4" height="12.4" fill="#000d07"/><rect x="180.8" y="144.6" width="12.4" height="12.4" fill="#050f0a"/><rect x="192.9" y="144.6" width="12.4" height="12.4" fill="#08120c"/><rect x="204.9" y="144.6" width="12.4" height="12.4" fill="#09160f"/><rect x="217.0" y="144.6" width="12.4" height="12.4" fill="#091b12"/><rect x="229.0" y="144.6" width="12.4" height="12.4" fill="#0a2115"/><rect x="241.1" y="144.6" width="12.4" height="12.4" fill="#09291a"/><rect x="253.1" y="144.6" width="12.4" height="12.4" fill="#07341f"/><rect x="265.2" y="144.6" width="12.4" height="12.4" fill="#004127"/><rect x="277.2" y="144.6" width="12.4" height="12.4" fill="#005331"/><rect x="289.3" y="144.6" width="12.4" height="12.4" fill="#00683e"/><rect x="301.4" y="144.6" width="12.4" height="12.4" fill="#13804f"/><rect x="313.4" y="144.6" width="12.4" height="12.4" fill="#359765"/><rect x="325.5" y="144.6" width="12.4" height="12.4" fill="#59ab7e"/><rect x="337.5" y="144.6" width="12.4" height="12.4" fill="#77bb94"/><rect x="349.6" y="144.6" width="12.4" height="12.4" fill="#91c7a7"/><rect x="361.6" y="144.6" width="12.4" height="12.4" fill="#a6d1b7"/><rect x="373.7" y="144.6" width="12.4" height="12.4" fill="#b7d9c4"/><rect x="385.7" y="144.6" width="12.4" height="12.4" fill="#c4dfce"/><rect x="397.8" y="144.6" width="12.4" height="12.4" fill="#cee4d6"/><rect x="409.8" y="144.6" width="12.4" height="12.4" fill="#d6e8dd"/><rect x="421.9" y="144.6" width="12.4" height="12.4" fill="#ddebe2"/><rect x="433.9" y="144.6" width="12.4" height="12.4" fill="#e2eee6"/><rect x="446.0" y="144.6" width="12.4" height="12.4" fill="#e6f0ea"/><rect x="458.1" y="144.6" width="12.4" height="12.4" fill="#eaf2ed"/><rect x="470.1" y="144.6" width="12.4" height="12.4" fill="#edf3ef"/><rect x="482.2" y="144.6" width="12.4" height="12.4" fill="#eff5f1"/><rect x="494.2" y="144.6" width="12.4" height="12.4" fill="#f1f6f3"/><rect x="506.3" y="144.6" width="12.4" height="12.4" fill="#f3f7f4"/><rect x="518.3" y="144.6" width="12.4" height="12.4" fill="#f4f8f6"/><rect x="530.4" y="144.6" width="12.4" height="12.4" fill="#f6f9f7"/><rect x="542.4" y="144.6" width="12.4" height="12.4" fill="#f7faf8"/><rect x="554.5" y="144.6" width="12.4" height="12.4" fill="#f8faf9"/><rect x="566.5" y="144.6" width="12.4" height="12.4" fill="#f9fbf9"/><rect x="578.6" y="144.6" width="12.4" height="12.4" fill="#f9fbfa"/><rect x="590.6" y="144.6" width="12.4" height="12.4" fill="#fafcfb"/><rect x="0.0" y="156.7" width="108.8" height="12.4" fill="#000000"/><rect x="108.5" y="156.7" width="12.4" height="12.4" fill="#000100"/><rect x="120.5" y="156.7" width="12.4" height="12.4" fill="#000301"/><rect x="132.6" y="156.7" width="12.4" height="12.4" fill="#000503"/><rect x="144.6" y="156.7" width="12.4" height="12.4" fill="#000805"/><rect x="156.7" y="156.7" width="12.4" height="12.4" fill="#000a07"/><rect x="168.8" y="156.7" width="12.4" height="12.4" fill="#000d0a"/><rect x="180.8" y="156.7" width="12.4" height="12.4" fill="#050f0c"/><rect x="192.9" y="156.7" width="12.4" height="12.4" fill="#08120f"/><rect x="204.9" y="156.7" width="12.4" height="12.4" fill="#081612"/><rect x="217.0" y="156.7" width="12.4" height="12.4" fill="#091b15"/><rect x="229.0" y="156.7" width="12.4" height="12.4" fill="#09211a"/><rect x="241.1" y="156.7" width="12.4" height="12.4" fill="#092920"/><rect x="253.1" y="156.7" width="12.4" height="12.4" fill="#053428"/><rect x="265.2" y="156.7" width="12.4" height="12.4" fill="#004232"/><rect x="277.2" y="156.7" width="12.4" height="12.4" fill="#00533f"/><rect x="289.3" y="156.7" width="12.4" height="12.4" fill="#006850"/><rect x="301.4" y="156.7" width="12.4" height="12.4" fill="#118065"/><rect x="313.4" y="156.7" width="12.4" height="12.4" fill="#35977c"/><rect x="325.5" y="156.7" width="12.4" height="12.4" fill="#5aab92"/><rect x="337.5" y="156.7" width="12.4" height="12.4" fill="#79baa6"/><rect x="349.6" y="156.7" width="12.4" height="12.4" fill="#92c7b6"/><rect x="361.6" y="156.7" width="12.4" height="12.4" fill="#a7d1c3"/><rect x="373.7" y="156.7" width="12.4" height="12.4" fill="#b8d8cd"/><rect x="385.7" y="156.7" width="12.4" height="12.4" fill="#c5ded6"/><rect x="397.8" y="156.7" width="12.4" height="12.4" fill="#cfe3dc"/><rect x="409.8" y="156.7" width="12.4" height="12.4" fill="#d7e7e2"/><rect x="421.9" y="156.7" width="12.4" height="12.4" fill="#ddebe6"/><rect x="433.9" y="156.7" width="12.4" height="12.4" fill="#e2edea"/><rect x="446.0" y="156.7" width="12.4" height="12.4" fill="#e6f0ec"/><rect x="458.1" y="156.7" width="12.4" height="12.4" fill="#eaf2ef"/><rect x="470.1" y="156.7" width="12.4" height="12.4" fill="#edf3f1"/><rect x="482.2" y="156.7" width="12.4" height="12.4" fill="#eff5f3"/><rect x="494.2" y="156.7" width="12.4" height="12.4" fill="#f1f6f4"/><rect x="506.3" y="156.7" width="12.4" height="12.4" fill="#f3f7f6"/><rect x="518.3" y="156.7" width="12.4" height="12.4" fill="#f4f8f7"/><rect x="530.4" y="156.7" width="12.4" height="12.4" fill="#f6f9f8"/><rect x="542.4" y="156.7" width="12.4" height="12.4" fill="#f7faf9"/><rect x="554.5" y="156.7" width="12.4" height="12.4" fill="#f8faf9"/><rect x="566.5" y="156.7" width="12.4" height="12.4" fill="#f9fbfa"/><rect x="578.6" y="156.7" width="12.4" height="12.4" fill="#f9fbfb"/><rect x="590.6" y="156.7" width="12.4" height="12.4" fill="#fafcfb"/><rect x="0.0" y="168.7" width="108.8" height="12.4" fill="#000000"/><rect x="108.5" y="168.7" width="12.4" height="12.4" fill="#000101"/><rect x="120.5" y="168.7" width="12.4" height="12.4" fill="#000302"/><rect x="132.6" y="168.7" width="12.4" height="12.4" fill="#000504"/><rect x="144.6" y="168.7" width="12.4" height="12.4" fill="#000807"/><rect x="156.7" y="168.7" width="12.4" height="12.4" fill="#000a09"/><rect x="168.8" y="168.7" width="12.4" height="12.4" fill="#000d0c"/><rect x="180.8" y="168.7" width="12.4" height="12.4" fill="#050f0e"/><rect x="192.9" y="168.7" width="12.4" height="12.4" fill="#071211"/><rect x="204.9" y="168.7" width="12.4" height="12.4" fill="#081614"/><rect x="217.0" y="168.7" width="12.4" height="12.4" fill="#091b18"/><rect x="229.0" y="168.7" width="12.4" height="12.4" fill="#09211e"/><rect x="241.1" y="168.7" width="12.4" height="12.4" fill="#082925"/><rect x="253.1" y="168.7" width="12.4" height="12.4" fill="#02332e"/><rect x="265.2" y="168.7" width="12.4" height="12.4" fill="#00413a"/><rect x="277.2" y="168.7" width="12.4" height="12.4" fill="#00524a"/><rect x="289.3" y="168.7" width="12.4" height="12.4" fill="#00675d"/><rect x="301.4" y="168.7" width="12.4" height="12.4" fill="#0b7f74"/><rect x="313.4" y="168.7" width="12.4" height="12.4" fill="#34968b"/><rect x="325.5" y="168.7" width="12.4" height="12.4" fill="#59a99f"/><rect x="337.5" y="168.7" width="12.4" height="12.4" fill="#78b9b1"/><rect x="349.6" y="168.7" width="12.4" height="12.4" fill="#92c6bf"/><rect x="361.6" y="168.7" width="12.4" height="12.4" fill="#a7d0ca"/><rect x="373.7" y="168.7" width="12.4" height="12.4" fill="#b8d8d3"/><rect x="385.7" y="168.7" width="12.4" height="12.4" fill="#c5deda"/><rect x="397.8" y="168.7" width="12.4" height="12.4" fill="#cfe3e0"/><rect x="409.8" y="168.7" width="12.4" height="12.4" fill="#d7e7e5"/><rect x="421.9" y="168.7" width="12.4" height="12.4" fill="#ddeae8"/><rect x="433.9" y="168.7" width="12.4" height="12.4" fill="#e2edec"/><rect x="446.0" y="168.7" width="12.4" height="12.4" fill="#e6efee"/><rect x="458.1" y="168.7" width="12.4" height="12.4" fill="#eaf1f0"/><rect x="470.1" y="168.7" width="12.4" height="12.4" fill="#edf3f2"/><rect x="482.2" y="168.7" width="12.4" height="12.4" fill="#eff5f4"/><rect x="494.2" y="168.7" width="12.4" height="12.4" fill="#f1f6f5"/><rect x="506.3" y="168.7" width="12.4" height="12.4" fill="#f3f7f6"/><rect x="518.3" y="168.7" width="12.4" height="12.4" fill="#f4f8f7"/><rect x="530.4" y="168.7" width="12.4" height="12.4" fill="#f6f9f8"/><rect x="542.4" y="168.7" width="12.4" height="12.4" fill="#f7faf9"/><rect x="554.5" y="168.7" width="12.4" height="12.4" fill="#f8fafa"/><rect x="566.5" y="168.7" width="12.4" height="12.4" fill="#f9fbfa"/><rect x="578.6" y="168.7" width="12.4" height="12.4" fill="#f9fbfb"/><rect x="590.6" y="168.7" width="12.4" height="12.4" fill="#fafcfc"/><rect x="0.0" y="180.8" width="108.8" height="12.4" fill="#000000"/><rect x="108.5" y="180.8" width="12.4" height="12.4" fill="#000101"/><rect x="120.5" y="180.8" width="12.4" height="12.4" fill="#000303"/><rect x="132.6" y="180.8" width="12.4" height="12.4" fill="#000505"/><rect x="144.6" y="180.8" width="12.4" height="12.4" fill="#000708"/><rect x="156.7" y="180.8" width="12.4" height="12.4" fill="#000a0a"/><rect x="168.8" y="180.8" width="12.4" height="12.4" fill="#000d0d"/><rect x="180.8" y="180.8" width="12.4" height="12.4" fill="#050f0f"/><rect x="192.9" y="180.8" width="12.4" height="12.4" fill="#071212"/><rect x="204.9" y="180.8" width="12.4" height="12.4" fill="#081616"/><rect x="217.0" y="180.8" width="12.4" height="12.4" fill="#081a1b"/><rect x="229.0" y="180.8" width="12.4" height="12.4" fill="#082021"/><rect x="241.1" y="180.8" width="12.4" height="12.4" fill="#062829"/><rect x="253.1" y="180.8" width="12.4" height="12.4" fill="#003234"/><rect x="265.2" y="180.8" width="12.4" height="12.4" fill="#004042"/><rect x="277.2" y="180.8" width="12.4" height="12.4" fill="#005053"/><rect x="289.3" y="180.8" width="12.4" height="12.4" fill="#006568"/><rect x="301.4" y="180.8" width="12.4" height="12.4" fill="#007d80"/><rect x="313.4" y="180.8" width="12.4" height="12.4" fill="#329496"/><rect x="325.5" y="180.8" width="12.4" height="12.4" fill="#59a8a9"/><rect x="337.5" y="180.8" width="12.4" height="12.4" fill="#78b8b9"/><rect x="349.6" y="180.8" width="12.4" height="12.4" fill="#92c5c6"/><rect x="361.6" y="180.8" width="12.4" height="12.4" fill="#a7cfcf"/><rect x="373.7" y="180.8" width="12.4" height="12.4" fill="#b7d7d7"/><rect x="385.7" y="180.8" width="12.4" height="12.4" fill="#c4ddde"/><rect x="397.8" y="180.8" width="12.4" height="12.4" fill="#cfe2e3"/><rect x="409.8" y="180.8" width="12.4" height="12.4" fill="#d7e7e7"/><rect x="421.9" y="180.8" width="12.4" height="12.4" fill="#ddeaea"/><rect x="433.9" y="180.8" width="12.4" height="12.4" fill="#e2eded"/><rect x="446.0" y="180.8" width="12.4" height="12.4" fill="#e6efef"/><rect x="458.1" y="180.8" width="12.4" height="12.4" fill="#eaf1f1"/><rect x="470.1" y="180.8" width="12.4" height="12.4" fill="#edf3f3"/><rect x="482.2" y="180.8" width="12.4" height="12.4" fill="#eff4f5"/><rect x="494.2" y="180.8" width="12.4" height="12.4" fill="#f1f6f6"/><rect x="506.3" y="180.8" width="12.4" height="12.4" fill="#f3f7f7"/><rect x="518.3" y="180.8" width="12.4" height="12.4" fill="#f4f8f8"/><rect x="530.4" y="180.8" width="12.4" height="12.4" fill="#f6f9f9"/><rect x="542.4" y="180.8" width="12.4" height="12.4" fill="#f7f9f9"/><rect x="554.5" y="180.8" width="12.4" height="12.4" fill="#f8fafa"/><rect x="566.5" y="180.8" width="24.4" height="12.4" fill="#f9fbfb"/><rect x="590.6" y="180.8" width="12.4" height="12.4" fill="#fafcfc"/><rect x="0.0" y="192.8" width="108.8" height="12.4" fill="#000000"/><rect x="108.5" y="192.8" width="12.4" height="12.4" fill="#000102"/><rect x="120.5" y="192.8" width="12.4" height="12.4" fill="#000203"/><rect x="132.6" y="192.8" width="12.4" height="12.4" fill="#000406"/><rect x="144.6" y="192.8" width="12.4" height="12.4" fill="#000608"/><rect x="156.7" y="192.8" width="12.4" height="12.4" fill="#00090b"/><rect x="168.8" y="192.8" width="12.4" height="12.4" fill="#000c0d"/><rect x="180.8" y="192.8" width="12.4" height="12.4" fill="#030e10"/><rect x="192.9" y="192.8" width="12.4" height="12.4" fill="#071113"/><rect x="204.9" y="192.8" width="12.4" height="12.4" fill="#071417"/><rect x="217.0" y="192.8" width="12.4" height="12.4" fill="#08181c"/><rect x="229.0" y="192.8" width="12.4" height="12.4" fill="#071e22"/><rect x="241.1" y="192.8" width="12.4" height="12.4" fill="#05252b"/><rect x="253.1" y="192.8" width="12.4" height="12.4" fill="#002e36"/><rect x="265.2" y="192.8" width="12.4" height="12.4" fill="#003a44"/><rect x="277.2" y="192.8" width="12.4" height="12.4" fill="#004956"/><rect x="289.3" y="192.8" width="12.4" height="12.4" fill="#005c6b"/><rect x="301.4" y="192.8" width="12.4" height="12.4" fill="#007384"/><rect x="313.4" y="192.8" width="12.4" height="12.4" fill="#218b9a"/><rect x="325.5" y="192.8" width="12.4" height="12.4" fill="#4ca0ad"/><rect x="337.5" y="192.8" width="12.4" height="12.4" fill="#6db1bc"/><rect x="349.6" y="192.8" width="12.4" height="12.4" fill="#89c0c8"/><rect x="361.6" y="192.8" width="12.4" height="12.4" fill="#a0cbd2"/><rect x="373.7" y="192.8" width="12.4" height="12.4" fill="#b2d4d9"/><rect x="385.7" y="192.8" width="12.4" height="12.4" fill="#c0dbdf"/><rect x="397.8" y="192.8" width="12.4" height="12.4" fill="#cbe0e4"/><rect x="409.8" y="192.8" width="12.4" height="12.4" fill="#d4e5e8"/><rect x="421.9" y="192.8" width="12.4" height="12.4" fill="#dbe9eb"/><rect x="433.9" y="192.8" width="12.4" height="12.4" fill="#e1ecee"/><rect x="446.0" y="192.8" width="12.4" height="12.4" fill="#e5eef0"/><rect x="458.1" y="192.8" width="12.4" height="12.4" fill="#e9f0f2"/><rect x="470.1" y="192.8" width="12.4" height="12.4" fill="#ecf2f3"/><rect x="482.2" y="192.8" width="12.4" height="12.4" fill="#eef4f5"/><rect x="494.2" y="192.8" width="12.4" height="12.4" fill="#f0f5f6"/><rect x="506.3" y="192.8" width="12.4" height="12.4" fill="#f2f6f7"/><rect x="518.3" y="192.8" width="12.4" height="12.4" fill="#f4f7f8"/><rect x="530.4" y="192.8" width="12.4" height="12.4" fill="#f5f8f9"/><rect x="542.4" y="192.8" width="12.4" height="12.4" fill="#f6f9fa"/><rect x="554.5" y="192.8" width="12.4" height="12.4" fill="#f7fafa"/><rect x="566.5" y="192.8" width="12.4" height="12.4" fill="#f8fafb"/><rect x="578.6" y="192.8" width="12.4" height="12.4" fill="#f9fbfb"/><rect x="590.6" y="192.8" width="12.4" height="12.4" fill="#fafcfc"/><rect x="0.0" y="204.9" width="108.8" height="12.4" fill="#000000"/><rect x="108.5" y="204.9" width="12.4" height="12.4" fill="#000002"/><rect x="120.5" y="204.9" width="12.4" height="12.4" fill="#000104"/><rect x="132.6" y="204.9" width="12.4" height="12.4" fill="#000306"/><rect x="144.6" y="204.9" width="12.4" height="12.4" fill="#000508"/><rect x="156.7" y="204.9" width="12.4" height="12.4" fill="#00070b"/><rect x="168.8" y="204.9" width="12.4" height="12.4" fill="#000a0e"/><rect x="180.8" y="204.9" width="12.4" height="12.4" fill="#000d10"/><rect x="192.9" y="204.9" width="12.4" height="12.4" fill="#050f13"/><rect x="204.9" y="204.9" width="12.4" height="12.4" fill="#071217"/><rect x="217.0" y="204.9" width="12.4" height="12.4" fill="#07151c"/><rect x="229.0" y="204.9" width="12.4" height="12.4" fill="#061a23"/><rect x="241.1" y="204.9" width="12.4" height="12.4" fill="#04202c"/><rect x="253.1" y="204.9" width="12.4" height="12.4" fill="#002837"/><rect x="265.2" y="204.9" width="12.4" height="12.4" fill="#003246"/><rect x="277.2" y="204.9" width="12.4" height="12.4" fill="#003f58"/><rect x="289.3" y="204.9" width="12.4" height="12.4" fill="#00506e"/><rect x="301.4" y="204.9" width="12.4" height="12.4" fill="#006587"/><rect x="313.4" y="204.9" width="12.4" height="12.4" fill="#007d9e"/><rect x="325.5" y="204.9" width="12.4" height="12.4" fill="#3994b1"/><rect x="337.5" y="204.9" width="12.4" height="12.4" fill="#5fa8c0"/><rect x="349.6" y="204.9" width="12.4" height="12.4" fill="#7db8cb"/><rect x="361.6" y="204.9" width="12.4" height="12.4" fill="#97c5d4"/><rect x="373.7" y="204.9" width="12.4" height="12.4" fill="#abcfdb"/><rect x="385.7" y="204.9" width="12.4" height="12.4" fill="#bad7e1"/><rect x="397.8" y="204.9" width="12.4" height="12.4" fill="#c7dde5"/><rect x="409.8" y="204.9" width="12.4" height="12.4" fill="#d0e2e9"/><rect x="421.9" y="204.9" width="12.4" height="12.4" fill="#d8e7ec"/><rect x="433.9" y="204.9" width="12.4" height="12.4" fill="#deeaee"/><rect x="446.0" y="204.9" width="12.4" height="12.4" fill="#e3edf1"/><rect x="458.1" y="204.9" width="12.4" height="12.4" fill="#e7eff2"/><rect x="470.1" y="204.9" width="12.4" height="12.4" fill="#eaf1f4"/><rect x="482.2" y="204.9" width="12.4" height="12.4" fill="#edf3f5"/><rect x="494.2" y="204.9" width="12.4" height="12.4" fill="#f0f4f6"/><rect x="506.3" y="204.9" width="12.4" height="12.4" fill="#f1f6f7"/><rect x="518.3" y="204.9" width="12.4" height="12.4" fill="#f3f7f8"/><rect x="530.4" y="204.9" width="12.4" height="12.4" fill="#f5f8f9"/><rect x="542.4" y="204.9" width="12.4" height="12.4" fill="#f6f9fa"/><rect x="554.5" y="204.9" width="12.4" height="12.4" fill="#f7f9fa"/><rect x="566.5" y="204.9" width="12.4" height="12.4" fill="#f8fafb"/><rect x="578.6" y="204.9" width="24.4" height="12.4" fill="#f9fbfc"/><rect x="0.0" y="216.9" width="108.8" height="12.4" fill="#000000"/><rect x="108.5" y="216.9" width="12.4" height="12.4" fill="#000002"/><rect x="120.5" y="216.9" width="12.4" height="12.4" fill="#000004"/><rect x="132.6" y="216.9" width="12.4" height="12.4" fill="#000106"/><rect x="144.6" y="216.9" width="12.4" height="12.4" fill="#000308"/><rect x="156.7" y="216.9" width="12.4" height="12.4" fill="#00050b"/><rect x="168.8" y="216.9" width="12.4" height="12.4" fill="#00080e"/><rect x="180.8" y="216.9" width="12.4" height="12.4" fill="#000a10"/><rect x="192.9" y="216.9" width="12.4" height="12.4" fill="#010d13"/><rect x="204.9" y="216.9" width="12.4" height="12.4" fill="#050f17"/><rect x="217.0" y="216.9" width="12.4" height="12.4" fill="#06121d"/><rect x="229.0" y="216.9" width="12.4" height="12.4" fill="#051623"/><rect x="241.1" y="216.9" width="12.4" height="12.4" fill="#001a2c"/><rect x="253.1" y="216.9" width="12.4" height="12.4" fill="#002037"/><rect x="265.2" y="216.9" width="12.4" height="12.4" fill="#002846"/><rect x="277.2" y="216.9" width="12.4" height="12.4" fill="#003258"/><rect x="289.3" y="216.9" width="12.4" height="12.4" fill="#00406f"/><rect x="301.4" y="216.9" width="12.4" height="12.4" fill="#005188"/><rect x="313.4" y="216.9" width="12.4" height="12.4" fill="#0067a0"/><rect x="325.5" y="216.9" width="12.4" height="12.4" fill="#1380b4"/><rect x="337.5" y="216.9" width="12.4" height="12.4" fill="#4596c3"/><rect x="349.6" y="216.9" width="12.4" height="12.4" fill="#69a9ce"/><rect x="361.6" y="216.9" width="12.4" height="12.4" fill="#86b9d7"/><rect x="373.7" y="216.9" width="12.4" height="12.4" fill="#9dc6de"/><rect x="385.7" y="216.9" width="12.4" height="12.4" fill="#b0d0e3"/><rect x="397.8" y="216.9" width="12.4" height="12.4" fill="#bfd7e7"/><rect x="409.8" y="216.9" width="12.4" height="12.4" fill="#cadeea"/><rect x="421.9" y="216.9" width="12.4" height="12.4" fill="#d3e3ed"/><rect x="433.9" y="216.9" width="12.4" height="12.4" fill="#dae7ef"/><rect x="446.0" y="216.9" width="12.4" height="12.4" fill="#e0eaf1"/><rect x="458.1" y="216.9" width="12.4" height="12.4" fill="#e4edf3"/><rect x="470.1" y="216.9" width="12.4" height="12.4" fill="#e8eff4"/><rect x="482.2" y="216.9" width="12.4" height="12.4" fill="#ebf1f6"/><rect x="494.2" y="216.9" width="12.4" height="12.4" fill="#eef3f7"/><rect x="506.3" y="216.9" width="12.4" height="12.4" fill="#f0f5f8"/><rect x="518.3" y="216.9" width="12.4" height="12.4" fill="#f2f6f9"/><rect x="530.4" y="216.9" width="12.4" height="12.4" fill="#f4f7f9"/><rect x="542.4" y="216.9" width="12.4" height="12.4" fill="#f5f8fa"/><rect x="554.5" y="216.9" width="12.4" height="12.4" fill="#f6f9fb"/><rect x="566.5" y="216.9" width="12.4" height="12.4" fill="#f7f9fb"/><rect x="578.6" y="216.9" width="12.4" height="12.4" fill="#f8fafc"/><rect x="590.6" y="216.9" width="12.4" height="12.4" fill="#f9fbfc"/><rect x="0.0" y="229.0" width="108.8" height="12.4" fill="#000000"/><rect x="108.5" y="229.0" width="12.4" height="12.4" fill="#000001"/><rect x="120.5" y="229.0" width="12.4" height="12.4" fill="#000003"/><rect x="132.6" y="229.0" width="12.4" height="12.4" fill="#000006"/><rect x="144.6" y="229.0" width="12.4" height="12.4" fill="#000008"/><rect x="156.7" y="229.0" width="12.4" height="12.4" fill="#00020b"/><rect x="168.8" y="229.0" width="12.4" height="12.4" fill="#00040e"/><rect x="180.8" y="229.0" width="12.4" height="12.4" fill="#000610"/><rect x="192.9" y="229.0" width="12.4" height="12.4" fill="#000913"/><rect x="204.9" y="229.0" width="12.4" height="12.4" fill="#000b17"/><rect x="217.0" y="229.0" width="12.4" height="12.4" fill="#020e1c"/><rect x="229.0" y="229.0" width="12.4" height="12.4" fill="#011023"/><rect x="241.1" y="229.0" width="12.4" height="12.4" fill="#00132b"/><rect x="253.1" y="229.0" width="12.4" height="12.4" fill="#001736"/><rect x="265.2" y="229.0" width="12.4" height="12.4" fill="#001c44"/><rect x="277.2" y="229.0" width="12.4" height="12.4" fill="#002256"/><rect x="289.3" y="229.0" width="12.4" height="12.4" fill="#002b6d"/><rect x="301.4" y="229.0" width="12.4" height="12.4" fill="#003786"/><rect x="313.4" y="229.0" width="12.4" height="12.4" fill="#0047a0"/><rect x="325.5" y="229.0" width="12.4" height="12.4" fill="#005cb5"/><rect x="337.5" y="229.0" width="12.4" height="12.4" fill="#1175c6"/><rect x="349.6" y="229.0" width="12.4" height="12.4" fill="#448dd2"/><rect x="361.6" y="229.0" width="12.4" height="12.4" fill="#68a2db"/><rect x="373.7" y="229.0" width="12.4" height="12.4" fill="#85b3e2"/><rect x="385.7" y="229.0" width="12.4" height="12.4" fill="#9dc1e6"/><rect x="397.8" y="229.0" width="12.4" height="12.4" fill="#b0ccea"/><rect x="409.8" y="229.0" width="12.4" height="12.4" fill="#bed4ed"/><rect x="421.9" y="229.0" width="12.4" height="12.4" fill="#cadbef"/><rect x="433.9" y="229.0" width="12.4" height="12.4" fill="#d3e1f1"/><rect x="446.0" y="229.0" width="12.4" height="12.4" fill="#dae5f3"/><rect x="458.1" y="229.0" width="12.4" height="12.4" fill="#e0e9f4"/><rect x="470.1" y="229.0" width="12.4" height="12.4" fill="#e4ecf5"/><rect x="482.2" y="229.0" width="12.4" height="12.4" fill="#e8eef6"/><rect x="494.2" y="229.0" width="12.4" height="12.4" fill="#ebf1f7"/><rect x="506.3" y="229.0" width="12.4" height="12.4" fill="#eef2f8"/><rect x="518.3" y="229.0" width="12.4" height="12.4" fill="#f0f4f9"/><rect x="530.4" y="229.0" width="12.4" height="12.4" fill="#f2f5fa"/><rect x="542.4" y="229.0" width="12.4" height="12.4" fill="#f4f6fa"/><rect x="554.5" y="229.0" width="12.4" height="12.4" fill="#f5f7fb"/><rect x="566.5" y="229.0" width="12.4" height="12.4" fill="#f6f8fb"/><rect x="578.6" y="229.0" width="12.4" height="12.4" fill="#f7f9fc"/><rect x="590.6" y="229.0" width="12.4" height="12.4" fill="#f8fafc"/><rect x="0.0" y="241.0" width="108.8" height="12.4" fill="#000000"/><rect x="108.5" y="241.0" width="12.4" height="12.4" fill="#000001"/><rect x="120.5" y="241.0" width="12.4" height="12.4" fill="#000003"/><rect x="132.6" y="241.0" width="12.4" height="12.4" fill="#000005"/><rect x="144.6" y="241.0" width="12.4" height="12.4" fill="#000008"/><rect x="156.7" y="241.0" width="12.4" height="12.4" fill="#00000b"/><rect x="168.8" y="241.0" width="12.4" height="12.4" fill="#00000e"/><rect x="180.8" y="241.0" width="12.4" height="12.4" fill="#000010"/><rect x="192.9" y="241.0" width="12.4" height="12.4" fill="#000113"/><rect x="204.9" y="241.0" width="12.4" height="12.4" fill="#000417"/><rect x="217.0" y="241.0" width="12.4" height="12.4" fill="#00061c"/><rect x="229.0" y="241.0" width="12.4" height="12.4" fill="#000822"/><rect x="241.1" y="241.0" width="12.4" height="12.4" fill="#000a2a"/><rect x="253.1" y="241.0" width="12.4" height="12.4" fill="#000b34"/><rect x="265.2" y="241.0" width="12.4" height="12.4" fill="#000b42"/><rect x="277.2" y="241.0" width="12.4" height="12.4" fill="#000c54"/><rect x="289.3" y="241.0" width="12.4" height="12.4" fill="#000c69"/><rect x="301.4" y="241.0" width="12.4" height="12.4" fill="#000f83"/><rect x="313.4" y="241.0" width="12.4" height="12.4" fill="#00169e"/><rect x="325.5" y="241.0" width="12.4" height="12.4" fill="#0024b5"/><rect x="337.5" y="241.0" width="12.4" height="12.4" fill="#0038c9"/><rect x="349.6" y="241.0" width="12.4" height="12.4" fill="#004fd8"/><rect x="361.6" y="241.0" width="12.4" height="12.4" fill="#3769e3"/><rect x="373.7" y="241.0" width="12.4" height="12.4" fill="#5d83e9"/><rect x="385.7" y="241.0" width="12.4" height="12.4" fill="#7b99ee"/><rect x="397.8" y="241.0" width="12.4" height="12.4" fill="#95acf1"/><rect x="409.8" y="241.0" width="12.4" height="12.4" fill="#a9bbf3"/><rect x="421.9" y="241.0" width="12.4" height="12.4" fill="#b9c7f4"/><rect x="433.9" y="241.0" width="12.4" height="12.4" fill="#c6d1f5"/><rect x="446.0" y="241.0" width="12.4" height="12.4" fill="#d0d8f6"/><rect x="458.1" y="241.0" width="12.4" height="12.4" fill="#d7def7"/><rect x="470.1" y="241.0" width="12.4" height="12.4" fill="#dee3f8"/><rect x="482.2" y="241.0" width="12.4" height="12.4" fill="#e3e7f8"/><rect x="494.2" y="241.0" width="12.4" height="12.4" fill="#e7ebf9"/><rect x="506.3" y="241.0" width="12.4" height="12.4" fill="#eaedfa"/><rect x="518.3" y="241.0" width="12.4" height="12.4" fill="#edf0fa"/><rect x="530.4" y="241.0" width="12.4" height="12.4" fill="#eff2fb"/><rect x="542.4" y="241.0" width="12.4" height="12.4" fill="#f1f3fb"/><rect x="554.5" y="241.0" width="12.4" height="12.4" fill="#f3f5fc"/><rect x="566.5" y="241.0" width="12.4" height="12.4" fill="#f4f6fc"/><rect x="578.6" y="241.0" width="12.4" height="12.4" fill="#f6f7fd"/><rect x="590.6" y="241.0" width="12.4" height="12.4" fill="#f7f8fd"/><rect x="0.0" y="253.1" width="108.8" height="12.4" fill="#000000"/><rect x="108.5" y="253.1" width="12.4" height="12.4" fill="#000001"/><rect x="120.5" y="253.1" width="12.4" height="12.4" fill="#000003"/><rect x="132.6" y="253.1" width="12.4" height="12.4" fill="#000006"/><rect x="144.6" y="253.1" width="12.4" height="12.4" fill="#000008"/><rect x="156.7" y="253.1" width="12.4" height="12.4" fill="#00000b"/><rect x="168.8" y="253.1" width="12.4" height="12.4" fill="#00000e"/><rect x="180.8" y="253.1" width="12.4" height="12.4" fill="#030011"/><rect x="192.9" y="253.1" width="12.4" height="12.4" fill="#060314"/><rect x="204.9" y="253.1" width="12.4" height="12.4" fill="#080618"/><rect x="217.0" y="253.1" width="12.4" height="12.4" fill="#0a081d"/><rect x="229.0" y="253.1" width="12.4" height="12.4" fill="#0b0a23"/><rect x="241.1" y="253.1" width="12.4" height="12.4" fill="#0d0b2c"/><rect x="253.1" y="253.1" width="12.4" height="12.4" fill="#0e0d37"/><rect x="265.2" y="253.1" width="12.4" height="12.4" fill="#100e46"/><rect x="277.2" y="253.1" width="12.4" height="12.4" fill="#120f58"/><rect x="289.3" y="253.1" width="12.4" height="12.4" fill="#15126f"/><rect x="301.4" y="253.1" width="12.4" height="12.4" fill="#1d1689"/><rect x="313.4" y="253.1" width="12.4" height="12.4" fill="#2c20a3"/><rect x="325.5" y="253.1" width="12.4" height="12.4" fill="#4230b9"/><rect x="337.5" y="253.1" width="12.4" height="12.4" fill="#5c45ca"/><rect x="349.6" y="253.1" width="12.4" height="12.4" fill="#7a5ed7"/><rect x="361.6" y="253.1" width="12.4" height="12.4" fill="#9279e0"/><rect x="373.7" y="253.1" width="12.4" height="12.4" fill="#a790e6"/><rect x="385.7" y="253.1" width="12.4" height="12.4" fill="#b7a5ea"/><rect x="397.8" y="253.1" width="12.4" height="12.4" fill="#c4b5ed"/><rect x="409.8" y="253.1" width="12.4" height="12.4" fill="#cfc3ef"/><rect x="421.9" y="253.1" width="12.4" height="12.4" fill="#d7cdf1"/><rect x="433.9" y="253.1" width="12.4" height="12.4" fill="#ddd5f3"/><rect x="446.0" y="253.1" width="12.4" height="12.4" fill="#e2dcf4"/><rect x="458.1" y="253.1" width="12.4" height="12.4" fill="#e6e1f5"/><rect x="470.1" y="253.1" width="12.4" height="12.4" fill="#eae6f6"/><rect x="482.2" y="253.1" width="12.4" height="12.4" fill="#ede9f7"/><rect x="494.2" y="253.1" width="12.4" height="12.4" fill="#efecf8"/><rect x="506.3" y="253.1" width="12.4" height="12.4" fill="#f1eff9"/><rect x="518.3" y="253.1" width="12.4" height="12.4" fill="#f3f1fa"/><rect x="530.4" y="253.1" width="12.4" height="12.4" fill="#f4f3fa"/><rect x="542.4" y="253.1" width="12.4" height="12.4" fill="#f6f4fb"/><rect x="554.5" y="253.1" width="12.4" height="12.4" fill="#f7f5fb"/><rect x="566.5" y="253.1" width="12.4" height="12.4" fill="#f8f7fc"/><rect x="578.6" y="253.1" width="12.4" height="12.4" fill="#f9f8fc"/><rect x="590.6" y="253.1" width="12.4" height="12.4" fill="#f9f8fd"/><rect x="0.0" y="265.1" width="108.8" height="12.4" fill="#000000"/><rect x="108.5" y="265.1" width="12.4" height="12.4" fill="#000002"/><rect x="120.5" y="265.1" width="12.4" height="12.4" fill="#000004"/><rect x="132.6" y="265.1" width="12.4" height="12.4" fill="#000006"/><rect x="144.6" y="265.1" width="12.4" height="12.4" fill="#010009"/><rect x="156.7" y="265.1" width="12.4" height="12.4" fill="#03000c"/><rect x="168.8" y="265.1" width="12.4" height="12.4" fill="#06000f"/><rect x="180.8" y="265.1" width="12.4" height="12.4" fill="#090211"/><rect x="192.9" y="265.1" width="12.4" height="12.4" fill="#0b0514"/><rect x="204.9" y="265.1" width="12.4" height="12.4" fill="#0e0719"/><rect x="217.0" y="265.1" width="12.4" height="12.4" fill="#10091e"/><rect x="229.0" y="265.1" width="12.4" height="12.4" fill="#130b25"/><rect x="241.1" y="265.1" width="12.4" height="12.4" fill="#160c2e"/><rect x="253.1" y="265.1" width="12.4" height="12.4" fill="#1b0e3a"/><rect x="265.2" y="265.1" width="12.4" height="12.4" fill="#211049"/><rect x="277.2" y="265.1" width="12.4" height="12.4" fill="#29125d"/><rect x="289.3" y="265.1" width="12.4" height="12.4" fill="#341574"/><rect x="301.4" y="265.1" width="12.4" height="12.4" fill="#431c8e"/><rect x="313.4" y="265.1" width="12.4" height="12.4" fill="#5828a7"/><rect x="325.5" y="265.1" width="12.4" height="12.4" fill="#733abb"/><rect x="337.5" y="265.1" width="12.4" height="12.4" fill="#8e52ca"/><rect x="349.6" y="265.1" width="12.4" height="12.4" fill="#a46ed6"/><rect x="361.6" y="265.1" width="12.4" height="12.4" fill="#b787de"/><rect x="373.7" y="265.1" width="12.4" height="12.4" fill="#c49de3"/><rect x="385.7" y="265.1" width="12.4" height="12.4" fill="#cfafe8"/><rect x="397.8" y="265.1" width="12.4" height="12.4" fill="#d7beeb"/><rect x="409.8" y="265.1" width="12.4" height="12.4" fill="#dec9ee"/><rect x="421.9" y="265.1" width="12.4" height="12.4" fill="#e3d2f0"/><rect x="433.9" y="265.1" width="12.4" height="12.4" fill="#e7daf2"/><rect x="446.0" y="265.1" width="12.4" height="12.4" fill="#eae0f3"/><rect x="458.1" y="265.1" width="12.4" height="12.4" fill="#ede4f5"/><rect x="470.1" y="265.1" width="12.4" height="12.4" fill="#efe8f6"/><rect x="482.2" y="265.1" width="12.4" height="12.4" fill="#f1ebf7"/><rect x="494.2" y="265.1" width="12.4" height="12.4" fill="#f3eef8"/><rect x="506.3" y="265.1" width="12.4" height="12.4" fill="#f4f0f9"/><rect x="518.3" y="265.1" width="12.4" height="12.4" fill="#f6f2f9"/><rect x="530.4" y="265.1" width="12.4" height="12.4" fill="#f7f4fa"/><rect x="542.4" y="265.1" width="12.4" height="12.4" fill="#f8f5fb"/><rect x="554.5" y="265.1" width="12.4" height="12.4" fill="#f9f6fb"/><rect x="566.5" y="265.1" width="12.4" height="12.4" fill="#f9f7fc"/><rect x="578.6" y="265.1" width="12.4" height="12.4" fill="#faf8fc"/><rect x="590.6" y="265.1" width="12.4" height="12.4" fill="#fbf9fc"/><rect x="0.0" y="277.2" width="108.8" height="12.4" fill="#000000"/><rect x="108.5" y="277.2" width="12.4" height="12.4" fill="#000002"/><rect x="120.5" y="277.2" width="12.4" height="12.4" fill="#000004"/><rect x="132.6" y="277.2" width="12.4" height="12.4" fill="#020006"/><rect x="144.6" y="277.2" width="12.4" height="12.4" fill="#040009"/><rect x="156.7" y="277.2" width="12.4" height="12.4" fill="#06000c"/><rect x="168.8" y="277.2" width="12.4" height="12.4" fill="#09000f"/><rect x="180.8" y="277.2" width="12.4" height="12.4" fill="#0c0311"/><rect x="192.9" y="277.2" width="12.4" height="12.4" fill="#0f0615"/><rect x="204.9" y="277.2" width="12.4" height="12.4" fill="#110819"/><rect x="217.0" y="277.2" width="12.4" height="12.4" fill="#140a1e"/><rect x="229.0" y="277.2" width="12.4" height="12.4" fill="#180c25"/><rect x="241.1" y="277.2" width="12.4" height="12.4" fill="#1d0d2f"/><rect x="253.1" y="277.2" width="12.4" height="12.4" fill="#240f3b"/><rect x="265.2" y="277.2" width="12.4" height="12.4" fill="#2d114a"/><rect x="277.2" y="277.2" width="12.4" height="12.4" fill="#39135e"/><rect x="289.3" y="277.2" width="12.4" height="12.4" fill="#481775"/><rect x="301.4" y="277.2" width="12.4" height="12.4" fill="#5d1f8f"/><rect x="313.4" y="277.2" width="12.4" height="12.4" fill="#762da7"/><rect x="325.5" y="277.2" width="12.4" height="12.4" fill="#9241ba"/><rect x="337.5" y="277.2" width="12.4" height="12.4" fill="#a95cc9"/><rect x="349.6" y="277.2" width="12.4" height="12.4" fill="#bb78d4"/><rect x="361.6" y="277.2" width="12.4" height="12.4" fill="#c891dc"/><rect x="373.7" y="277.2" width="12.4" height="12.4" fill="#d3a5e2"/><rect x="385.7" y="277.2" width="12.4" height="12.4" fill="#dab6e6"/><rect x="397.8" y="277.2" width="12.4" height="12.4" fill="#e0c3ea"/><rect x="409.8" y="277.2" width="12.4" height="12.4" fill="#e5ceec"/><rect x="421.9" y="277.2" width="12.4" height="12.4" fill="#e8d6ef"/><rect x="433.9" y="277.2" width="12.4" height="12.4" fill="#ecdcf1"/><rect x="446.0" y="277.2" width="12.4" height="12.4" fill="#eee2f3"/><rect x="458.1" y="277.2" width="12.4" height="12.4" fill="#f0e6f4"/><rect x="470.1" y="277.2" width="12.4" height="12.4" fill="#f2e9f5"/><rect x="482.2" y="277.2" width="12.4" height="12.4" fill="#f4ecf6"/><rect x="494.2" y="277.2" width="12.4" height="12.4" fill="#f5eff7"/><rect x="506.3" y="277.2" width="12.4" height="12.4" fill="#f6f1f8"/><rect x="518.3" y="277.2" width="12.4" height="12.4" fill="#f7f3f9"/><rect x="530.4" y="277.2" width="12.4" height="12.4" fill="#f8f4fa"/><rect x="542.4" y="277.2" width="12.4" height="12.4" fill="#f9f6fa"/><rect x="554.5" y="277.2" width="12.4" height="12.4" fill="#faf7fb"/><rect x="566.5" y="277.2" width="12.4" height="12.4" fill="#faf8fc"/><rect x="578.6" y="277.2" width="24.4" height="12.4" fill="#fbf9fc"/><rect x="0.0" y="289.2" width="108.8" height="12.4" fill="#000000"/><rect x="108.5" y="289.2" width="12.4" height="12.4" fill="#000002"/><rect x="120.5" y="289.2" width="12.4" height="12.4" fill="#010004"/><rect x="132.6" y="289.2" width="12.4" height="12.4" fill="#030006"/><rect x="144.6" y="289.2" width="12.4" height="12.4" fill="#060009"/><rect x="156.7" y="289.2" width="12.4" height="12.4" fill="#08000c"/><rect x="168.8" y="289.2" width="12.4" height="12.4" fill="#0b000e"/><rect x="180.8" y="289.2" width="12.4" height="12.4" fill="#0e0311"/><rect x="192.9" y="289.2" width="12.4" height="12.4" fill="#110614"/><rect x="204.9" y="289.2" width="12.4" height="12.4" fill="#130918"/><rect x="217.0" y="289.2" width="12.4" height="12.4" fill="#170a1e"/><rect x="229.0" y="289.2" width="12.4" height="12.4" fill="#1c0c24"/><rect x="241.1" y="289.2" width="12.4" height="12.4" fill="#230d2e"/><rect x="253.1" y="289.2" width="12.4" height="12.4" fill="#2b0f39"/><rect x="265.2" y="289.2" width="12.4" height="12.4" fill="#361149"/><rect x="277.2" y="289.2" width="12.4" height="12.4" fill="#44135c"/><rect x="289.3" y="289.2" width="12.4" height="12.4" fill="#571773"/><rect x="301.4" y="289.2" width="12.4" height="12.4" fill="#6e1f8c"/><rect x="313.4" y="289.2" width="12.4" height="12.4" fill="#892fa3"/><rect x="325.5" y="289.2" width="12.4" height="12.4" fill="#a346b7"/><rect x="337.5" y="289.2" width="12.4" height="12.4" fill="#b763c6"/><rect x="349.6" y="289.2" width="12.4" height="12.4" fill="#c77ed1"/><rect x="361.6" y="289.2" width="12.4" height="12.4" fill="#d296d9"/><rect x="373.7" y="289.2" width="12.4" height="12.4" fill="#daa9df"/><rect x="385.7" y="289.2" width="12.4" height="12.4" fill="#e0b9e4"/><rect x="397.8" y="289.2" width="12.4" height="12.4" fill="#e5c6e8"/><rect x="409.8" y="289.2" width="12.4" height="12.4" fill="#e9d0eb"/><rect x="421.9" y="289.2" width="12.4" height="12.4" fill="#ecd7ee"/><rect x="433.9" y="289.2" width="12.4" height="12.4" fill="#eedef0"/><rect x="446.0" y="289.2" width="12.4" height="12.4" fill="#f0e3f2"/><rect x="458.1" y="289.2" width="12.4" height="12.4" fill="#f2e7f3"/><rect x="470.1" y="289.2" width="12.4" height="12.4" fill="#f4eaf5"/><rect x="482.2" y="289.2" width="12.4" height="12.4" fill="#f5edf6"/><rect x="494.2" y="289.2" width="12.4" height="12.4" fill="#f6eff7"/><rect x="506.3" y="289.2" width="12.4" height="12.4" fill="#f7f1f8"/><rect x="518.3" y="289.2" width="12.4" height="12.4" fill="#f8f3f9"/><rect x="530.4" y="289.2" width="12.4" height="12.4" fill="#f9f5fa"/><rect x="542.4" y="289.2" width="12.4" height="12.4" fill="#faf6fa"/><rect x="554.5" y="289.2" width="12.4" height="12.4" fill="#faf7fb"/><rect x="566.5" y="289.2" width="12.4" height="12.4" fill="#fbf8fb"/><rect x="578.6" y="289.2" width="12.4" height="12.4" fill="#fbf9fc"/><rect x="590.6" y="289.2" width="12.4" height="12.4" fill="#fcf9fc"/><rect x="0.0" y="301.3" width="108.8" height="12.4" fill="#000000"/><rect x="108.5" y="301.3" width="12.4" height="12.4" fill="#010002"/><rect x="120.5" y="301.3" width="12.4" height="12.4" fill="#020004"/><rect x="132.6" y="301.3" width="12.4" height="12.4" fill="#040006"/><rect x="144.6" y="301.3" width="12.4" height="12.4" fill="#070009"/><rect x="156.7" y="301.3" width="12.4" height="12.4" fill="#0a000b"/><rect x="168.8" y="301.3" width="12.4" height="12.4" fill="#0d000e"/><rect x="180.8" y="301.3" width="12.4" height="12.4" fill="#100411"/><rect x="192.9" y="301.3" width="12.4" height="12.4" fill="#120714"/><rect x="204.9" y="301.3" width="12.4" height="12.4" fill="#150918"/><rect x="217.0" y="301.3" width="12.4" height="12.4" fill="#1a0b1d"/><rect x="229.0" y="301.3" width="12.4" height="12.4" fill="#200c24"/><rect x="241.1" y="301.3" width="12.4" height="12.4" fill="#270e2c"/><rect x="253.1" y="301.3" width="12.4" height="12.4" fill="#310f38"/><rect x="265.2" y="301.3" width="12.4" height="12.4" fill="#3d1147"/><rect x="277.2" y="301.3" width="12.4" height="12.4" fill="#4e1359"/><rect x="289.3" y="301.3" width="12.4" height="12.4" fill="#631770"/><rect x="301.4" y="301.3" width="12.4" height="12.4" fill="#7c2089"/><rect x="313.4" y="301.3" width="12.4" height="12.4" fill="#9731a0"/><rect x="325.5" y="301.3" width="12.4" height="12.4" fill="#af4ab4"/><rect x="337.5" y="301.3" width="12.4" height="12.4" fill="#c168c3"/><rect x="349.6" y="301.3" width="12.4" height="12.4" fill="#cf82ce"/><rect x="361.6" y="301.3" width="12.4" height="12.4" fill="#d99ad7"/><rect x="373.7" y="301.3" width="12.4" height="12.4" fill="#dfaddd"/><rect x="385.7" y="301.3" width="12.4" height="12.4" fill="#e4bce3"/><rect x="397.8" y="301.3" width="12.4" height="12.4" fill="#e8c8e7"/><rect x="409.8" y="301.3" width="12.4" height="12.4" fill="#ebd1ea"/><rect x="421.9" y="301.3" width="12.4" height="12.4" fill="#eed9ed"/><rect x="433.9" y="301.3" width="12.4" height="12.4" fill="#f0dfef"/><rect x="446.0" y="301.3" width="12.4" height="12.4" fill="#f2e4f1"/><rect x="458.1" y="301.3" width="12.4" height="12.4" fill="#f3e8f3"/><rect x="470.1" y="301.3" width="12.4" height="12.4" fill="#f5ebf4"/><rect x="482.2" y="301.3" width="12.4" height="12.4" fill="#f6eef6"/><rect x="494.2" y="301.3" width="12.4" height="12.4" fill="#f7f0f7"/><rect x="506.3" y="301.3" width="12.4" height="12.4" fill="#f8f2f8"/><rect x="518.3" y="301.3" width="12.4" height="12.4" fill="#f9f3f9"/><rect x="530.4" y="301.3" width="12.4" height="12.4" fill="#faf5f9"/><rect x="542.4" y="301.3" width="12.4" height="12.4" fill="#faf6fa"/><rect x="554.5" y="301.3" width="12.4" height="12.4" fill="#fbf7fb"/><rect x="566.5" y="301.3" width="12.4" height="12.4" fill="#fbf8fb"/><rect x="578.6" y="301.3" width="12.4" height="12.4" fill="#fcf9fc"/><rect x="590.6" y="301.3" width="12.4" height="12.4" fill="#fcfafc"/><rect x="0.0" y="313.3" width="108.8" height="12.4" fill="#000000"/><rect x="108.5" y="313.3" width="12.4" height="12.4" fill="#010001"/><rect x="120.5" y="313.3" width="12.4" height="12.4" fill="#020003"/><rect x="132.6" y="313.3" width="12.4" height="12.4" fill="#050005"/><rect x="144.6" y="313.3" width="12.4" height="12.4" fill="#070007"/><rect x="156.7" y="313.3" width="12.4" height="12.4" fill="#0a000a"/><rect x="168.8" y="313.3" width="12.4" height="12.4" fill="#0d000d"/><rect x="180.8" y="313.3" width="12.4" height="12.4" fill="#10030f"/><rect x="192.9" y="313.3" width="12.4" height="12.4" fill="#130612"/><rect x="204.9" y="313.3" width="12.4" height="12.4" fill="#160915"/><rect x="217.0" y="313.3" width="12.4" height="12.4" fill="#1a0a1a"/><rect x="229.0" y="313.3" width="12.4" height="12.4" fill="#200b20"/><rect x="241.1" y="313.3" width="12.4" height="12.4" fill="#280d27"/><rect x="253.1" y="313.3" width="12.4" height="12.4" fill="#320e31"/><rect x="265.2" y="313.3" width="12.4" height="12.4" fill="#3f103e"/><rect x="277.2" y="313.3" width="12.4" height="12.4" fill="#50124f"/><rect x="289.3" y="313.3" width="12.4" height="12.4" fill="#651563"/><rect x="301.4" y="313.3" width="12.4" height="12.4" fill="#7e1c7b"/><rect x="313.4" y="313.3" width="12.4" height="12.4" fill="#9a2b93"/><rect x="325.5" y="313.3" width="12.4" height="12.4" fill="#b243a9"/><rect x="337.5" y="313.3" width="12.4" height="12.4" fill="#c561ba"/><rect x="349.6" y="313.3" width="12.4" height="12.4" fill="#d27dc7"/><rect x="361.6" y="313.3" width="12.4" height="12.4" fill="#db95d1"/><rect x="373.7" y="313.3" width="12.4" height="12.4" fill="#e2a9d9"/><rect x="385.7" y="313.3" width="12.4" height="12.4" fill="#e6b9df"/><rect x="397.8" y="313.3" width="12.4" height="12.4" fill="#eac6e4"/><rect x="409.8" y="313.3" width="12.4" height="12.4" fill="#edd0e8"/><rect x="421.9" y="313.3" width="12.4" height="12.4" fill="#efd7eb"/><rect x="433.9" y="313.3" width="12.4" height="12.4" fill="#f1deee"/><rect x="446.0" y="313.3" width="12.4" height="12.4" fill="#f3e3f0"/><rect x="458.1" y="313.3" width="12.4" height="12.4" fill="#f4e7f2"/><rect x="470.1" y="313.3" width="12.4" height="12.4" fill="#f5eaf3"/><rect x="482.2" y="313.3" width="12.4" height="12.4" fill="#f6edf5"/><rect x="494.2" y="313.3" width="12.4" height="12.4" fill="#f7eff6"/><rect x="506.3" y="313.3" width="12.4" height="12.4" fill="#f8f1f7"/><rect x="518.3" y="313.3" width="12.4" height="12.4" fill="#f9f3f8"/><rect x="530.4" y="313.3" width="12.4" height="12.4" fill="#faf5f9"/><rect x="542.4" y="313.3" width="12.4" height="12.4" fill="#faf6fa"/><rect x="554.5" y="313.3" width="12.4" height="12.4" fill="#fbf7fa"/><rect x="566.5" y="313.3" width="12.4" height="12.4" fill="#fbf8fb"/><rect x="578.6" y="313.3" width="12.4" height="12.4" fill="#fcf9fb"/><rect x="590.6" y="313.3" width="12.4" height="12.4" fill="#fcf9fc"/><rect x="0.0" y="325.4" width="108.8" height="12.4" fill="#000000"/><rect x="108.5" y="325.4" width="12.4" height="12.4" fill="#010000"/><rect x="120.5" y="325.4" width="12.4" height="12.4" fill="#030001"/><rect x="132.6" y="325.4" width="12.4" height="12.4" fill="#050003"/><rect x="144.6" y="325.4" width="12.4" height="12.4" fill="#070005"/><rect x="156.7" y="325.4" width="12.4" height="12.4" fill="#0a0008"/><rect x="168.8" y="325.4" width="12.4" height="12.4" fill="#0d000b"/><rect x="180.8" y="325.4" width="12.4" height="12.4" fill="#10020d"/><rect x="192.9" y="325.4" width="12.4" height="12.4" fill="#130510"/><rect x="204.9" y="325.4" width="12.4" height="12.4" fill="#160813"/><rect x="217.0" y="325.4" width="12.4" height="12.4" fill="#1b0a16"/><rect x="229.0" y="325.4" width="12.4" height="12.4" fill="#210b1b"/><rect x="241.1" y="325.4" width="12.4" height="12.4" fill="#290c22"/><rect x="253.1" y="325.4" width="12.4" height="12.4" fill="#330d2a"/><rect x="265.2" y="325.4" width="12.4" height="12.4" fill="#400e34"/><rect x="277.2" y="325.4" width="12.4" height="12.4" fill="#510f42"/><rect x="289.3" y="325.4" width="12.4" height="12.4" fill="#671154"/><rect x="301.4" y="325.4" width="12.4" height="12.4" fill="#801769"/><rect x="313.4" y="325.4" width="12.4" height="12.4" fill="#9d2482"/><rect x="325.5" y="325.4" width="12.4" height="12.4" fill="#b53c99"/><rect x="337.5" y="325.4" width="12.4" height="12.4" fill="#c859ac"/><rect x="349.6" y="325.4" width="12.4" height="12.4" fill="#d577bc"/><rect x="361.6" y="325.4" width="12.4" height="12.4" fill="#de90c8"/><rect x="373.7" y="325.4" width="12.4" height="12.4" fill="#e5a5d2"/><rect x="385.7" y="325.4" width="12.4" height="12.4" fill="#e9b6d9"/><rect x="397.8" y="325.4" width="12.4" height="12.4" fill="#ecc3df"/><rect x="409.8" y="325.4" width="12.4" height="12.4" fill="#eecde4"/><rect x="421.9" y="325.4" width="12.4" height="12.4" fill="#f0d6e8"/><rect x="433.9" y="325.4" width="12.4" height="12.4" fill="#f2dceb"/><rect x="446.0" y="325.4" width="12.4" height="12.4" fill="#f4e2ee"/><rect x="458.1" y="325.4" width="12.4" height="12.4" fill="#f5e6f0"/><rect x="470.1" y="325.4" width="12.4" height="12.4" fill="#f6e9f2"/><rect x="482.2" y="325.4" width="12.4" height="12.4" fill="#f7ecf4"/><rect x="494.2" y="325.4" width="12.4" height="12.4" fill="#f8eff5"/><rect x="506.3" y="325.4" width="12.4" height="12.4" fill="#f9f1f6"/><rect x="518.3" y="325.4" width="12.4" height="12.4" fill="#f9f3f7"/><rect x="530.4" y="325.4" width="12.4" height="12.4" fill="#faf4f8"/><rect x="542.4" y="325.4" width="12.4" height="12.4" fill="#fbf5f9"/><rect x="554.5" y="325.4" width="12.4" height="12.4" fill="#fbf7fa"/><rect x="566.5" y="325.4" width="12.4" height="12.4" fill="#fcf8fa"/><rect x="578.6" y="325.4" width="12.4" height="12.4" fill="#fcf8fb"/><rect x="590.6" y="325.4" width="12.4" height="12.4" fill="#fcf9fb"/><rect x="0.0" y="337.4" width="108.8" height="12.4" fill="#000000"/><rect x="108.5" y="337.4" width="12.4" height="12.4" fill="#010000"/><rect x="120.5" y="337.4" width="12.4" height="12.4" fill="#030000"/><rect x="132.6" y="337.4" width="12.4" height="12.4" fill="#050001"/><rect x="144.6" y="337.4" width="12.4" height="12.4" fill="#070003"/><rect x="156.7" y="337.4" width="12.4" height="12.4" fill="#0a0005"/><rect x="168.8" y="337.4" width="12.4" height="12.4" fill="#0e0008"/><rect x="180.8" y="337.4" width="12.4" height="12.4" fill="#11000a"/><rect x="192.9" y="337.4" width="12.4" height="12.4" fill="#13040d"/><rect x="204.9" y="337.4" width="12.4" height="12.4" fill="#17070f"/><rect x="217.0" y="337.4" width="12.4" height="12.4" fill="#1b0912"/><rect x="229.0" y="337.4" width="12.4" height="12.4" fill="#210a16"/><rect x="241.1" y="337.4" width="12.4" height="12.4" fill="#290b1b"/><rect x="253.1" y="337.4" width="12.4" height="12.4" fill="#330c21"/><rect x="265.2" y="337.4" width="12.4" height="12.4" fill="#410c29"/><rect x="277.2" y="337.4" width="12.4" height="12.4" fill="#520c33"/><rect x="289.3" y="337.4" width="12.4" height="12.4" fill="#680c41"/><rect x="301.4" y="337.4" width="12.4" height="12.4" fill="#820f52"/><rect x="313.4" y="337.4" width="12.4" height="12.4" fill="#9e1b68"/><rect x="325.5" y="337.4" width="12.4" height="12.4" fill="#b83280"/><rect x="337.5" y="337.4" width="12.4" height="12.4" fill="#cc4f97"/><rect x="349.6" y="337.4" width="12.4" height="12.4" fill="#d96eaa"/><rect x="361.6" y="337.4" width="12.4" height="12.4" fill="#e288ba"/><rect x="373.7" y="337.4" width="12.4" height="12.4" fill="#e89fc6"/><rect x="385.7" y="337.4" width="12.4" height="12.4" fill="#ecb1d0"/><rect x="397.8" y="337.4" width="12.4" height="12.4" fill="#eebfd8"/><rect x="409.8" y="337.4" width="12.4" height="12.4" fill="#f0cade"/><rect x="421.9" y="337.4" width="12.4" height="12.4" fill="#f2d3e3"/><rect x="433.9" y="337.4" width="12.4" height="12.4" fill="#f4dae7"/><rect x="446.0" y="337.4" width="12.4" height="12.4" fill="#f5e0ea"/><rect x="458.1" y="337.4" width="12.4" height="12.4" fill="#f6e5ed"/><rect x="470.1" y="337.4" width="12.4" height="12.4" fill="#f7e8f0"/><rect x="482.2" y="337.4" width="12.4" height="12.4" fill="#f8ecf2"/><rect x="494.2" y="337.4" width="12.4" height="12.4" fill="#f8eef3"/><rect x="506.3" y="337.4" width="12.4" height="12.4" fill="#f9f0f5"/><rect x="518.3" y="337.4" width="12.4" height="12.4" fill="#faf2f6"/><rect x="530.4" y="337.4" width="12.4" height="12.4" fill="#faf4f7"/><rect x="542.4" y="337.4" width="12.4" height="12.4" fill="#fbf5f8"/><rect x="554.5" y="337.4" width="12.4" height="12.4" fill="#fbf6f9"/><rect x="566.5" y="337.4" width="12.4" height="12.4" fill="#fcf7fa"/><rect x="578.6" y="337.4" width="12.4" height="12.4" fill="#fcf8fa"/><rect x="590.6" y="337.4" width="12.4" height="12.4" fill="#fdf9fb"/><rect x="0.0" y="349.5" width="108.8" height="12.4" fill="#000000"/><rect x="108.5" y="349.5" width="12.4" height="12.4" fill="#010000"/><rect x="120.5" y="349.5" width="12.4" height="12.4" fill="#020000"/><rect x="132.6" y="349.5" width="12.4" height="12.4" fill="#050000"/><rect x="144.6" y="349.5" width="12.4" height="12.4" fill="#070000"/><rect x="156.7" y="349.5" width="12.4" height="12.4" fill="#0a0001"/><rect x="168.8" y="349.5" width="12.4" height="12.4" fill="#0e0003"/><rect x="180.8" y="349.5" width="12.4" height="12.4" fill="#110006"/><rect x="192.9" y="349.5" width="12.4" height="12.4" fill="#130208"/><rect x="204.9" y="349.5" width="12.4" height="12.4" fill="#17060b"/><rect x="217.0" y="349.5" width="12.4" height="12.4" fill="#1b080d"/><rect x="229.0" y="349.5" width="12.4" height="12.4" fill="#210910"/><rect x="241.1" y="349.5" width="12.4" height="12.4" fill="#290913"/><rect x="253.1" y="349.5" width="12.4" height="12.4" fill="#330a16"/><rect x="265.2" y="349.5" width="12.4" height="12.4" fill="#40091b"/><rect x="277.2" y="349.5" width="12.4" height="12.4" fill="#510621"/><rect x="289.3" y="349.5" width="12.4" height="12.4" fill="#67002a"/><rect x="301.4" y="349.5" width="12.4" height="12.4" fill="#810035"/><rect x="313.4" y="349.5" width="12.4" height="12.4" fill="#9f0b43"/><rect x="325.5" y="349.5" width="12.4" height="12.4" fill="#ba2557"/><rect x="337.5" y="349.5" width="12.4" height="12.4" fill="#d04370"/><rect x="349.6" y="349.5" width="12.4" height="12.4" fill="#de6388"/><rect x="361.6" y="349.5" width="12.4" height="12.4" fill="#e77f9d"/><rect x="373.7" y="349.5" width="12.4" height="12.4" fill="#ed97af"/><rect x="385.7" y="349.5" width="12.4" height="12.4" fill="#f0aabe"/><rect x="397.8" y="349.5" width="12.4" height="12.4" fill="#f2bac9"/><rect x="409.8" y="349.5" width="12.4" height="12.4" fill="#f4c7d2"/><rect x="421.9" y="349.5" width="12.4" height="12.4" fill="#f5d0da"/><rect x="433.9" y="349.5" width="12.4" height="12.4" fill="#f6d8df"/><rect x="446.0" y="349.5" width="12.4" height="12.4" fill="#f6dee4"/><rect x="458.1" y="349.5" width="12.4" height="12.4" fill="#f7e3e8"/><rect x="470.1" y="349.5" width="12.4" height="12.4" fill="#f8e7eb"/><rect x="482.2" y="349.5" width="12.4" height="12.4" fill="#f9eaee"/><rect x="494.2" y="349.5" width="12.4" height="12.4" fill="#f9edf0"/><rect x="506.3" y="349.5" width="12.4" height="12.4" fill="#faf0f2"/><rect x="518.3" y="349.5" width="12.4" height="12.4" fill="#faf1f4"/><rect x="530.4" y="349.5" width="12.4" height="12.4" fill="#fbf3f5"/><rect x="542.4" y="349.5" width="12.4" height="12.4" fill="#fbf5f6"/><rect x="554.5" y="349.5" width="12.4" height="12.4" fill="#fcf6f7"/><rect x="566.5" y="349.5" width="12.4" height="12.4" fill="#fcf7f8"/><rect x="578.6" y="349.5" width="12.4" height="12.4" fill="#fdf8f9"/><rect x="590.6" y="349.5" width="12.4" height="12.4" fill="#fdf9fa"/><rect x="0.0" y="361.5" width="96.7" height="12.4" fill="#000000"/><rect x="96.4" y="361.5" width="12.4" height="12.4" fill="#010101"/><rect x="108.5" y="361.5" width="12.4" height="12.4" fill="#020202"/><rect x="120.5" y="361.5" width="12.4" height="12.4" fill="#040404"/><rect x="132.6" y="361.5" width="12.4" height="12.4" fill="#060606"/><rect x="144.6" y="361.5" width="12.4" height="12.4" fill="#090909"/><rect x="156.7" y="361.5" width="12.4" height="12.4" fill="#0b0b0b"/><rect x="168.8" y="361.5" width="12.4" height="12.4" fill="#0e0e0e"/><rect x="180.8" y="361.5" width="12.4" height="12.4" fill="#101010"/><rect x="192.9" y="361.5" width="12.4" height="12.4" fill="#131313"/><rect x="204.9" y="361.5" width="12.4" height="12.4" fill="#181818"/><rect x="217.0" y="361.5" width="12.4" height="12.4" fill="#1d1d1d"/><rect x="229.0" y="361.5" width="12.4" height="12.4" fill="#242424"/><rect x="241.1" y="361.5" width="12.4" height="12.4" fill="#2d2d2d"/><rect x="253.1" y="361.5" width="12.4" height="12.4" fill="#383838"/><rect x="265.2" y="361.5" width="12.4" height="12.4" fill="#474747"/><rect x="277.2" y="361.5" width="12.4" height="12.4" fill="#5a5a5a"/><rect x="289.3" y="361.5" width="12.4" height="12.4" fill="#6f6f6f"/><rect x="301.4" y="361.5" width="12.4" height="12.4" fill="#878787"/><rect x="313.4" y="361.5" width="12.4" height="12.4" fill="#9b9b9b"/><rect x="325.5" y="361.5" width="12.4" height="12.4" fill="#adadad"/><rect x="337.5" y="361.5" width="12.4" height="12.4" fill="#bcbcbc"/><rect x="349.6" y="361.5" width="12.4" height="12.4" fill="#c8c8c8"/><rect x="361.6" y="361.5" width="12.4" height="12.4" fill="#d1d1d1"/><rect x="373.7" y="361.5" width="12.4" height="12.4" fill="#d9d9d9"/><rect x="385.7" y="361.5" width="12.4" height="12.4" fill="#dfdfdf"/><rect x="397.8" y="361.5" width="12.4" height="12.4" fill="#e4e4e4"/><rect x="409.8" y="361.5" width="12.4" height="12.4" fill="#e8e8e8"/><rect x="421.9" y="361.5" width="12.4" height="12.4" fill="#ebebeb"/><rect x="433.9" y="361.5" width="12.4" height="12.4" fill="#eeeeee"/><rect x="446.0" y="361.5" width="12.4" height="12.4" fill="#f0f0f0"/><rect x="458.1" y="361.5" width="12.4" height="12.4" fill="#f2f2f2"/><rect x="470.1" y="361.5" width="12.4" height="12.4" fill="#f3f3f3"/><rect x="482.2" y="361.5" width="12.4" height="12.4" fill="#f5f5f5"/><rect x="494.2" y="361.5" width="12.4" height="12.4" fill="#f6f6f6"/><rect x="506.3" y="361.5" width="12.4" height="12.4" fill="#f7f7f7"/><rect x="518.3" y="361.5" width="12.4" height="12.4" fill="#f8f8f8"/><rect x="530.4" y="361.5" width="12.4" height="12.4" fill="#f9f9f9"/><rect x="542.4" y="361.5" width="24.4" height="12.4" fill="#fafafa"/><rect x="566.5" y="361.5" width="24.4" height="12.4" fill="#fbfbfb"/><rect x="590.6" y="361.5" width="12.4" height="12.4" fill="#fcfcfc"/></svg>
<span class="t" style="left:684.55px;top:16.00px;font-size:32.50px;color:#939393;font-weight:400;transform:scaleX(0.9038);-webkit-text-stroke:0.55px #6b6b6b;">lighttable</span>
<span class="t" style="left:825.60px;top:18.01px;font-size:26.80px;color:#8e8e8e;font-weight:400;transform:scaleX(1.0000);-webkit-text-stroke:0.5px #6b6b6b;">|</span>
<span class="t" style="left:855.02px;top:16.00px;font-size:32.50px;color:#ececec;font-weight:400;transform:scaleX(0.9510);-webkit-text-stroke:0.75px #6b6b6b;">darkroom</span>
<span class="t" style="left:1008.50px;top:18.01px;font-size:26.80px;color:#8e8e8e;font-weight:400;transform:scaleX(1.0000);-webkit-text-stroke:0.5px #6b6b6b;">|</span>
<span class="t" style="left:1042.82px;top:16.00px;font-size:32.50px;color:#939393;font-weight:400;transform:scaleX(0.9221);-webkit-text-stroke:0.55px #6b6b6b;">other</span>
<span class="t" style="left:-22.90px;top:83.00px;font-size:20.00px;color:#d6d6d6;font-weight:400;transform:scaleX(0.9736);">filter</span>
<span class="t" style="left:315.00px;top:83.00px;font-size:20.00px;color:#959595;font-weight:400;transform:scaleX(0.9919);">filename</span>
<span class="t" style="left:435.20px;top:83.00px;font-size:20.00px;color:#959595;font-weight:400;transform:scaleX(0.8847);">exte...</span>
<span class="t" style="left:505.19px;top:83.00px;font-size:20.00px;color:#d8d8d8;font-weight:400;transform:scaleX(0.9780);">sort by</span>
<span class="t" style="left:631.20px;top:83.21px;font-size:20.00px;color:#ececec;font-weight:700;transform:scaleX(1.0000);font-family:'Liberation Serif',serif;letter-spacing:-1.3px;">...</span>
<span class="t" style="left:949.69px;top:426.00px;font-size:20.00px;color:#a2a2a2;font-weight:400;transform:scaleX(0.9481);">search modules by name or t...</span>
<span class="t" style="left:949.10px;top:443.00px;font-size:20.00px;color:#dcdcdc;font-weight:700;transform:scaleX(0.8225);clip-path:inset(8.6px 0 0 0);">AgX</span>
<span class="t" style="left:945.28px;top:491.00px;font-size:20.00px;color:#d0d0d0;font-weight:400;transform:scaleX(0.9999);">settings</span>
<span class="t" style="left:1081.67px;top:491.00px;font-size:20.00px;color:#e8e8e8;font-weight:400;transform:scaleX(0.9853);">primaries</span>
<span class="t" style="left:951.59px;top:533.00px;font-size:20.00px;color:#d4d4d4;font-weight:400;transform:scaleX(0.9787);">disable adjustments</span>
<span class="t" style="left:911.89px;top:564.00px;font-size:20.00px;color:#d4d4d4;font-weight:400;transform:scaleX(0.9732);">reset primaries</span>
<span class="t" style="left:911.89px;top:596.00px;font-size:20.00px;color:#d4d4d4;font-weight:400;transform:scaleX(0.9676);">base primaries</span>
<span class="t" style="left:1090.68px;top:596.00px;font-size:20.00px;color:#d4d4d4;font-weight:400;transform:scaleX(0.9411);">Rec2020</span>
<span class="t" style="left:959.89px;top:629.00px;font-size:20.00px;color:#e2e2e2;font-weight:700;transform:scaleX(0.9511);">before tone mapping</span>
<span class="t" style="left:911.89px;top:664.00px;font-size:20.00px;color:#d4d4d4;font-weight:400;transform:scaleX(0.9641);">red attenuation</span>
<span class="t" style="left:1103.97px;top:664.00px;font-size:20.00px;color:#d4d4d4;font-weight:400;transform:scaleX(0.9175);">29.46%</span>
<span class="t" style="left:911.88px;top:715.00px;font-size:20.00px;color:#d4d4d4;font-weight:400;transform:scaleX(0.9592);">red rotation</span>
<span class="t" style="left:1119.86px;top:715.00px;font-size:20.00px;color:#d4d4d4;font-weight:400;transform:scaleX(0.9774);">+2.0°</span>
<span class="t" style="left:911.89px;top:766.00px;font-size:20.00px;color:#d4d4d4;font-weight:400;transform:scaleX(0.9611);">green attenuation</span>
<span class="t" style="left:1103.88px;top:766.00px;font-size:20.00px;color:#d4d4d4;font-weight:400;transform:scaleX(0.9039);">25.86%</span>
<span class="t" style="left:911.88px;top:817.00px;font-size:20.00px;color:#d4d4d4;font-weight:400;transform:scaleX(0.9547);">green rotation</span>
<span class="t" style="left:1125.86px;top:817.00px;font-size:20.00px;color:#d4d4d4;font-weight:400;transform:scaleX(0.9520);">-1.2°</span>
<span class="t" style="left:911.89px;top:868.00px;font-size:20.00px;color:#d4d4d4;font-weight:400;transform:scaleX(0.9670);">blue attenuation</span>
<span class="t" style="left:1104.76px;top:868.00px;font-size:20.00px;color:#d4d4d4;font-weight:400;transform:scaleX(0.9058);">14.64%</span>
<span class="t" style="left:911.88px;top:919.00px;font-size:20.00px;color:#d4d4d4;font-weight:400;transform:scaleX(0.9615);">blue rotation</span>
<span class="t" style="left:1125.86px;top:919.00px;font-size:20.00px;color:#d4d4d4;font-weight:400;transform:scaleX(0.9520);">-3.6°</span>
<span class="t" style="left:969.40px;top:971.00px;font-size:20.00px;color:#e2e2e2;font-weight:700;transform:scaleX(0.9355);">after tone mapping</span>
<span class="t" style="left:951.28px;top:1009.00px;font-size:20.00px;color:#d4d4d4;font-weight:400;transform:scaleX(0.9488);">reverse all</span>
<span class="t" style="left:1063.19px;top:1009.00px;font-size:20.00px;color:#d4d4d4;font-weight:400;transform:scaleX(0.9692);">set from above</span>
<span class="t" style="left:913.30px;top:1042.61px;font-size:20.00px;color:#d4d4d4;font-weight:400;transform:scaleX(0.9643);clip-path:inset(0 0 9.8px 0);">master purity boost</span>
<span class="t" style="left:1095.00px;top:1042.61px;font-size:20.00px;color:#d4d4d4;font-weight:400;transform:scaleX(0.8915);clip-path:inset(0 0 9.8px 0);">100.00%</span>
<span class="t" style="left:918.78px;top:1066.00px;font-size:22.50px;color:#d8d8d8;font-weight:400;transform:scaleX(0.8126);">module or... v5.0 JPEG</span>
<span class="t" style="left:81.93px;top:1072.00px;font-size:22.50px;color:#dadada;font-weight:400;transform:scaleX(1.0508);">1/inf</span>
<span class="t" style="left:134.60px;top:1073.00px;font-size:15.50px;color:#dadada;font-weight:400;transform:scaleX(1.0000);">•</span>
<span class="t" style="left:147.49px;top:1072.00px;font-size:22.50px;color:#dadada;font-weight:400;transform:scaleX(1.0582);">f/0.0</span>
<span class="t" style="left:200.40px;top:1073.00px;font-size:15.50px;color:#dadada;font-weight:400;transform:scaleX(1.0000);">•</span>
<span class="t" style="left:212.96px;top:1072.00px;font-size:22.50px;color:#dadada;font-weight:400;transform:scaleX(1.0129);">0.0 mm</span>
<span class="t" style="left:295.50px;top:1073.00px;font-size:15.50px;color:#dadada;font-weight:400;transform:scaleX(1.0000);">•</span>
<span class="t" style="left:307.96px;top:1072.00px;font-size:22.50px;color:#dadada;font-weight:400;transform:scaleX(0.8999);">0 ISO</span>
<span class="t" style="left:377.03px;top:1072.00px;font-size:22.50px;color:#dadada;font-weight:400;transform:scaleX(0.9573);">Rating:</span>
<span class="t" style="left:448.75px;top:1069.60px;font-size:25.20px;color:#f0f0f0;font-weight:400;transform:scaleX(1.0992);font-family:'DejaVu Sans',sans-serif;">★</span>
<span class="t" style="left:1231.00px;top:296.00px;font-size:29.00px;color:#f4f4f4;font-weight:400;transform:scaleX(1.0000);">e</span>
<span class="t" style="left:1240.00px;top:981.00px;font-size:29.00px;color:#f0f0f0;font-weight:400;transform:scaleX(1.0000);">x</span>
<span class="t" style="left:1240.30px;top:1021.41px;font-size:29.00px;color:#f0f0f0;font-weight:400;transform:scaleX(1.0000);">o</span>
<div class="a" style="left:1225px;top:0;width:15px;height:1107px;background:#606060"></div>
<!-- side-panel collapse arrow -->
<svg style="left:1224px;top:533px" width="17" height="32" viewBox="1224 533 17 32"><path d="M1224.4 534L1239.8 549.2L1224.4 564.4Z" fill="#efefef"/></svg>

</body></html>
